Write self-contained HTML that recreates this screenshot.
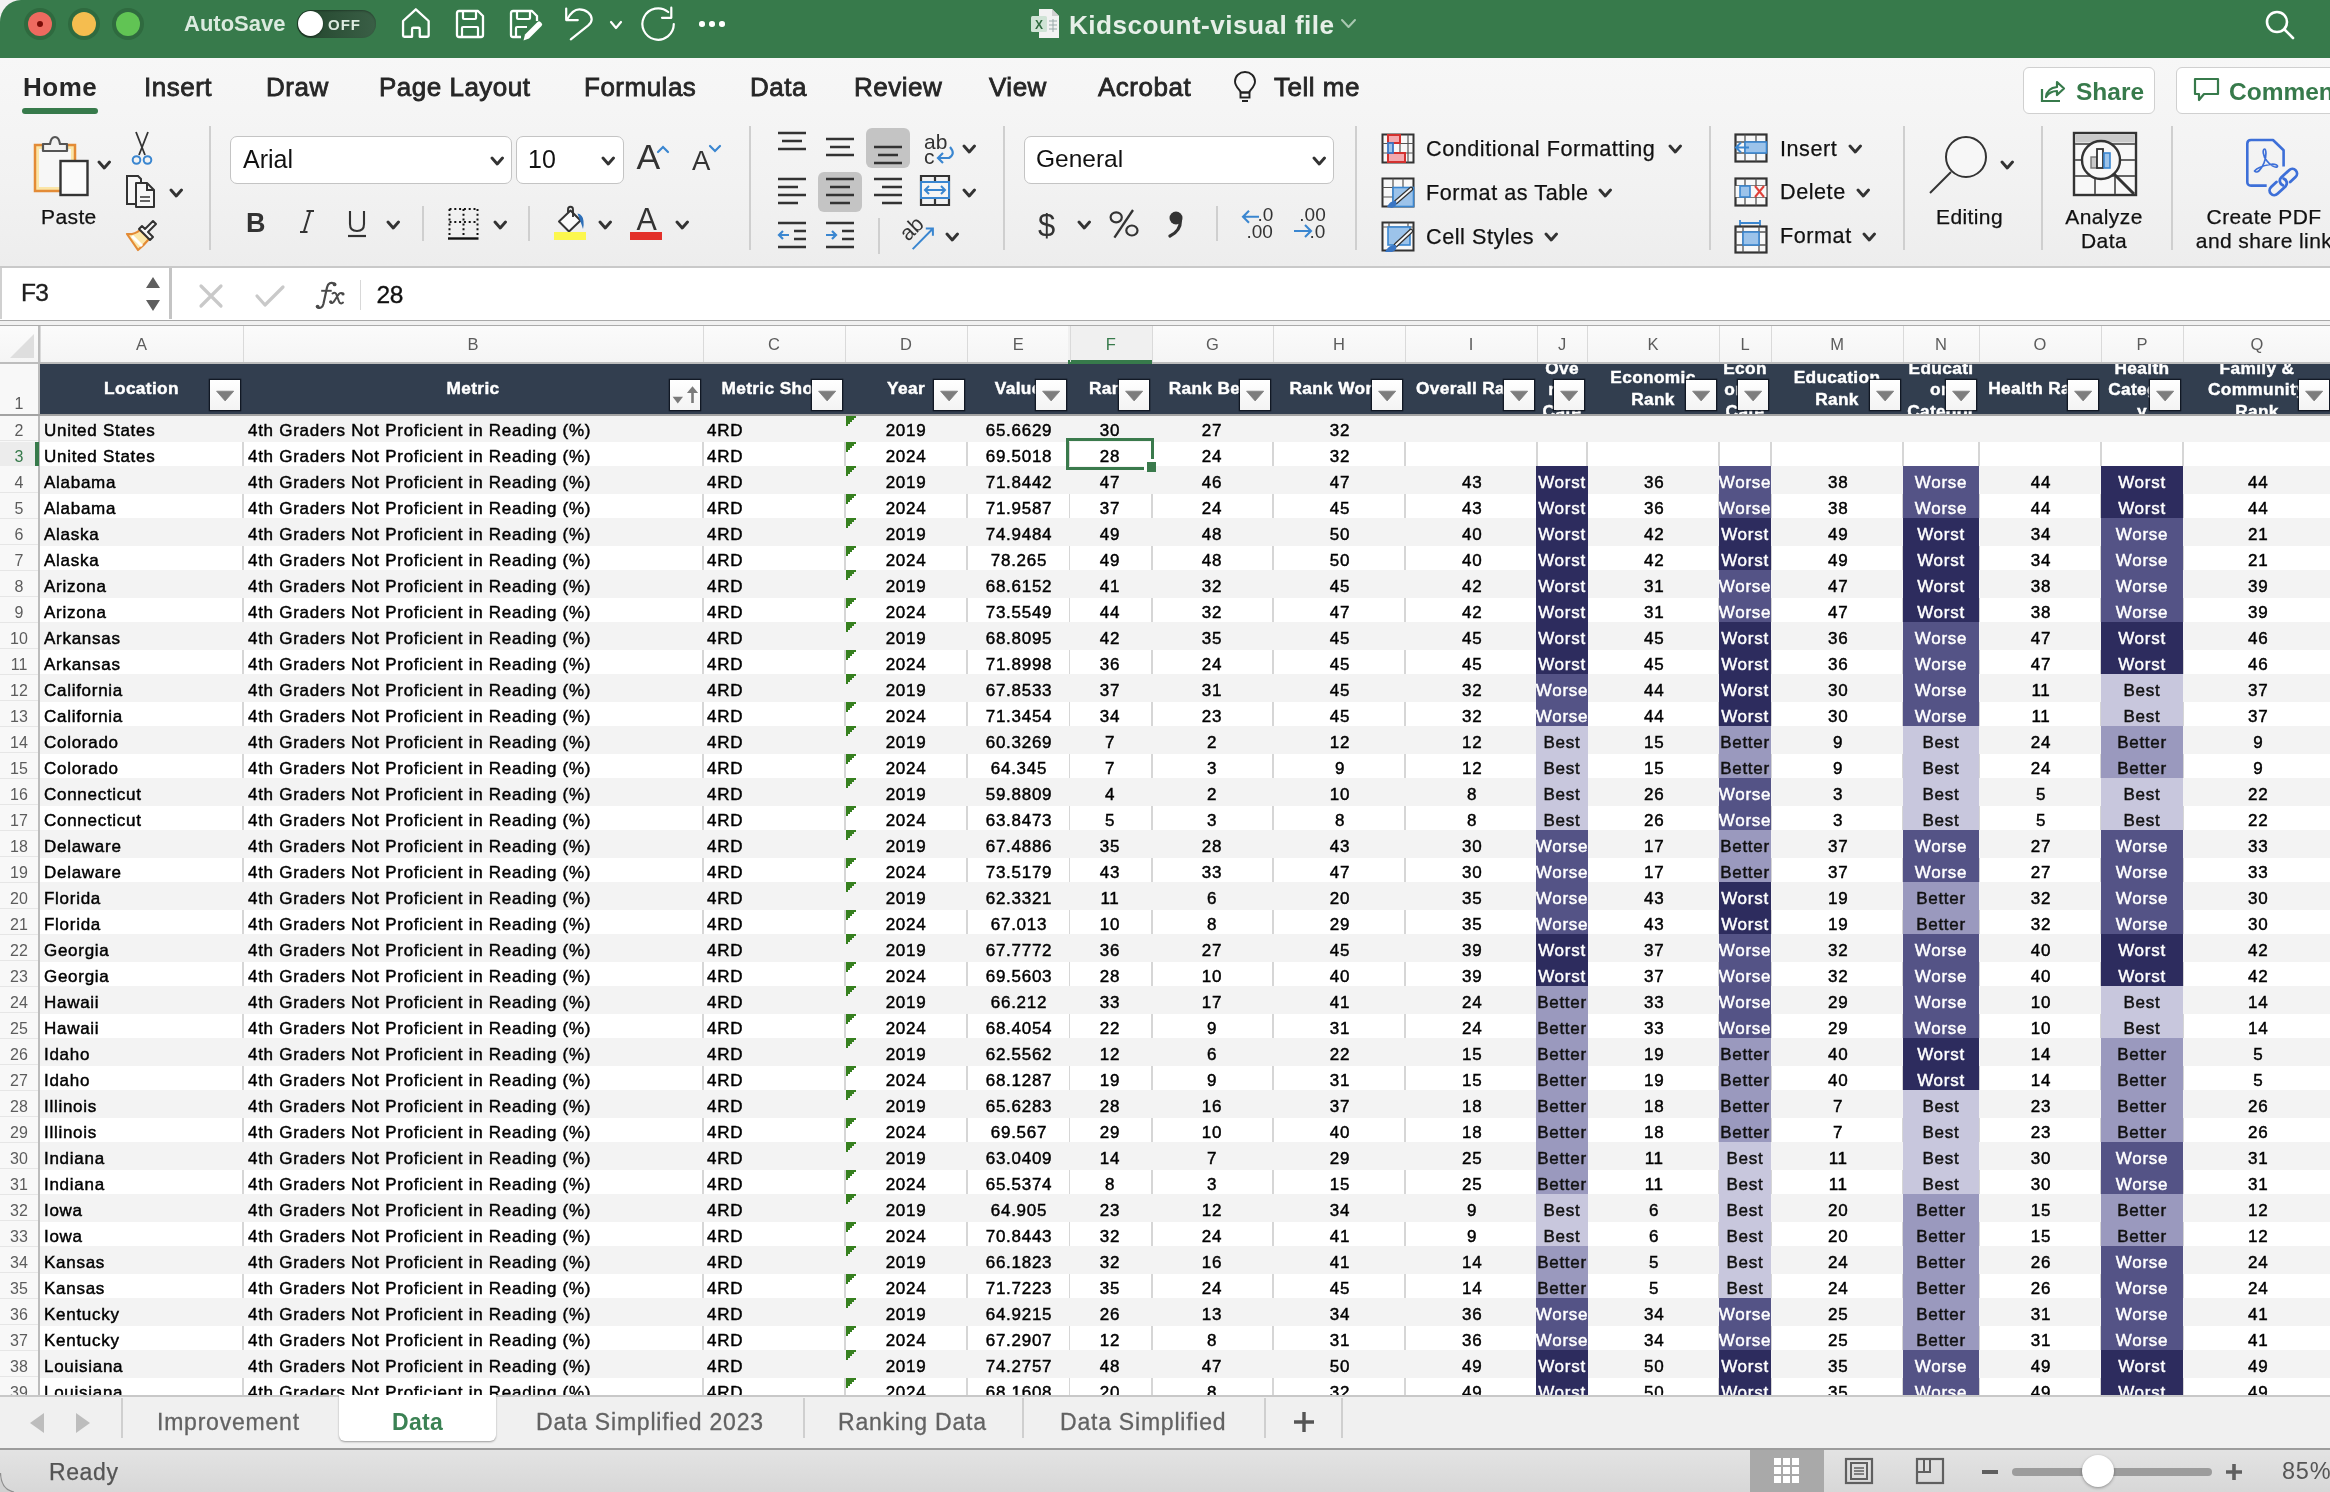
<!DOCTYPE html>
<html><head><meta charset="utf-8"><style>
html,body{margin:0;padding:0;}
body{width:2330px;height:1492px;overflow:hidden;position:relative;font-family:"Liberation Sans", sans-serif;background:#fff;}
svg{display:block;}
body{will-change:transform;}
</style></head><body>
<div style="position:absolute;left:0px;top:0px;width:30px;height:30px;background:#f2f2f2;"></div><div style="position:absolute;left:0;top:0;width:2330px;height:58px;background:#377a4b;border-top-left-radius:21px 22px;"></div><div style="position:absolute;left:24px;top:8px;width:32px;height:32px;border-radius:50%;background:#2f6a3f;"></div><div style="position:absolute;left:28px;top:12px;width:24px;height:24px;border-radius:50%;background:#ee6a5f;"></div><div style="position:absolute;left:68px;top:8px;width:32px;height:32px;border-radius:50%;background:#2f6a3f;"></div><div style="position:absolute;left:72px;top:12px;width:24px;height:24px;border-radius:50%;background:#f5bd4f;"></div><div style="position:absolute;left:112px;top:8px;width:32px;height:32px;border-radius:50%;background:#2f6a3f;"></div><div style="position:absolute;left:116px;top:12px;width:24px;height:24px;border-radius:50%;background:#61c454;"></div><div style="position:absolute;left:37px;top:21px;width:6px;height:6px;border-radius:50%;background:#7a0c07;"></div><div style="position:absolute;top:13.38px;font-size:22px;line-height:1;color:#dbeadf;white-space:nowrap;font-weight:bold;left:184.00px;">AutoSave</div><div style="position:absolute;left:297px;top:10px;width:79px;height:28px;border-radius:14px;background:linear-gradient(90deg,#22452c,#3a5f46);box-shadow:inset 0 1px 2px rgba(0,0,0,.3);"></div><div style="position:absolute;left:298px;top:11px;width:25px;height:25px;border-radius:50%;background:#fff;box-shadow:0 1px 2px rgba(0,0,0,.4);"></div><div style="position:absolute;top:16.80px;font-size:15px;line-height:1;color:#dbeadf;white-space:nowrap;font-weight:bold;letter-spacing:1px;left:328.00px;">OFF</div><svg style="position:absolute;left:399px;top:7px;" width="34" height="32" viewBox="0 0 34 32"><path d="M4.05 14 L16.85 2.3 L29.65 14 V28.5 Q29.65 29.75 28.4 29.75 H20.75 V22 Q20.75 20.75 19.5 20.75 H14.3 Q13.05 20.75 13.05 22 V29.75 H5.3 Q4.05 29.75 4.05 28.5 Z" fill="none" stroke="#ffffff" stroke-width="2.3" stroke-linejoin="round"/></svg><svg style="position:absolute;left:454px;top:8px;" width="32" height="32" viewBox="0 0 32 32"><path d="M3 5 Q3 3 5 3 H24 L29 8 V27 Q29 29 27 29 H5 Q3 29 3 27 Z" fill="none" stroke="#ffffff" stroke-width="2.3" stroke-linejoin="round"/><path d="M9 3.5 V10 Q9 11 10 11 H21 Q22 11 22 10 V3.5" fill="none" stroke="#ffffff" stroke-width="2.2"/><path d="M8 29 V20 Q8 19 9 19 H23 Q24 19 24 20 V29" fill="none" stroke="#ffffff" stroke-width="2.2"/></svg><svg style="position:absolute;left:508px;top:8px;" width="36" height="34" viewBox="0 0 36 34"><path d="M29 13 V8 L24 3 H5 Q3 3 3 5 V27 Q3 29 5 29 H13" fill="none" stroke="#ffffff" stroke-width="2.3" stroke-linejoin="round"/><path d="M9 3.5 V10 Q9 11 10 11 H21 Q22 11 22 10 V3.5" fill="none" stroke="#ffffff" stroke-width="2.2"/><path d="M8 29 V20 Q8 19 9 19 H19" fill="none" stroke="#ffffff" stroke-width="2.2"/><path d="M15.5 32.5 L17 26.5 L29.5 14 Q31 12.5 32.5 14 L33.5 15 Q35 16.5 33.5 18 L21 30.5 Z" fill="#ffffff"/></svg><svg style="position:absolute;left:563px;top:7px;" width="34" height="36" viewBox="0 0 34 36"><path d="M3.2 1.5 V13.1 H14.8" fill="none" stroke="#ffffff" stroke-width="2.2" stroke-linecap="round" stroke-linejoin="round"/><path d="M4 12.5 C8 5 12 2.3 16.3 2.3 C23 2.3 28.7 7 28.7 12.3 C28.7 15 27 17 25 18.7 L7.8 32.4" fill="none" stroke="#ffffff" stroke-width="2.2" stroke-linecap="round"/></svg><svg style="position:absolute;left:609px;top:20px;" width="14" height="10" viewBox="0 0 14 10"><path d="M2 2 L7.0 8 L12 2" fill="none" stroke="#ffffff" stroke-width="2.2" stroke-linecap="round" stroke-linejoin="round"/></svg><svg style="position:absolute;left:639px;top:6px;" width="40" height="38" viewBox="0 0 40 38"><path d="M29.2 6 A15.7 15.7 0 1 0 34.8 18" fill="none" stroke="#ffffff" stroke-width="2.2" stroke-linecap="round"/><path d="M23 11.8 H32.3 V1.7" fill="none" stroke="#ffffff" stroke-width="2.2" stroke-linecap="round" stroke-linejoin="round"/></svg><div style="position:absolute;left:699.2px;top:21.2px;width:5.6px;height:5.6px;border-radius:50%;background:#ffffff;"></div><div style="position:absolute;left:709.2px;top:21.2px;width:5.6px;height:5.6px;border-radius:50%;background:#ffffff;"></div><div style="position:absolute;left:719.2px;top:21.2px;width:5.6px;height:5.6px;border-radius:50%;background:#ffffff;"></div><svg style="position:absolute;left:1030px;top:8px;" width="30" height="31" viewBox="0 0 30 31"><path d="M9 1 H22 L29 8 V30 H9 Z" fill="#f2f2f2"/><path d="M22 1 V8 H29" fill="#d0d0d0"/><rect x="1" y="8" width="16" height="16" rx="1.5" fill="#cfe3d5"/><text x="9" y="20.5" font-size="12" font-family="Liberation Sans" text-anchor="middle" fill="#2f6a3f" font-weight="bold">X</text><path d="M19 13 H27 M19 17 H27 M19 21 H27 M23 11 V24" stroke="#9aa" stroke-width="1"/></svg><div style="position:absolute;top:11.82px;font-size:26.2px;line-height:1;color:#e6efe8;white-space:nowrap;font-weight:bold;letter-spacing:0.45px;left:1069.00px;">Kidscount-visual file</div><svg style="position:absolute;left:1340px;top:18px;" width="17" height="11" viewBox="0 0 17 11"><path d="M2 2 L8.5 9 L15 2" fill="none" stroke="#a8c8b0" stroke-width="2" stroke-linecap="round" stroke-linejoin="round"/></svg><svg style="position:absolute;left:2264px;top:9px;" width="32" height="31" viewBox="0 0 32 31"><circle cx="13" cy="13" r="10" fill="none" stroke="#ffffff" stroke-width="2.6"/><path d="M20.5 20.5 L29 29" stroke="#ffffff" stroke-width="2.6" stroke-linecap="round"/></svg><div style="position:absolute;left:0;top:58px;width:2330px;height:208px;background:linear-gradient(#f7f7f7,#f2f2f2 60%,#ededed);"></div><div style="position:absolute;left:0px;top:266px;width:2330px;height:2px;background:#c9c9c9;"></div><div style="position:absolute;top:73.99px;font-size:26px;line-height:1;color:#262626;white-space:nowrap;font-weight:bold;letter-spacing:0.5px;left:23.00px;">Home</div><div style="position:absolute;top:73.99px;font-size:26px;line-height:1;color:#262626;white-space:nowrap;letter-spacing:0.5px;left:144.00px;-webkit-text-stroke:0.8px #262626;">Insert</div><div style="position:absolute;top:73.99px;font-size:26px;line-height:1;color:#262626;white-space:nowrap;letter-spacing:0.5px;left:266.00px;-webkit-text-stroke:0.8px #262626;">Draw</div><div style="position:absolute;top:73.99px;font-size:26px;line-height:1;color:#262626;white-space:nowrap;letter-spacing:0.5px;left:379.00px;-webkit-text-stroke:0.8px #262626;">Page Layout</div><div style="position:absolute;top:73.99px;font-size:26px;line-height:1;color:#262626;white-space:nowrap;letter-spacing:0.5px;left:584.00px;-webkit-text-stroke:0.8px #262626;">Formulas</div><div style="position:absolute;top:73.99px;font-size:26px;line-height:1;color:#262626;white-space:nowrap;letter-spacing:0.5px;left:750.00px;-webkit-text-stroke:0.8px #262626;">Data</div><div style="position:absolute;top:73.99px;font-size:26px;line-height:1;color:#262626;white-space:nowrap;letter-spacing:0.5px;left:854.00px;-webkit-text-stroke:0.8px #262626;">Review</div><div style="position:absolute;top:73.99px;font-size:26px;line-height:1;color:#262626;white-space:nowrap;letter-spacing:0.5px;left:989.00px;-webkit-text-stroke:0.8px #262626;">View</div><div style="position:absolute;top:73.99px;font-size:26px;line-height:1;color:#262626;white-space:nowrap;letter-spacing:0.5px;left:1098.00px;-webkit-text-stroke:0.8px #262626;">Acrobat</div><div style="position:absolute;top:73.99px;font-size:26px;line-height:1;color:#262626;white-space:nowrap;letter-spacing:0.5px;left:1274.00px;-webkit-text-stroke:0.8px #262626;">Tell me</div><div style="position:absolute;left:22px;top:108px;width:76px;height:6px;border-radius:3px;background:#377a4b;"></div><svg style="position:absolute;left:1230px;top:68px;" width="30" height="38" viewBox="0 0 30 38"><path d="M11 24.5 C9.5 21.5 5 18.5 5 13.5 C5 8 9.5 4 15 4 C20.5 4 25 8 25 13.5 C25 18.5 20.5 21.5 19 24.5 Z" fill="#f7f7f7" stroke="#222" stroke-width="1.9" stroke-linejoin="round"/><rect x="10.5" y="24.5" width="9" height="5" fill="none" stroke="#222" stroke-width="1.9"/><path d="M12 33 H18" stroke="#222" stroke-width="2"/></svg><div style="position:absolute;left:2023px;top:66.5px;width:132px;height:47px;border-radius:6px;background:#fff;border:1.5px solid #d0d0d0;box-sizing:border-box;"></div><svg style="position:absolute;left:2039px;top:77px;" width="28" height="27" viewBox="0 0 28 27"><path d="M3 12 V24 H21" fill="none" stroke="#377a4b" stroke-width="2.2"/><path d="M7 20 Q8 11 18 10 V5 L25 11.5 L18 18 V14 Q11 14 7 20 Z" fill="none" stroke="#377a4b" stroke-width="2.2" stroke-linejoin="round"/></svg><div style="position:absolute;top:80.06px;font-size:24.5px;line-height:1;color:#377a4b;white-space:nowrap;font-weight:bold;left:2076.00px;">Share</div><div style="position:absolute;left:2176px;top:66.5px;width:170px;height:47px;border-radius:6px;background:#fff;border:1.5px solid #d0d0d0;box-sizing:border-box;"></div><svg style="position:absolute;left:2192px;top:76px;" width="28" height="28" viewBox="0 0 28 28"><path d="M3 3 H26 V18 H12 L7 24 V18 H3 Z" fill="none" stroke="#377a4b" stroke-width="2.2" stroke-linejoin="round"/></svg><div style="position:absolute;top:80.06px;font-size:24.5px;line-height:1;color:#377a4b;white-space:nowrap;font-weight:bold;left:2229.00px;">Comments</div><div style="position:absolute;left:209px;top:126px;width:2px;height:124px;background:#cfcfcf;"></div><div style="position:absolute;left:749px;top:126px;width:2px;height:124px;background:#cfcfcf;"></div><div style="position:absolute;left:1003px;top:126px;width:2px;height:124px;background:#cfcfcf;"></div><div style="position:absolute;left:1355px;top:126px;width:2px;height:124px;background:#cfcfcf;"></div><div style="position:absolute;left:1709px;top:126px;width:2px;height:124px;background:#cfcfcf;"></div><div style="position:absolute;left:1903px;top:126px;width:2px;height:124px;background:#cfcfcf;"></div><div style="position:absolute;left:2041px;top:126px;width:2px;height:124px;background:#cfcfcf;"></div><div style="position:absolute;left:2171px;top:126px;width:2px;height:124px;background:#cfcfcf;"></div><svg style="position:absolute;left:32px;top:134px;" width="60" height="64" viewBox="0 0 60 64">
      <rect x="3" y="11" width="40" height="46" fill="#fbe6a8" stroke="#e38b36" stroke-width="2.5"/>
      <rect x="7" y="15" width="32" height="38" fill="#f7f7f7"/>
      <path d="M11 17 V10 H18 Q19 3 23 3 Q27 3 28 10 H35 V17 Z" fill="#f2f2f2" stroke="#555" stroke-width="2.2" stroke-linejoin="round"/>
      <rect x="28.5" y="27" width="27" height="34" fill="#fafafa" stroke="#333" stroke-width="2.4"/></svg><svg style="position:absolute;left:97px;top:160px;" width="14.5" height="10" viewBox="0 0 14.5 10"><path d="M2 2 L7.25 8 L12.5 2" fill="none" stroke="#333333" stroke-width="2.9" stroke-linecap="round" stroke-linejoin="round"/></svg><div style="position:absolute;top:206.22px;font-size:21px;line-height:1;color:#111;white-space:nowrap;letter-spacing:0.4px;left:41.00px;-webkit-text-stroke:0.25px #111;">Paste</div><svg style="position:absolute;left:128px;top:130px;" width="28" height="36" viewBox="0 0 28 36"><path d="M8 2 L17 25 M20 2 L11 25" stroke="#333" stroke-width="1.8" fill="none"/>
      <circle cx="8.5" cy="30" r="3.8" fill="none" stroke="#3a86d0" stroke-width="2"/><circle cx="19.5" cy="30" r="3.8" fill="none" stroke="#3a86d0" stroke-width="2"/></svg><svg style="position:absolute;left:124px;top:174px;" width="36" height="36" viewBox="0 0 36 36"><path d="M3 2 H14 L17 5 V30 H3 Z" fill="#f7f7f7" stroke="#333" stroke-width="2"/>
      <path d="M12 9 H23 L30 16 V33 H12 Z" fill="#f7f7f7" stroke="#333" stroke-width="2" stroke-linejoin="round"/><path d="M23 9 V16 H30" fill="none" stroke="#333" stroke-width="2"/>
      <path d="M16 23 H26 M16 27 H26" stroke="#333" stroke-width="1.6"/></svg><svg style="position:absolute;left:169px;top:188px;" width="14.5" height="10" viewBox="0 0 14.5 10"><path d="M2 2 L7.25 8 L12.5 2" fill="none" stroke="#333333" stroke-width="2.9" stroke-linecap="round" stroke-linejoin="round"/></svg><svg style="position:absolute;left:124px;top:218px;" width="36" height="36" viewBox="0 0 36 36"><path d="M3 16 Q10 17 16 12 L25 21 Q20 27 14 32 Z" fill="#fbe6a8" stroke="#e38b36" stroke-width="2.2" stroke-linejoin="round"/>
      <path d="M8 18 L18 28" stroke="#fff" stroke-width="3"/>
      <path d="M15 11 L26 22 L29 19 L24 14 L32 6 L29 3 L21 11 L18 8 Z" fill="#f7f7f7" stroke="#333" stroke-width="2" stroke-linejoin="round"/></svg><div style="position:absolute;left:230px;top:136px;width:282px;height:48px;border-radius:7px;background:#fff;border:1px solid #c4c4c4;box-sizing:border-box;"></div><div style="position:absolute;top:147.34px;font-size:25px;line-height:1;color:#111;white-space:nowrap;left:243.00px;">Arial</div><svg style="position:absolute;left:490px;top:156px;" width="14.5" height="10" viewBox="0 0 14.5 10"><path d="M2 2 L7.25 8 L12.5 2" fill="none" stroke="#333333" stroke-width="2.9" stroke-linecap="round" stroke-linejoin="round"/></svg><div style="position:absolute;left:516px;top:136px;width:108px;height:48px;border-radius:7px;background:#fff;border:1px solid #c4c4c4;box-sizing:border-box;"></div><div style="position:absolute;top:147.34px;font-size:25px;line-height:1;color:#111;white-space:nowrap;left:528.00px;">10</div><svg style="position:absolute;left:601px;top:156px;" width="14.5" height="10" viewBox="0 0 14.5 10"><path d="M2 2 L7.25 8 L12.5 2" fill="none" stroke="#333333" stroke-width="2.9" stroke-linecap="round" stroke-linejoin="round"/></svg><div style="position:absolute;top:139.95px;font-size:35.5px;line-height:1;color:#333333;white-space:nowrap;left:636.50px;">A</div><svg style="position:absolute;left:656px;top:144px;" width="14" height="10" viewBox="0 0 14 10"><path d="M2 8 L7 3 L12 8" fill="none" stroke="#3a86d0" stroke-width="2.2" stroke-linecap="round"/></svg><div style="position:absolute;top:146.72px;font-size:27.5px;line-height:1;color:#333333;white-space:nowrap;left:692.00px;">A</div><svg style="position:absolute;left:708px;top:144px;" width="14" height="10" viewBox="0 0 14 10"><path d="M2 2 L7 7 L12 2" fill="none" stroke="#3a86d0" stroke-width="2.2" stroke-linecap="round"/></svg><div style="position:absolute;top:209.64px;font-size:27px;line-height:1;color:#333333;white-space:nowrap;font-weight:bold;left:246.00px;">B</div><svg style="position:absolute;left:298px;top:208px;" width="18" height="27" viewBox="0 0 18 27"><path d="M8.5 3 H16 M2 24 H9.5 M12.2 3 L5.8 24" stroke="#333" stroke-width="2" fill="none"/></svg><svg style="position:absolute;left:346px;top:208px;" width="22" height="30" viewBox="0 0 22 30"><path d="M4 3 V16 Q4 23 11 23 Q18 23 18 16 V3" fill="none" stroke="#333" stroke-width="2.1"/><path d="M2 28 H20" stroke="#333" stroke-width="2.2"/></svg><svg style="position:absolute;left:386px;top:220px;" width="14.5" height="10" viewBox="0 0 14.5 10"><path d="M2 2 L7.25 8 L12.5 2" fill="none" stroke="#333333" stroke-width="2.9" stroke-linecap="round" stroke-linejoin="round"/></svg><div style="position:absolute;left:422px;top:206px;width:2px;height:35px;background:#cfcfcf;"></div><svg style="position:absolute;left:446px;top:206px;" width="34" height="34" viewBox="0 0 34 34"><path d="M3.5 3 H32 M3.5 3 V29 M31.5 3 V29 M3.5 16 H32 M17.5 3 V29" fill="none" stroke="#111" stroke-width="2" stroke-dasharray="2 2.8"/><path d="M2 32.5 H32.5" stroke="#111" stroke-width="2.4"/></svg><svg style="position:absolute;left:493px;top:220px;" width="14.5" height="10" viewBox="0 0 14.5 10"><path d="M2 2 L7.25 8 L12.5 2" fill="none" stroke="#333333" stroke-width="2.9" stroke-linecap="round" stroke-linejoin="round"/></svg><div style="position:absolute;left:528px;top:206px;width:2px;height:35px;background:#cfcfcf;"></div><svg style="position:absolute;left:552px;top:204px;" width="36" height="38" viewBox="0 0 36 38"><path d="M7 17.5 L18.5 6.5 L28.5 16.5 L17 27.5 Z" fill="#fafafa" stroke="#333" stroke-width="2" stroke-linejoin="round"/>
      <path d="M16 8.5 V5.5 Q16 2.8 18.5 2.8 Q21 2.8 21 5.5 V13" fill="none" stroke="#333" stroke-width="1.9"/>
      <path d="M25.5 9.5 Q31 10.5 31.5 17 Q32 21 31 25 Q29.5 20 27.5 15 Z" fill="#2d6fb8"/>
      <rect x="2" y="28" width="32" height="8" fill="#fcf74e"/></svg><svg style="position:absolute;left:598px;top:220px;" width="14.5" height="10" viewBox="0 0 14.5 10"><path d="M2 2 L7.25 8 L12.5 2" fill="none" stroke="#333333" stroke-width="2.9" stroke-linecap="round" stroke-linejoin="round"/></svg><div style="position:absolute;top:204.18px;font-size:30.5px;line-height:1;color:#333333;white-space:nowrap;left:636.50px;">A</div><div style="position:absolute;left:630px;top:232px;width:32px;height:8px;background:#e3302a;"></div><svg style="position:absolute;left:675px;top:220px;" width="14.5" height="10" viewBox="0 0 14.5 10"><path d="M2 2 L7.25 8 L12.5 2" fill="none" stroke="#333333" stroke-width="2.9" stroke-linecap="round" stroke-linejoin="round"/></svg><svg style="position:absolute;left:770px;top:120px;" width="150" height="56" viewBox="0 0 150 56"><rect x="96" y="8" width="44" height="40" rx="6" fill="#c4c4c4"/><rect x="8" y="11.75" width="28" height="2.5" fill="#333"/><rect x="12" y="19.75" width="20" height="2.5" fill="#333"/><rect x="8" y="27.75" width="28" height="2.5" fill="#333"/><rect x="56" y="17.75" width="28" height="2.5" fill="#333"/><rect x="60" y="25.75" width="20" height="2.5" fill="#333"/><rect x="56" y="33.75" width="28" height="2.5" fill="#333"/><rect x="104" y="25.75" width="28" height="2.5" fill="#333"/><rect x="108" y="33.75" width="20" height="2.5" fill="#333"/><rect x="104" y="41.75" width="28" height="2.5" fill="#333"/></svg><div style="position:absolute;top:130.72px;font-size:21px;line-height:1;color:#333333;white-space:nowrap;left:924.00px;">ab</div><div style="position:absolute;top:145.72px;font-size:21px;line-height:1;color:#333333;white-space:nowrap;left:924.00px;">c</div><svg style="position:absolute;left:934px;top:145px;" width="22" height="22" viewBox="0 0 22 22"><path d="M16 2 Q22 9 15 13 H4" fill="none" stroke="#3a86d0" stroke-width="2.2"/><path d="M9 8 L4 13 L9 18" fill="none" stroke="#3a86d0" stroke-width="2.2"/></svg><svg style="position:absolute;left:962px;top:144px;" width="14.5" height="10" viewBox="0 0 14.5 10"><path d="M2 2 L7.25 8 L12.5 2" fill="none" stroke="#333333" stroke-width="2.9" stroke-linecap="round" stroke-linejoin="round"/></svg><svg style="position:absolute;left:770px;top:168px;" width="150" height="48" viewBox="0 0 150 48"><rect x="48" y="4" width="44" height="40" rx="6" fill="#c4c4c4"/><rect x="8" y="9.75" width="28" height="2.5" fill="#333"/><rect x="8" y="17.75" width="20" height="2.5" fill="#333"/><rect x="8" y="25.75" width="28" height="2.5" fill="#333"/><rect x="8" y="33.75" width="20" height="2.5" fill="#333"/><rect x="56" y="9.75" width="28" height="2.5" fill="#333"/><rect x="60" y="17.75" width="20" height="2.5" fill="#333"/><rect x="56" y="25.75" width="28" height="2.5" fill="#333"/><rect x="60" y="33.75" width="20" height="2.5" fill="#333"/><rect x="104" y="9.75" width="28" height="2.5" fill="#333"/><rect x="112" y="17.75" width="20" height="2.5" fill="#333"/><rect x="104" y="25.75" width="28" height="2.5" fill="#333"/><rect x="112" y="33.75" width="20" height="2.5" fill="#333"/></svg><svg style="position:absolute;left:918px;top:174px;" width="34" height="34" viewBox="0 0 34 34"><path d="M3 2 V31 H31 V2 Z M17 2 V31" fill="none" stroke="#333" stroke-width="2.2"/><rect x="3" y="8" width="28" height="16" fill="#f5f5f5" stroke="#3a86d0" stroke-width="2"/><path d="M7 16 H27 M11 12 L7 16 L11 20 M23 12 L27 16 L23 20" fill="none" stroke="#3a86d0" stroke-width="2"/></svg><svg style="position:absolute;left:962px;top:188px;" width="14.5" height="10" viewBox="0 0 14.5 10"><path d="M2 2 L7.25 8 L12.5 2" fill="none" stroke="#333333" stroke-width="2.9" stroke-linecap="round" stroke-linejoin="round"/></svg><svg style="position:absolute;left:770px;top:216px;" width="60" height="36" viewBox="0 0 60 36"><rect x="8" y="5.75" width="28" height="2.5" fill="#333"/><rect x="24" y="13.75" width="12" height="2.5" fill="#333"/><rect x="24" y="21.75" width="12" height="2.5" fill="#333"/><rect x="8" y="29.75" width="28" height="2.5" fill="#333"/><path d="M19 19 H9 M13 15 L9 19 L13 23" fill="none" stroke="#3a86d0" stroke-width="2.2"/></svg><svg style="position:absolute;left:818px;top:216px;" width="60" height="36" viewBox="0 0 60 36"><rect x="8" y="5.75" width="28" height="2.5" fill="#333"/><rect x="24" y="13.75" width="12" height="2.5" fill="#333"/><rect x="24" y="21.75" width="12" height="2.5" fill="#333"/><rect x="8" y="29.75" width="28" height="2.5" fill="#333"/><path d="M8 19 H18 M14 15 L18 19 L14 23" fill="none" stroke="#3a86d0" stroke-width="2.2"/></svg><div style="position:absolute;left:878px;top:218px;width:2px;height:36px;background:#cfcfcf;"></div><svg style="position:absolute;left:898px;top:216px;" width="40" height="38" viewBox="0 0 40 38"><text x="0" y="0" font-size="21.5" font-family="Liberation Sans" fill="#333" transform="translate(10 26) rotate(-44)">ab</text><path d="M14.7 33.1 L34.5 13 M27.8 12.6 H34.9 V19.8" fill="none" stroke="#3a86d0" stroke-width="2"/></svg><svg style="position:absolute;left:945px;top:232px;" width="14.5" height="10" viewBox="0 0 14.5 10"><path d="M2 2 L7.25 8 L12.5 2" fill="none" stroke="#333333" stroke-width="2.9" stroke-linecap="round" stroke-linejoin="round"/></svg><div style="position:absolute;left:1024px;top:136px;width:310px;height:48px;border-radius:7px;background:#fff;border:1px solid #c4c4c4;box-sizing:border-box;"></div><div style="position:absolute;top:147.26px;font-size:24.5px;line-height:1;color:#111;white-space:nowrap;left:1036.00px;">General</div><svg style="position:absolute;left:1312px;top:156px;" width="14.5" height="10" viewBox="0 0 14.5 10"><path d="M2 2 L7.25 8 L12.5 2" fill="none" stroke="#333333" stroke-width="2.9" stroke-linecap="round" stroke-linejoin="round"/></svg><div style="position:absolute;top:209.76px;font-size:31px;line-height:1;color:#333333;white-space:nowrap;left:1038.00px;">$</div><svg style="position:absolute;left:1077px;top:220px;" width="14.5" height="10" viewBox="0 0 14.5 10"><path d="M2 2 L7.25 8 L12.5 2" fill="none" stroke="#333333" stroke-width="2.9" stroke-linecap="round" stroke-linejoin="round"/></svg><svg style="position:absolute;left:1106px;top:207px;" width="36" height="34" viewBox="0 0 36 34"><ellipse cx="10.2" cy="10.3" rx="5.6" ry="5" fill="none" stroke="#333" stroke-width="2.2"/><ellipse cx="25.9" cy="23.5" rx="5.6" ry="5" fill="none" stroke="#333" stroke-width="2.2"/><path d="M8.4 30.7 L27 3" stroke="#333" stroke-width="2.3"/></svg><svg style="position:absolute;left:1166px;top:210px;" width="22" height="28" viewBox="0 0 22 28"><circle cx="10" cy="8" r="6.5" fill="#333"/><path d="M14.5 9 Q15 21 4 26" fill="none" stroke="#333" stroke-width="3.2" stroke-linecap="round"/></svg><div style="position:absolute;left:1216px;top:206px;width:2px;height:35px;background:#cfcfcf;"></div><div style="position:absolute;top:205.42px;font-size:19px;line-height:1;color:#333333;white-space:nowrap;left:1257.50px;">.0</div><div style="position:absolute;top:221.62px;font-size:19px;line-height:1;color:#333333;white-space:nowrap;left:1246.50px;">.00</div><svg style="position:absolute;left:1240px;top:207px;" width="22" height="19" viewBox="0 0 22 19"><path d="M19 9.7 H3 M9 3.7 L3 9.7 L9 15.7" fill="none" stroke="#3a86d0" stroke-width="2.1"/></svg><div style="position:absolute;top:205.42px;font-size:19px;line-height:1;color:#333333;white-space:nowrap;left:1299.30px;">.00</div><div style="position:absolute;top:221.62px;font-size:19px;line-height:1;color:#333333;white-space:nowrap;left:1309.50px;">.0</div><svg style="position:absolute;left:1292px;top:221px;" width="24" height="20" viewBox="0 0 24 20"><path d="M2 10 H19 M13 4 L19 10 L13 16" fill="none" stroke="#3a86d0" stroke-width="2.1"/></svg><svg style="position:absolute;left:1381px;top:133px;" width="34" height="31" viewBox="0 0 34 31"><rect x="1.5" y="1.5" width="31" height="28" fill="#f8f8f8" stroke="#333" stroke-width="2"/>
      <path d="M1.5 10.5 H32.5 M1.5 20 H32.5 M8 1.5 V29.5 M19 1.5 V29.5 M27 1.5 V29.5" stroke="#555" stroke-width="1.2"/>
      <rect x="7" y="2" width="12" height="8" fill="#f3a9ae" stroke="#d3312f" stroke-width="2"/>
      <rect x="7" y="20" width="17" height="9" fill="#f3a9ae" stroke="#d3312f" stroke-width="2"/>
      <rect x="7" y="10" width="5" height="10" fill="#9cc3ea" stroke="#3a76c4" stroke-width="1.8"/></svg><div style="position:absolute;top:137.72px;font-size:21.6px;line-height:1;color:#111;white-space:nowrap;letter-spacing:0.55px;left:1426.00px;-webkit-text-stroke:0.25px #111;">Conditional Formatting</div><svg style="position:absolute;left:1668px;top:144px;" width="14.5" height="10" viewBox="0 0 14.5 10"><path d="M2 2 L7.25 8 L12.5 2" fill="none" stroke="#333333" stroke-width="2.9" stroke-linecap="round" stroke-linejoin="round"/></svg><svg style="position:absolute;left:1381px;top:177px;" width="34" height="31" viewBox="0 0 34 31"><rect x="1.5" y="1.5" width="31" height="28" fill="#f8f8f8" stroke="#333" stroke-width="2"/>
      <path d="M1.5 10.5 H32.5 M1.5 20 H32.5 M12 1.5 V29.5 M22 1.5 V29.5" stroke="#555" stroke-width="1.2"/>
      <rect x="12" y="10.5" width="20.5" height="19" fill="#9cc3ea" stroke="#3a86d0" stroke-width="1.6"/>
      <path d="M30 12 L15 25" stroke="#333" stroke-width="4.5" stroke-linecap="round"/><path d="M30 12 L15 25" stroke="#f7f7f7" stroke-width="2" stroke-linecap="round"/>
      <path d="M6 30 Q9 23 15 24 Q17 29 11 31 Z" fill="#3a76c4"/></svg><div style="position:absolute;top:181.72px;font-size:21.6px;line-height:1;color:#111;white-space:nowrap;letter-spacing:0.55px;left:1426.00px;-webkit-text-stroke:0.25px #111;">Format as Table</div><svg style="position:absolute;left:1598px;top:188px;" width="14.5" height="10" viewBox="0 0 14.5 10"><path d="M2 2 L7.25 8 L12.5 2" fill="none" stroke="#333333" stroke-width="2.9" stroke-linecap="round" stroke-linejoin="round"/></svg><svg style="position:absolute;left:1381px;top:221px;" width="34" height="31" viewBox="0 0 34 31"><rect x="1.5" y="1.5" width="31" height="28" fill="#f8f8f8" stroke="#333" stroke-width="2"/>
      <path d="M1.5 6 H32.5 M8 1.5 V6 M27 1.5 V6" stroke="#555" stroke-width="1.2"/>
      <rect x="7" y="6" width="22" height="18" fill="#9cc3ea" stroke="#3a86d0" stroke-width="1.6"/>
      <path d="M30 10 L15 24" stroke="#333" stroke-width="4.5" stroke-linecap="round"/><path d="M30 10 L15 24" stroke="#f7f7f7" stroke-width="2" stroke-linecap="round"/>
      <path d="M4 31 Q8 23 15 24 Q17 29 11 31 Z" fill="#3a76c4"/></svg><div style="position:absolute;top:225.72px;font-size:21.6px;line-height:1;color:#111;white-space:nowrap;letter-spacing:0.55px;left:1426.00px;-webkit-text-stroke:0.25px #111;">Cell Styles</div><svg style="position:absolute;left:1544px;top:232px;" width="14.5" height="10" viewBox="0 0 14.5 10"><path d="M2 2 L7.25 8 L12.5 2" fill="none" stroke="#333333" stroke-width="2.9" stroke-linecap="round" stroke-linejoin="round"/></svg><svg style="position:absolute;left:1734px;top:133px;" width="34" height="30" viewBox="0 0 34 30"><rect x="1.5" y="1.5" width="31" height="27" fill="#f8f8f8" stroke="#333" stroke-width="2.2"/>
      <path d="M11 1.5 V28.5 M22 1.5 V28.5 M1.5 9 H32.5 M1.5 20 H32.5" stroke="#555" stroke-width="1.3"/>
      <rect x="11" y="9" width="21.5" height="11" fill="#9cc3ea" stroke="#3a86d0" stroke-width="1.6"/>
      <path d="M15 14.5 H2 M7 9.5 L2 14.5 L7 19.5" fill="none" stroke="#3a86d0" stroke-width="2"/></svg><div style="position:absolute;top:137.72px;font-size:21.6px;line-height:1;color:#111;white-space:nowrap;letter-spacing:0.55px;left:1780.00px;-webkit-text-stroke:0.25px #111;">Insert</div><svg style="position:absolute;left:1848px;top:144px;" width="14.5" height="10" viewBox="0 0 14.5 10"><path d="M2 2 L7.25 8 L12.5 2" fill="none" stroke="#333333" stroke-width="2.9" stroke-linecap="round" stroke-linejoin="round"/></svg><svg style="position:absolute;left:1734px;top:177px;" width="34" height="30" viewBox="0 0 34 30"><rect x="1.5" y="1.5" width="31" height="27" fill="#f8f8f8" stroke="#333" stroke-width="2.2"/>
      <path d="M11 1.5 V28.5 M22 1.5 V28.5 M1.5 9 H32.5 M1.5 20 H32.5" stroke="#555" stroke-width="1.3"/>
      <rect x="1.5" y="9" width="31" height="11" fill="#f8f8f8"/>
      <rect x="6" y="9" width="10" height="11" fill="#9cc3ea" stroke="#3a86d0" stroke-width="1.6"/>
      <path d="M21 9 L30 20 M30 9 L21 20" stroke="#e0413a" stroke-width="2"/></svg><div style="position:absolute;top:181.22px;font-size:21.6px;line-height:1;color:#111;white-space:nowrap;letter-spacing:0.55px;left:1780.00px;-webkit-text-stroke:0.25px #111;">Delete</div><svg style="position:absolute;left:1856px;top:188px;" width="14.5" height="10" viewBox="0 0 14.5 10"><path d="M2 2 L7.25 8 L12.5 2" fill="none" stroke="#333333" stroke-width="2.9" stroke-linecap="round" stroke-linejoin="round"/></svg><svg style="position:absolute;left:1734px;top:218px;" width="34" height="36" viewBox="0 0 34 36"><path d="M6 5 H26 M6 2 V8 M26 2 V8" stroke="#3a86d0" stroke-width="1.8"/>
      <rect x="1.5" y="8.5" width="31" height="26" fill="#f8f8f8" stroke="#333" stroke-width="2.2"/>
      <path d="M9 8.5 V34.5 M25 8.5 V34.5 M1.5 14 H32.5 M1.5 27 H32.5" stroke="#555" stroke-width="1.3"/>
      <rect x="9" y="14" width="16" height="13" fill="#9cc3ea" stroke="#3a86d0" stroke-width="1.6"/></svg><div style="position:absolute;top:225.22px;font-size:21.6px;line-height:1;color:#111;white-space:nowrap;letter-spacing:0.55px;left:1780.00px;-webkit-text-stroke:0.25px #111;">Format</div><svg style="position:absolute;left:1862px;top:232px;" width="14.5" height="10" viewBox="0 0 14.5 10"><path d="M2 2 L7.25 8 L12.5 2" fill="none" stroke="#333333" stroke-width="2.9" stroke-linecap="round" stroke-linejoin="round"/></svg><svg style="position:absolute;left:1926px;top:134px;" width="64" height="62" viewBox="0 0 64 62"><circle cx="40" cy="23" r="20" fill="#f7f7f7" stroke="#333" stroke-width="2"/><path d="M25 38 L4 59" stroke="#333" stroke-width="2"/></svg><svg style="position:absolute;left:2000px;top:160px;" width="14.5" height="10" viewBox="0 0 14.5 10"><path d="M2 2 L7.25 8 L12.5 2" fill="none" stroke="#333333" stroke-width="2.9" stroke-linecap="round" stroke-linejoin="round"/></svg><div style="position:absolute;top:206.22px;font-size:21px;line-height:1;color:#111;white-space:nowrap;letter-spacing:0.4px;left:1936.00px;-webkit-text-stroke:0.25px #111;">Editing</div><svg style="position:absolute;left:2071px;top:130px;" width="70" height="68" viewBox="0 0 70 68"><rect x="3" y="3" width="62" height="62" fill="#f8f8f8" stroke="#333" stroke-width="2.4"/>
      <rect x="4.5" y="4.5" width="59" height="8" fill="#c9c9c9"/>
      <path d="M4 14 H64 M4 30 H64 M4 46 H64 M24 46 V64 M44 46 V64" stroke="#666" stroke-width="2"/>
      <circle cx="30" cy="30" r="19" fill="#f8f8f8" stroke="#333" stroke-width="2.4"/>
      <path d="M43 44 L63 64" stroke="#333" stroke-width="3"/>
      <rect x="20" y="27" width="6" height="11" fill="#c9c9c9" stroke="#777" stroke-width="1.4"/>
      <rect x="26" y="19" width="6" height="19" fill="#fff" stroke="#333" stroke-width="1.8"/>
      <rect x="33" y="23" width="6" height="15" fill="#9cc3ea" stroke="#3a86d0" stroke-width="1.6"/></svg><div style="position:absolute;top:206.22px;font-size:21px;line-height:1;color:#111;white-space:nowrap;letter-spacing:0.4px;left:2044.00px;width:120px;text-align:center;-webkit-text-stroke:0.25px #111;">Analyze</div><div style="position:absolute;top:230.22px;font-size:21px;line-height:1;color:#111;white-space:nowrap;letter-spacing:0.4px;left:2044.00px;width:120px;text-align:center;-webkit-text-stroke:0.25px #111;">Data</div><svg style="position:absolute;left:2244px;top:136px;" width="58" height="62" viewBox="0 0 58 62"><path d="M22.7 49.6 H7 Q3.3 49.6 3.3 45.9 V7.7 Q3.3 4 7 4 H29 L39.6 14.3 V30.6" fill="none" stroke="#3d6fd8" stroke-width="2.6" stroke-linejoin="round"/>
      <path d="M10.5 35 C13 38 17 34 20 27 C23 20 22 13 20.5 13 C18.5 13 18.5 20 23 25 C26 29 31 32 33 31 C35 29.5 31 27.5 26 28.5 C20 29.5 13 32 10.5 35 Z" fill="none" stroke="#3d6fd8" stroke-width="1.7" stroke-linejoin="round"/>
      <g transform="translate(39.3 46) rotate(-43)" fill="none" stroke="#3d6fd8" stroke-width="2.8" stroke-linecap="round">
        <path d="M-5 -4.7 H-12.3 A4.7 4.7 0 0 0 -12.3 4.7 H-1.5 A4.7 4.7 0 0 0 2.5 -2.2"/>
        <path d="M5 4.7 H12.3 A4.7 4.7 0 0 0 12.3 -4.7 H1.5 A4.7 4.7 0 0 0 -2.5 2.2"/>
      </g></svg><div style="position:absolute;top:206.22px;font-size:21px;line-height:1;color:#111;white-space:nowrap;letter-spacing:0.4px;left:2184.00px;width:160px;text-align:center;-webkit-text-stroke:0.25px #111;">Create PDF</div><div style="position:absolute;top:230.22px;font-size:21px;line-height:1;color:#111;white-space:nowrap;letter-spacing:0.4px;left:2184.00px;width:160px;text-align:center;-webkit-text-stroke:0.25px #111;">and share link</div><div style="position:absolute;left:0px;top:268px;width:2330px;height:52px;background:#ffffff;"></div><div style="position:absolute;left:0px;top:268px;width:169px;height:51px;background:#ffffff;"></div><div style="position:absolute;left:169px;top:268px;width:3px;height:51px;background:#c4c4c4;"></div><div style="position:absolute;left:0px;top:268px;width:2px;height:51px;background:#d0d0d0;"></div><div style="position:absolute;top:281.26px;font-size:24.5px;line-height:1;color:#1e1e1e;white-space:nowrap;letter-spacing:-0.7px;left:21.00px;-webkit-text-stroke:0.35px #1e1e1e;">F3</div><svg style="position:absolute;left:144px;top:275px;" width="18" height="38" viewBox="0 0 18 38"><path d="M9 2 L16 13 H2 Z M2 25 H16 L9 36 Z" fill="#5f5f5f"/></svg><svg style="position:absolute;left:198px;top:283px;" width="26" height="26" viewBox="0 0 26 26"><path d="M3 3 L23 23 M23 3 L3 23" stroke="#c9c9c9" stroke-width="3.2" stroke-linecap="round"/></svg><svg style="position:absolute;left:254px;top:283px;" width="32" height="26" viewBox="0 0 32 26"><path d="M3 13 L11 22 L29 4" fill="none" stroke="#c9c9c9" stroke-width="3.2" stroke-linecap="round" stroke-linejoin="round"/></svg><svg style="position:absolute;left:314px;top:280px;" width="32" height="30" viewBox="0 0 32 30"><path d="M20.2 3.5 C17 2 14 3 13 7.5 L9.4 24 C8.6 27.3 6.3 28.6 3.8 27.4" fill="none" stroke="#4a4a4a" stroke-width="2.2" stroke-linecap="round"/><circle cx="20.6" cy="4.4" r="1.9" fill="#4a4a4a"/><circle cx="3.6" cy="26.6" r="1.9" fill="#4a4a4a"/><path d="M7.2 10.8 H17.7" stroke="#4a4a4a" stroke-width="1.9"/><path d="M18.5 13.5 C20.5 12 22 12.8 22.6 15 L25 21.5 C25.6 23.5 27.5 24 29 22.6 M28.8 13.4 C27 12.3 25.2 13.2 23.8 15.5 L20.6 20.5 C19.3 22.8 17.6 23.7 16.6 22.3" fill="none" stroke="#4a4a4a" stroke-width="2" stroke-linecap="round"/><circle cx="29" cy="14" r="1.6" fill="#4a4a4a"/><circle cx="16.7" cy="21.8" r="1.6" fill="#4a4a4a"/></svg><div style="position:absolute;left:360px;top:280px;width:1px;height:30px;background:#d8d8d8;"></div><div style="position:absolute;top:283.26px;font-size:24.5px;line-height:1;color:#111;white-space:nowrap;letter-spacing:-0.3px;left:376.50px;-webkit-text-stroke:0.35px #111;">28</div><div style="position:absolute;left:0px;top:320px;width:2330px;height:1px;background:#a9a9a9;"></div><div style="position:absolute;left:0px;top:321px;width:2330px;height:4px;background:#f1f1f1;"></div><div style="position:absolute;left:0px;top:324.5px;width:2330px;height:1.5px;background:#ababab;"></div><div style="position:absolute;left:0;top:326px;width:2330px;height:36px;background:linear-gradient(#fbfbfb,#f5f5f5);"></div><div style="position:absolute;left:0px;top:362px;width:2330px;height:2px;background:#bdbdbd;"></div><svg style="position:absolute;left:10px;top:334px;" width="25" height="24" viewBox="0 0 25 24"><path d="M24 0 V24 H0 Z" fill="#dedede"/></svg><div style="position:absolute;left:1068px;top:326px;width:84px;height:36px;background:#f0f0f0;"></div><div style="position:absolute;left:1068px;top:360px;width:84px;height:4px;background:#377a4b;"></div><div style="position:absolute;left:40px;top:326px;width:1px;height:36px;background:#dadada;"></div><div style="position:absolute;top:336.03px;font-size:16.5px;line-height:1;color:#5c5c5c;white-space:nowrap;left:111.50px;width:60px;text-align:center;">A</div><div style="position:absolute;left:243px;top:326px;width:1px;height:36px;background:#dadada;"></div><div style="position:absolute;top:336.03px;font-size:16.5px;line-height:1;color:#5c5c5c;white-space:nowrap;left:443.00px;width:60px;text-align:center;">B</div><div style="position:absolute;left:703px;top:326px;width:1px;height:36px;background:#dadada;"></div><div style="position:absolute;top:336.03px;font-size:16.5px;line-height:1;color:#5c5c5c;white-space:nowrap;left:744.00px;width:60px;text-align:center;">C</div><div style="position:absolute;left:845px;top:326px;width:1px;height:36px;background:#dadada;"></div><div style="position:absolute;top:336.03px;font-size:16.5px;line-height:1;color:#5c5c5c;white-space:nowrap;left:876.00px;width:60px;text-align:center;">D</div><div style="position:absolute;left:967px;top:326px;width:1px;height:36px;background:#dadada;"></div><div style="position:absolute;top:336.03px;font-size:16.5px;line-height:1;color:#5c5c5c;white-space:nowrap;left:988.25px;width:60px;text-align:center;">E</div><div style="position:absolute;left:1069.5px;top:326px;width:1px;height:36px;background:#dadada;"></div><div style="position:absolute;top:336.03px;font-size:16.5px;line-height:1;color:#377a4b;white-space:nowrap;left:1080.75px;width:60px;text-align:center;">F</div><div style="position:absolute;left:1152px;top:326px;width:1px;height:36px;background:#dadada;"></div><div style="position:absolute;top:336.03px;font-size:16.5px;line-height:1;color:#5c5c5c;white-space:nowrap;left:1182.50px;width:60px;text-align:center;">G</div><div style="position:absolute;left:1273px;top:326px;width:1px;height:36px;background:#dadada;"></div><div style="position:absolute;top:336.03px;font-size:16.5px;line-height:1;color:#5c5c5c;white-space:nowrap;left:1309.00px;width:60px;text-align:center;">H</div><div style="position:absolute;left:1405px;top:326px;width:1px;height:36px;background:#dadada;"></div><div style="position:absolute;top:336.03px;font-size:16.5px;line-height:1;color:#5c5c5c;white-space:nowrap;left:1441.00px;width:60px;text-align:center;">I</div><div style="position:absolute;left:1537px;top:326px;width:1px;height:36px;background:#dadada;"></div><div style="position:absolute;top:336.03px;font-size:16.5px;line-height:1;color:#5c5c5c;white-space:nowrap;left:1532.00px;width:60px;text-align:center;">J</div><div style="position:absolute;left:1587px;top:326px;width:1px;height:36px;background:#dadada;"></div><div style="position:absolute;top:336.03px;font-size:16.5px;line-height:1;color:#5c5c5c;white-space:nowrap;left:1623.00px;width:60px;text-align:center;">K</div><div style="position:absolute;left:1719px;top:326px;width:1px;height:36px;background:#dadada;"></div><div style="position:absolute;top:336.03px;font-size:16.5px;line-height:1;color:#5c5c5c;white-space:nowrap;left:1715.00px;width:60px;text-align:center;">L</div><div style="position:absolute;left:1771px;top:326px;width:1px;height:36px;background:#dadada;"></div><div style="position:absolute;top:336.03px;font-size:16.5px;line-height:1;color:#5c5c5c;white-space:nowrap;left:1807.00px;width:60px;text-align:center;">M</div><div style="position:absolute;left:1903px;top:326px;width:1px;height:36px;background:#dadada;"></div><div style="position:absolute;top:336.03px;font-size:16.5px;line-height:1;color:#5c5c5c;white-space:nowrap;left:1911.00px;width:60px;text-align:center;">N</div><div style="position:absolute;left:1979px;top:326px;width:1px;height:36px;background:#dadada;"></div><div style="position:absolute;top:336.03px;font-size:16.5px;line-height:1;color:#5c5c5c;white-space:nowrap;left:2010.00px;width:60px;text-align:center;">O</div><div style="position:absolute;left:2101px;top:326px;width:1px;height:36px;background:#dadada;"></div><div style="position:absolute;top:336.03px;font-size:16.5px;line-height:1;color:#5c5c5c;white-space:nowrap;left:2112.00px;width:60px;text-align:center;">P</div><div style="position:absolute;left:2183px;top:326px;width:1px;height:36px;background:#dadada;"></div><div style="position:absolute;top:336.03px;font-size:16.5px;line-height:1;color:#5c5c5c;white-space:nowrap;left:2227.00px;width:60px;text-align:center;">Q</div><div style="position:absolute;left:0;top:364px;width:38px;height:1032px;background:#f8f8f8;"></div><div style="position:absolute;left:38px;top:326px;width:2px;height:1070px;background:#bcbcbc;"></div><div style="position:absolute;top:396.46px;font-size:16px;line-height:1;color:#5c5c5c;white-space:nowrap;left:0.00px;width:38px;text-align:center;">1</div><div style="position:absolute;left:40px;top:363.5px;width:2290px;height:50px;background:#323e4f;"></div><div style="position:absolute;left:0px;top:413.5px;width:2330px;height:2px;background:#a3a3a3;"></div><div style="position:absolute;left:0;top:415px;width:2330px;height:981px;overflow:hidden;"><div style="position:absolute;left:0px;top:25px;width:38px;height:1px;background:#e6e6e6;"></div><div style="position:absolute;top:8.26px;font-size:16px;line-height:1;color:#5c5c5c;white-space:nowrap;left:0.00px;width:38px;text-align:center;">2</div><div style="position:absolute;left:40px;top:1px;width:2290px;height:26px;background:#f3f3f3;"></div><svg style="position:absolute;left:846px;top:1px;" width="10" height="10" viewBox="0 0 10 10"><path d="M0 0 H10 V2 H8 V4 H6 V6 H4 V8 H2 V10 H0 Z" fill="#36801f" shape-rendering="crispEdges"/></svg><div style="position:absolute;top:6.61px;font-size:17px;line-height:1;color:#000;white-space:nowrap;letter-spacing:0.72px;left:44.00px;-webkit-text-stroke:0.45px #000;">United States</div><div style="position:absolute;top:6.61px;font-size:17px;line-height:1;color:#000;white-space:nowrap;letter-spacing:0.72px;left:248.00px;-webkit-text-stroke:0.45px #000;">4th Graders Not Proficient in Reading (%)</div><div style="position:absolute;top:6.61px;font-size:17px;line-height:1;color:#000;white-space:nowrap;letter-spacing:0.72px;left:707.00px;-webkit-text-stroke:0.45px #000;">4RD</div><div style="position:absolute;top:6.61px;font-size:17px;line-height:1;color:#000;white-space:nowrap;letter-spacing:0.72px;left:856.00px;width:100px;text-align:center;-webkit-text-stroke:0.45px #000;">2019</div><div style="position:absolute;top:6.61px;font-size:17px;line-height:1;color:#000;white-space:nowrap;letter-spacing:0.72px;left:969.00px;width:100px;text-align:center;-webkit-text-stroke:0.45px #000;">65.6629</div><div style="position:absolute;top:6.61px;font-size:17px;line-height:1;color:#000;white-space:nowrap;letter-spacing:0.72px;left:1070.00px;width:80px;text-align:center;-webkit-text-stroke:0.45px #000;">30</div><div style="position:absolute;top:6.61px;font-size:17px;line-height:1;color:#000;white-space:nowrap;letter-spacing:0.72px;left:1162.00px;width:100px;text-align:center;-webkit-text-stroke:0.45px #000;">27</div><div style="position:absolute;top:6.61px;font-size:17px;line-height:1;color:#000;white-space:nowrap;letter-spacing:0.72px;left:1290.00px;width:100px;text-align:center;-webkit-text-stroke:0.45px #000;">32</div><div style="position:absolute;top:6.61px;font-size:17px;line-height:1;color:#000;white-space:nowrap;letter-spacing:0.72px;left:1422.20px;width:100px;text-align:center;-webkit-text-stroke:0.45px #000;"></div><div style="position:absolute;top:6.61px;font-size:17px;line-height:1;color:#000;white-space:nowrap;letter-spacing:0.72px;left:1604.20px;width:100px;text-align:center;-webkit-text-stroke:0.45px #000;"></div><div style="position:absolute;top:6.61px;font-size:17px;line-height:1;color:#000;white-space:nowrap;letter-spacing:0.72px;left:1788.20px;width:100px;text-align:center;-webkit-text-stroke:0.45px #000;"></div><div style="position:absolute;top:6.61px;font-size:17px;line-height:1;color:#000;white-space:nowrap;letter-spacing:0.72px;left:1991.00px;width:100px;text-align:center;-webkit-text-stroke:0.45px #000;"></div><div style="position:absolute;top:6.61px;font-size:17px;line-height:1;color:#000;white-space:nowrap;letter-spacing:0.72px;left:2208.30px;width:100px;text-align:center;-webkit-text-stroke:0.45px #000;"></div><div style="position:absolute;left:0px;top:27px;width:38px;height:24px;background:#ececec;"></div><div style="position:absolute;left:35px;top:27px;width:4px;height:24px;background:#377a4b;"></div><div style="position:absolute;top:34.26px;font-size:16px;line-height:1;color:#377a4b;white-space:nowrap;left:0.00px;width:38px;text-align:center;">3</div><div style="position:absolute;left:242px;top:27px;width:1.5px;height:24px;background:#d6d6d6;"></div><div style="position:absolute;left:702px;top:27px;width:1.5px;height:24px;background:#d6d6d6;"></div><div style="position:absolute;left:844px;top:27px;width:1.5px;height:24px;background:#d6d6d6;"></div><div style="position:absolute;left:966px;top:27px;width:1.5px;height:24px;background:#d6d6d6;"></div><div style="position:absolute;left:1068.5px;top:27px;width:1.5px;height:24px;background:#d6d6d6;"></div><div style="position:absolute;left:1151px;top:27px;width:1.5px;height:24px;background:#d6d6d6;"></div><div style="position:absolute;left:1272px;top:27px;width:1.5px;height:24px;background:#d6d6d6;"></div><div style="position:absolute;left:1404px;top:27px;width:1.5px;height:24px;background:#d6d6d6;"></div><div style="position:absolute;left:1536px;top:27px;width:1.5px;height:24px;background:#d6d6d6;"></div><div style="position:absolute;left:1586px;top:27px;width:1.5px;height:24px;background:#d6d6d6;"></div><div style="position:absolute;left:1718px;top:27px;width:1.5px;height:24px;background:#d6d6d6;"></div><div style="position:absolute;left:1770px;top:27px;width:1.5px;height:24px;background:#d6d6d6;"></div><div style="position:absolute;left:1902px;top:27px;width:1.5px;height:24px;background:#d6d6d6;"></div><div style="position:absolute;left:1978px;top:27px;width:1.5px;height:24px;background:#d6d6d6;"></div><div style="position:absolute;left:2100px;top:27px;width:1.5px;height:24px;background:#d6d6d6;"></div><div style="position:absolute;left:2182px;top:27px;width:1.5px;height:24px;background:#d6d6d6;"></div><svg style="position:absolute;left:846px;top:27px;" width="10" height="10" viewBox="0 0 10 10"><path d="M0 0 H10 V2 H8 V4 H6 V6 H4 V8 H2 V10 H0 Z" fill="#36801f" shape-rendering="crispEdges"/></svg><div style="position:absolute;top:32.61px;font-size:17px;line-height:1;color:#000;white-space:nowrap;letter-spacing:0.72px;left:44.00px;-webkit-text-stroke:0.45px #000;">United States</div><div style="position:absolute;top:32.61px;font-size:17px;line-height:1;color:#000;white-space:nowrap;letter-spacing:0.72px;left:248.00px;-webkit-text-stroke:0.45px #000;">4th Graders Not Proficient in Reading (%)</div><div style="position:absolute;top:32.61px;font-size:17px;line-height:1;color:#000;white-space:nowrap;letter-spacing:0.72px;left:707.00px;-webkit-text-stroke:0.45px #000;">4RD</div><div style="position:absolute;top:32.61px;font-size:17px;line-height:1;color:#000;white-space:nowrap;letter-spacing:0.72px;left:856.00px;width:100px;text-align:center;-webkit-text-stroke:0.45px #000;">2024</div><div style="position:absolute;top:32.61px;font-size:17px;line-height:1;color:#000;white-space:nowrap;letter-spacing:0.72px;left:969.00px;width:100px;text-align:center;-webkit-text-stroke:0.45px #000;">69.5018</div><div style="position:absolute;top:32.61px;font-size:17px;line-height:1;color:#000;white-space:nowrap;letter-spacing:0.72px;left:1070.00px;width:80px;text-align:center;-webkit-text-stroke:0.45px #000;">28</div><div style="position:absolute;top:32.61px;font-size:17px;line-height:1;color:#000;white-space:nowrap;letter-spacing:0.72px;left:1162.00px;width:100px;text-align:center;-webkit-text-stroke:0.45px #000;">24</div><div style="position:absolute;top:32.61px;font-size:17px;line-height:1;color:#000;white-space:nowrap;letter-spacing:0.72px;left:1290.00px;width:100px;text-align:center;-webkit-text-stroke:0.45px #000;">32</div><div style="position:absolute;top:32.61px;font-size:17px;line-height:1;color:#000;white-space:nowrap;letter-spacing:0.72px;left:1422.20px;width:100px;text-align:center;-webkit-text-stroke:0.45px #000;"></div><div style="position:absolute;top:32.61px;font-size:17px;line-height:1;color:#000;white-space:nowrap;letter-spacing:0.72px;left:1604.20px;width:100px;text-align:center;-webkit-text-stroke:0.45px #000;"></div><div style="position:absolute;top:32.61px;font-size:17px;line-height:1;color:#000;white-space:nowrap;letter-spacing:0.72px;left:1788.20px;width:100px;text-align:center;-webkit-text-stroke:0.45px #000;"></div><div style="position:absolute;top:32.61px;font-size:17px;line-height:1;color:#000;white-space:nowrap;letter-spacing:0.72px;left:1991.00px;width:100px;text-align:center;-webkit-text-stroke:0.45px #000;"></div><div style="position:absolute;top:32.61px;font-size:17px;line-height:1;color:#000;white-space:nowrap;letter-spacing:0.72px;left:2208.30px;width:100px;text-align:center;-webkit-text-stroke:0.45px #000;"></div><div style="position:absolute;left:0px;top:77px;width:38px;height:1px;background:#e6e6e6;"></div><div style="position:absolute;top:60.26px;font-size:16px;line-height:1;color:#5c5c5c;white-space:nowrap;left:0.00px;width:38px;text-align:center;">4</div><div style="position:absolute;left:40px;top:51px;width:2290px;height:28px;background:#f3f3f3;"></div><svg style="position:absolute;left:846px;top:51px;" width="10" height="10" viewBox="0 0 10 10"><path d="M0 0 H10 V2 H8 V4 H6 V6 H4 V8 H2 V10 H0 Z" fill="#36801f" shape-rendering="crispEdges"/></svg><div style="position:absolute;top:58.61px;font-size:17px;line-height:1;color:#000;white-space:nowrap;letter-spacing:0.72px;left:44.00px;-webkit-text-stroke:0.45px #000;">Alabama</div><div style="position:absolute;top:58.61px;font-size:17px;line-height:1;color:#000;white-space:nowrap;letter-spacing:0.72px;left:248.00px;-webkit-text-stroke:0.45px #000;">4th Graders Not Proficient in Reading (%)</div><div style="position:absolute;top:58.61px;font-size:17px;line-height:1;color:#000;white-space:nowrap;letter-spacing:0.72px;left:707.00px;-webkit-text-stroke:0.45px #000;">4RD</div><div style="position:absolute;top:58.61px;font-size:17px;line-height:1;color:#000;white-space:nowrap;letter-spacing:0.72px;left:856.00px;width:100px;text-align:center;-webkit-text-stroke:0.45px #000;">2019</div><div style="position:absolute;top:58.61px;font-size:17px;line-height:1;color:#000;white-space:nowrap;letter-spacing:0.72px;left:969.00px;width:100px;text-align:center;-webkit-text-stroke:0.45px #000;">71.8442</div><div style="position:absolute;top:58.61px;font-size:17px;line-height:1;color:#000;white-space:nowrap;letter-spacing:0.72px;left:1070.00px;width:80px;text-align:center;-webkit-text-stroke:0.45px #000;">47</div><div style="position:absolute;top:58.61px;font-size:17px;line-height:1;color:#000;white-space:nowrap;letter-spacing:0.72px;left:1162.00px;width:100px;text-align:center;-webkit-text-stroke:0.45px #000;">46</div><div style="position:absolute;top:58.61px;font-size:17px;line-height:1;color:#000;white-space:nowrap;letter-spacing:0.72px;left:1290.00px;width:100px;text-align:center;-webkit-text-stroke:0.45px #000;">47</div><div style="position:absolute;top:58.61px;font-size:17px;line-height:1;color:#000;white-space:nowrap;letter-spacing:0.72px;left:1422.20px;width:100px;text-align:center;-webkit-text-stroke:0.45px #000;">43</div><div style="position:absolute;top:58.61px;font-size:17px;line-height:1;color:#000;white-space:nowrap;letter-spacing:0.72px;left:1604.20px;width:100px;text-align:center;-webkit-text-stroke:0.45px #000;">36</div><div style="position:absolute;top:58.61px;font-size:17px;line-height:1;color:#000;white-space:nowrap;letter-spacing:0.72px;left:1788.20px;width:100px;text-align:center;-webkit-text-stroke:0.45px #000;">38</div><div style="position:absolute;top:58.61px;font-size:17px;line-height:1;color:#000;white-space:nowrap;letter-spacing:0.72px;left:1991.00px;width:100px;text-align:center;-webkit-text-stroke:0.45px #000;">44</div><div style="position:absolute;top:58.61px;font-size:17px;line-height:1;color:#000;white-space:nowrap;letter-spacing:0.72px;left:2208.30px;width:100px;text-align:center;-webkit-text-stroke:0.45px #000;">44</div><div style="position:absolute;left:1536px;top:51px;width:52px;height:28px;background:#2d2c5e;overflow:hidden;"><div style="position:absolute;top:7.61px;font-size:17px;line-height:1;color:#fff;white-space:nowrap;letter-spacing:0.72px;left:-74.00px;width:200px;text-align:center;-webkit-text-stroke:0.45px #fff;">Worst</div></div><div style="position:absolute;left:1719px;top:51px;width:52px;height:28px;background:#545386;overflow:hidden;"><div style="position:absolute;top:7.61px;font-size:17px;line-height:1;color:#fff;white-space:nowrap;letter-spacing:0.72px;left:-74.00px;width:200px;text-align:center;-webkit-text-stroke:0.45px #fff;">Worse</div></div><div style="position:absolute;left:1903px;top:51px;width:76px;height:28px;background:#545386;overflow:hidden;"><div style="position:absolute;top:7.61px;font-size:17px;line-height:1;color:#fff;white-space:nowrap;letter-spacing:0.72px;left:-62.00px;width:200px;text-align:center;-webkit-text-stroke:0.45px #fff;">Worse</div></div><div style="position:absolute;left:2101px;top:51px;width:82px;height:28px;background:#2d2c5e;overflow:hidden;"><div style="position:absolute;top:7.61px;font-size:17px;line-height:1;color:#fff;white-space:nowrap;letter-spacing:0.72px;left:-59.00px;width:200px;text-align:center;-webkit-text-stroke:0.45px #fff;">Worst</div></div><div style="position:absolute;left:0px;top:103px;width:38px;height:1px;background:#e6e6e6;"></div><div style="position:absolute;top:86.26px;font-size:16px;line-height:1;color:#5c5c5c;white-space:nowrap;left:0.00px;width:38px;text-align:center;">5</div><div style="position:absolute;left:242px;top:79px;width:1.5px;height:24px;background:#d6d6d6;"></div><div style="position:absolute;left:702px;top:79px;width:1.5px;height:24px;background:#d6d6d6;"></div><div style="position:absolute;left:844px;top:79px;width:1.5px;height:24px;background:#d6d6d6;"></div><div style="position:absolute;left:966px;top:79px;width:1.5px;height:24px;background:#d6d6d6;"></div><div style="position:absolute;left:1068.5px;top:79px;width:1.5px;height:24px;background:#d6d6d6;"></div><div style="position:absolute;left:1151px;top:79px;width:1.5px;height:24px;background:#d6d6d6;"></div><div style="position:absolute;left:1272px;top:79px;width:1.5px;height:24px;background:#d6d6d6;"></div><div style="position:absolute;left:1404px;top:79px;width:1.5px;height:24px;background:#d6d6d6;"></div><div style="position:absolute;left:1536px;top:79px;width:1.5px;height:24px;background:#d6d6d6;"></div><div style="position:absolute;left:1586px;top:79px;width:1.5px;height:24px;background:#d6d6d6;"></div><div style="position:absolute;left:1718px;top:79px;width:1.5px;height:24px;background:#d6d6d6;"></div><div style="position:absolute;left:1770px;top:79px;width:1.5px;height:24px;background:#d6d6d6;"></div><div style="position:absolute;left:1902px;top:79px;width:1.5px;height:24px;background:#d6d6d6;"></div><div style="position:absolute;left:1978px;top:79px;width:1.5px;height:24px;background:#d6d6d6;"></div><div style="position:absolute;left:2100px;top:79px;width:1.5px;height:24px;background:#d6d6d6;"></div><div style="position:absolute;left:2182px;top:79px;width:1.5px;height:24px;background:#d6d6d6;"></div><svg style="position:absolute;left:846px;top:79px;" width="10" height="10" viewBox="0 0 10 10"><path d="M0 0 H10 V2 H8 V4 H6 V6 H4 V8 H2 V10 H0 Z" fill="#36801f" shape-rendering="crispEdges"/></svg><div style="position:absolute;top:84.61px;font-size:17px;line-height:1;color:#000;white-space:nowrap;letter-spacing:0.72px;left:44.00px;-webkit-text-stroke:0.45px #000;">Alabama</div><div style="position:absolute;top:84.61px;font-size:17px;line-height:1;color:#000;white-space:nowrap;letter-spacing:0.72px;left:248.00px;-webkit-text-stroke:0.45px #000;">4th Graders Not Proficient in Reading (%)</div><div style="position:absolute;top:84.61px;font-size:17px;line-height:1;color:#000;white-space:nowrap;letter-spacing:0.72px;left:707.00px;-webkit-text-stroke:0.45px #000;">4RD</div><div style="position:absolute;top:84.61px;font-size:17px;line-height:1;color:#000;white-space:nowrap;letter-spacing:0.72px;left:856.00px;width:100px;text-align:center;-webkit-text-stroke:0.45px #000;">2024</div><div style="position:absolute;top:84.61px;font-size:17px;line-height:1;color:#000;white-space:nowrap;letter-spacing:0.72px;left:969.00px;width:100px;text-align:center;-webkit-text-stroke:0.45px #000;">71.9587</div><div style="position:absolute;top:84.61px;font-size:17px;line-height:1;color:#000;white-space:nowrap;letter-spacing:0.72px;left:1070.00px;width:80px;text-align:center;-webkit-text-stroke:0.45px #000;">37</div><div style="position:absolute;top:84.61px;font-size:17px;line-height:1;color:#000;white-space:nowrap;letter-spacing:0.72px;left:1162.00px;width:100px;text-align:center;-webkit-text-stroke:0.45px #000;">24</div><div style="position:absolute;top:84.61px;font-size:17px;line-height:1;color:#000;white-space:nowrap;letter-spacing:0.72px;left:1290.00px;width:100px;text-align:center;-webkit-text-stroke:0.45px #000;">45</div><div style="position:absolute;top:84.61px;font-size:17px;line-height:1;color:#000;white-space:nowrap;letter-spacing:0.72px;left:1422.20px;width:100px;text-align:center;-webkit-text-stroke:0.45px #000;">43</div><div style="position:absolute;top:84.61px;font-size:17px;line-height:1;color:#000;white-space:nowrap;letter-spacing:0.72px;left:1604.20px;width:100px;text-align:center;-webkit-text-stroke:0.45px #000;">36</div><div style="position:absolute;top:84.61px;font-size:17px;line-height:1;color:#000;white-space:nowrap;letter-spacing:0.72px;left:1788.20px;width:100px;text-align:center;-webkit-text-stroke:0.45px #000;">38</div><div style="position:absolute;top:84.61px;font-size:17px;line-height:1;color:#000;white-space:nowrap;letter-spacing:0.72px;left:1991.00px;width:100px;text-align:center;-webkit-text-stroke:0.45px #000;">44</div><div style="position:absolute;top:84.61px;font-size:17px;line-height:1;color:#000;white-space:nowrap;letter-spacing:0.72px;left:2208.30px;width:100px;text-align:center;-webkit-text-stroke:0.45px #000;">44</div><div style="position:absolute;left:1536px;top:79px;width:52px;height:24px;background:#2d2c5e;overflow:hidden;"><div style="position:absolute;top:5.61px;font-size:17px;line-height:1;color:#fff;white-space:nowrap;letter-spacing:0.72px;left:-74.00px;width:200px;text-align:center;-webkit-text-stroke:0.45px #fff;">Worst</div></div><div style="position:absolute;left:1719px;top:79px;width:52px;height:24px;background:#545386;overflow:hidden;"><div style="position:absolute;top:5.61px;font-size:17px;line-height:1;color:#fff;white-space:nowrap;letter-spacing:0.72px;left:-74.00px;width:200px;text-align:center;-webkit-text-stroke:0.45px #fff;">Worse</div></div><div style="position:absolute;left:1903px;top:79px;width:76px;height:24px;background:#545386;overflow:hidden;"><div style="position:absolute;top:5.61px;font-size:17px;line-height:1;color:#fff;white-space:nowrap;letter-spacing:0.72px;left:-62.00px;width:200px;text-align:center;-webkit-text-stroke:0.45px #fff;">Worse</div></div><div style="position:absolute;left:2101px;top:79px;width:82px;height:24px;background:#2d2c5e;overflow:hidden;"><div style="position:absolute;top:5.61px;font-size:17px;line-height:1;color:#fff;white-space:nowrap;letter-spacing:0.72px;left:-59.00px;width:200px;text-align:center;-webkit-text-stroke:0.45px #fff;">Worst</div></div><div style="position:absolute;left:0px;top:129px;width:38px;height:1px;background:#e6e6e6;"></div><div style="position:absolute;top:112.26px;font-size:16px;line-height:1;color:#5c5c5c;white-space:nowrap;left:0.00px;width:38px;text-align:center;">6</div><div style="position:absolute;left:40px;top:103px;width:2290px;height:28px;background:#f3f3f3;"></div><svg style="position:absolute;left:846px;top:103px;" width="10" height="10" viewBox="0 0 10 10"><path d="M0 0 H10 V2 H8 V4 H6 V6 H4 V8 H2 V10 H0 Z" fill="#36801f" shape-rendering="crispEdges"/></svg><div style="position:absolute;top:110.61px;font-size:17px;line-height:1;color:#000;white-space:nowrap;letter-spacing:0.72px;left:44.00px;-webkit-text-stroke:0.45px #000;">Alaska</div><div style="position:absolute;top:110.61px;font-size:17px;line-height:1;color:#000;white-space:nowrap;letter-spacing:0.72px;left:248.00px;-webkit-text-stroke:0.45px #000;">4th Graders Not Proficient in Reading (%)</div><div style="position:absolute;top:110.61px;font-size:17px;line-height:1;color:#000;white-space:nowrap;letter-spacing:0.72px;left:707.00px;-webkit-text-stroke:0.45px #000;">4RD</div><div style="position:absolute;top:110.61px;font-size:17px;line-height:1;color:#000;white-space:nowrap;letter-spacing:0.72px;left:856.00px;width:100px;text-align:center;-webkit-text-stroke:0.45px #000;">2019</div><div style="position:absolute;top:110.61px;font-size:17px;line-height:1;color:#000;white-space:nowrap;letter-spacing:0.72px;left:969.00px;width:100px;text-align:center;-webkit-text-stroke:0.45px #000;">74.9484</div><div style="position:absolute;top:110.61px;font-size:17px;line-height:1;color:#000;white-space:nowrap;letter-spacing:0.72px;left:1070.00px;width:80px;text-align:center;-webkit-text-stroke:0.45px #000;">49</div><div style="position:absolute;top:110.61px;font-size:17px;line-height:1;color:#000;white-space:nowrap;letter-spacing:0.72px;left:1162.00px;width:100px;text-align:center;-webkit-text-stroke:0.45px #000;">48</div><div style="position:absolute;top:110.61px;font-size:17px;line-height:1;color:#000;white-space:nowrap;letter-spacing:0.72px;left:1290.00px;width:100px;text-align:center;-webkit-text-stroke:0.45px #000;">50</div><div style="position:absolute;top:110.61px;font-size:17px;line-height:1;color:#000;white-space:nowrap;letter-spacing:0.72px;left:1422.20px;width:100px;text-align:center;-webkit-text-stroke:0.45px #000;">40</div><div style="position:absolute;top:110.61px;font-size:17px;line-height:1;color:#000;white-space:nowrap;letter-spacing:0.72px;left:1604.20px;width:100px;text-align:center;-webkit-text-stroke:0.45px #000;">42</div><div style="position:absolute;top:110.61px;font-size:17px;line-height:1;color:#000;white-space:nowrap;letter-spacing:0.72px;left:1788.20px;width:100px;text-align:center;-webkit-text-stroke:0.45px #000;">49</div><div style="position:absolute;top:110.61px;font-size:17px;line-height:1;color:#000;white-space:nowrap;letter-spacing:0.72px;left:1991.00px;width:100px;text-align:center;-webkit-text-stroke:0.45px #000;">34</div><div style="position:absolute;top:110.61px;font-size:17px;line-height:1;color:#000;white-space:nowrap;letter-spacing:0.72px;left:2208.30px;width:100px;text-align:center;-webkit-text-stroke:0.45px #000;">21</div><div style="position:absolute;left:1536px;top:103px;width:52px;height:28px;background:#2d2c5e;overflow:hidden;"><div style="position:absolute;top:7.61px;font-size:17px;line-height:1;color:#fff;white-space:nowrap;letter-spacing:0.72px;left:-74.00px;width:200px;text-align:center;-webkit-text-stroke:0.45px #fff;">Worst</div></div><div style="position:absolute;left:1719px;top:103px;width:52px;height:28px;background:#2d2c5e;overflow:hidden;"><div style="position:absolute;top:7.61px;font-size:17px;line-height:1;color:#fff;white-space:nowrap;letter-spacing:0.72px;left:-74.00px;width:200px;text-align:center;-webkit-text-stroke:0.45px #fff;">Worst</div></div><div style="position:absolute;left:1903px;top:103px;width:76px;height:28px;background:#2d2c5e;overflow:hidden;"><div style="position:absolute;top:7.61px;font-size:17px;line-height:1;color:#fff;white-space:nowrap;letter-spacing:0.72px;left:-62.00px;width:200px;text-align:center;-webkit-text-stroke:0.45px #fff;">Worst</div></div><div style="position:absolute;left:2101px;top:103px;width:82px;height:28px;background:#545386;overflow:hidden;"><div style="position:absolute;top:7.61px;font-size:17px;line-height:1;color:#fff;white-space:nowrap;letter-spacing:0.72px;left:-59.00px;width:200px;text-align:center;-webkit-text-stroke:0.45px #fff;">Worse</div></div><div style="position:absolute;left:0px;top:155px;width:38px;height:1px;background:#e6e6e6;"></div><div style="position:absolute;top:138.26px;font-size:16px;line-height:1;color:#5c5c5c;white-space:nowrap;left:0.00px;width:38px;text-align:center;">7</div><div style="position:absolute;left:242px;top:131px;width:1.5px;height:24px;background:#d6d6d6;"></div><div style="position:absolute;left:702px;top:131px;width:1.5px;height:24px;background:#d6d6d6;"></div><div style="position:absolute;left:844px;top:131px;width:1.5px;height:24px;background:#d6d6d6;"></div><div style="position:absolute;left:966px;top:131px;width:1.5px;height:24px;background:#d6d6d6;"></div><div style="position:absolute;left:1068.5px;top:131px;width:1.5px;height:24px;background:#d6d6d6;"></div><div style="position:absolute;left:1151px;top:131px;width:1.5px;height:24px;background:#d6d6d6;"></div><div style="position:absolute;left:1272px;top:131px;width:1.5px;height:24px;background:#d6d6d6;"></div><div style="position:absolute;left:1404px;top:131px;width:1.5px;height:24px;background:#d6d6d6;"></div><div style="position:absolute;left:1536px;top:131px;width:1.5px;height:24px;background:#d6d6d6;"></div><div style="position:absolute;left:1586px;top:131px;width:1.5px;height:24px;background:#d6d6d6;"></div><div style="position:absolute;left:1718px;top:131px;width:1.5px;height:24px;background:#d6d6d6;"></div><div style="position:absolute;left:1770px;top:131px;width:1.5px;height:24px;background:#d6d6d6;"></div><div style="position:absolute;left:1902px;top:131px;width:1.5px;height:24px;background:#d6d6d6;"></div><div style="position:absolute;left:1978px;top:131px;width:1.5px;height:24px;background:#d6d6d6;"></div><div style="position:absolute;left:2100px;top:131px;width:1.5px;height:24px;background:#d6d6d6;"></div><div style="position:absolute;left:2182px;top:131px;width:1.5px;height:24px;background:#d6d6d6;"></div><svg style="position:absolute;left:846px;top:131px;" width="10" height="10" viewBox="0 0 10 10"><path d="M0 0 H10 V2 H8 V4 H6 V6 H4 V8 H2 V10 H0 Z" fill="#36801f" shape-rendering="crispEdges"/></svg><div style="position:absolute;top:136.61px;font-size:17px;line-height:1;color:#000;white-space:nowrap;letter-spacing:0.72px;left:44.00px;-webkit-text-stroke:0.45px #000;">Alaska</div><div style="position:absolute;top:136.61px;font-size:17px;line-height:1;color:#000;white-space:nowrap;letter-spacing:0.72px;left:248.00px;-webkit-text-stroke:0.45px #000;">4th Graders Not Proficient in Reading (%)</div><div style="position:absolute;top:136.61px;font-size:17px;line-height:1;color:#000;white-space:nowrap;letter-spacing:0.72px;left:707.00px;-webkit-text-stroke:0.45px #000;">4RD</div><div style="position:absolute;top:136.61px;font-size:17px;line-height:1;color:#000;white-space:nowrap;letter-spacing:0.72px;left:856.00px;width:100px;text-align:center;-webkit-text-stroke:0.45px #000;">2024</div><div style="position:absolute;top:136.61px;font-size:17px;line-height:1;color:#000;white-space:nowrap;letter-spacing:0.72px;left:969.00px;width:100px;text-align:center;-webkit-text-stroke:0.45px #000;">78.265</div><div style="position:absolute;top:136.61px;font-size:17px;line-height:1;color:#000;white-space:nowrap;letter-spacing:0.72px;left:1070.00px;width:80px;text-align:center;-webkit-text-stroke:0.45px #000;">49</div><div style="position:absolute;top:136.61px;font-size:17px;line-height:1;color:#000;white-space:nowrap;letter-spacing:0.72px;left:1162.00px;width:100px;text-align:center;-webkit-text-stroke:0.45px #000;">48</div><div style="position:absolute;top:136.61px;font-size:17px;line-height:1;color:#000;white-space:nowrap;letter-spacing:0.72px;left:1290.00px;width:100px;text-align:center;-webkit-text-stroke:0.45px #000;">50</div><div style="position:absolute;top:136.61px;font-size:17px;line-height:1;color:#000;white-space:nowrap;letter-spacing:0.72px;left:1422.20px;width:100px;text-align:center;-webkit-text-stroke:0.45px #000;">40</div><div style="position:absolute;top:136.61px;font-size:17px;line-height:1;color:#000;white-space:nowrap;letter-spacing:0.72px;left:1604.20px;width:100px;text-align:center;-webkit-text-stroke:0.45px #000;">42</div><div style="position:absolute;top:136.61px;font-size:17px;line-height:1;color:#000;white-space:nowrap;letter-spacing:0.72px;left:1788.20px;width:100px;text-align:center;-webkit-text-stroke:0.45px #000;">49</div><div style="position:absolute;top:136.61px;font-size:17px;line-height:1;color:#000;white-space:nowrap;letter-spacing:0.72px;left:1991.00px;width:100px;text-align:center;-webkit-text-stroke:0.45px #000;">34</div><div style="position:absolute;top:136.61px;font-size:17px;line-height:1;color:#000;white-space:nowrap;letter-spacing:0.72px;left:2208.30px;width:100px;text-align:center;-webkit-text-stroke:0.45px #000;">21</div><div style="position:absolute;left:1536px;top:131px;width:52px;height:24px;background:#2d2c5e;overflow:hidden;"><div style="position:absolute;top:5.61px;font-size:17px;line-height:1;color:#fff;white-space:nowrap;letter-spacing:0.72px;left:-74.00px;width:200px;text-align:center;-webkit-text-stroke:0.45px #fff;">Worst</div></div><div style="position:absolute;left:1719px;top:131px;width:52px;height:24px;background:#2d2c5e;overflow:hidden;"><div style="position:absolute;top:5.61px;font-size:17px;line-height:1;color:#fff;white-space:nowrap;letter-spacing:0.72px;left:-74.00px;width:200px;text-align:center;-webkit-text-stroke:0.45px #fff;">Worst</div></div><div style="position:absolute;left:1903px;top:131px;width:76px;height:24px;background:#2d2c5e;overflow:hidden;"><div style="position:absolute;top:5.61px;font-size:17px;line-height:1;color:#fff;white-space:nowrap;letter-spacing:0.72px;left:-62.00px;width:200px;text-align:center;-webkit-text-stroke:0.45px #fff;">Worst</div></div><div style="position:absolute;left:2101px;top:131px;width:82px;height:24px;background:#545386;overflow:hidden;"><div style="position:absolute;top:5.61px;font-size:17px;line-height:1;color:#fff;white-space:nowrap;letter-spacing:0.72px;left:-59.00px;width:200px;text-align:center;-webkit-text-stroke:0.45px #fff;">Worse</div></div><div style="position:absolute;left:0px;top:181px;width:38px;height:1px;background:#e6e6e6;"></div><div style="position:absolute;top:164.26px;font-size:16px;line-height:1;color:#5c5c5c;white-space:nowrap;left:0.00px;width:38px;text-align:center;">8</div><div style="position:absolute;left:40px;top:155px;width:2290px;height:28px;background:#f3f3f3;"></div><svg style="position:absolute;left:846px;top:155px;" width="10" height="10" viewBox="0 0 10 10"><path d="M0 0 H10 V2 H8 V4 H6 V6 H4 V8 H2 V10 H0 Z" fill="#36801f" shape-rendering="crispEdges"/></svg><div style="position:absolute;top:162.61px;font-size:17px;line-height:1;color:#000;white-space:nowrap;letter-spacing:0.72px;left:44.00px;-webkit-text-stroke:0.45px #000;">Arizona</div><div style="position:absolute;top:162.61px;font-size:17px;line-height:1;color:#000;white-space:nowrap;letter-spacing:0.72px;left:248.00px;-webkit-text-stroke:0.45px #000;">4th Graders Not Proficient in Reading (%)</div><div style="position:absolute;top:162.61px;font-size:17px;line-height:1;color:#000;white-space:nowrap;letter-spacing:0.72px;left:707.00px;-webkit-text-stroke:0.45px #000;">4RD</div><div style="position:absolute;top:162.61px;font-size:17px;line-height:1;color:#000;white-space:nowrap;letter-spacing:0.72px;left:856.00px;width:100px;text-align:center;-webkit-text-stroke:0.45px #000;">2019</div><div style="position:absolute;top:162.61px;font-size:17px;line-height:1;color:#000;white-space:nowrap;letter-spacing:0.72px;left:969.00px;width:100px;text-align:center;-webkit-text-stroke:0.45px #000;">68.6152</div><div style="position:absolute;top:162.61px;font-size:17px;line-height:1;color:#000;white-space:nowrap;letter-spacing:0.72px;left:1070.00px;width:80px;text-align:center;-webkit-text-stroke:0.45px #000;">41</div><div style="position:absolute;top:162.61px;font-size:17px;line-height:1;color:#000;white-space:nowrap;letter-spacing:0.72px;left:1162.00px;width:100px;text-align:center;-webkit-text-stroke:0.45px #000;">32</div><div style="position:absolute;top:162.61px;font-size:17px;line-height:1;color:#000;white-space:nowrap;letter-spacing:0.72px;left:1290.00px;width:100px;text-align:center;-webkit-text-stroke:0.45px #000;">45</div><div style="position:absolute;top:162.61px;font-size:17px;line-height:1;color:#000;white-space:nowrap;letter-spacing:0.72px;left:1422.20px;width:100px;text-align:center;-webkit-text-stroke:0.45px #000;">42</div><div style="position:absolute;top:162.61px;font-size:17px;line-height:1;color:#000;white-space:nowrap;letter-spacing:0.72px;left:1604.20px;width:100px;text-align:center;-webkit-text-stroke:0.45px #000;">31</div><div style="position:absolute;top:162.61px;font-size:17px;line-height:1;color:#000;white-space:nowrap;letter-spacing:0.72px;left:1788.20px;width:100px;text-align:center;-webkit-text-stroke:0.45px #000;">47</div><div style="position:absolute;top:162.61px;font-size:17px;line-height:1;color:#000;white-space:nowrap;letter-spacing:0.72px;left:1991.00px;width:100px;text-align:center;-webkit-text-stroke:0.45px #000;">38</div><div style="position:absolute;top:162.61px;font-size:17px;line-height:1;color:#000;white-space:nowrap;letter-spacing:0.72px;left:2208.30px;width:100px;text-align:center;-webkit-text-stroke:0.45px #000;">39</div><div style="position:absolute;left:1536px;top:155px;width:52px;height:28px;background:#2d2c5e;overflow:hidden;"><div style="position:absolute;top:7.61px;font-size:17px;line-height:1;color:#fff;white-space:nowrap;letter-spacing:0.72px;left:-74.00px;width:200px;text-align:center;-webkit-text-stroke:0.45px #fff;">Worst</div></div><div style="position:absolute;left:1719px;top:155px;width:52px;height:28px;background:#545386;overflow:hidden;"><div style="position:absolute;top:7.61px;font-size:17px;line-height:1;color:#fff;white-space:nowrap;letter-spacing:0.72px;left:-74.00px;width:200px;text-align:center;-webkit-text-stroke:0.45px #fff;">Worse</div></div><div style="position:absolute;left:1903px;top:155px;width:76px;height:28px;background:#2d2c5e;overflow:hidden;"><div style="position:absolute;top:7.61px;font-size:17px;line-height:1;color:#fff;white-space:nowrap;letter-spacing:0.72px;left:-62.00px;width:200px;text-align:center;-webkit-text-stroke:0.45px #fff;">Worst</div></div><div style="position:absolute;left:2101px;top:155px;width:82px;height:28px;background:#545386;overflow:hidden;"><div style="position:absolute;top:7.61px;font-size:17px;line-height:1;color:#fff;white-space:nowrap;letter-spacing:0.72px;left:-59.00px;width:200px;text-align:center;-webkit-text-stroke:0.45px #fff;">Worse</div></div><div style="position:absolute;left:0px;top:207px;width:38px;height:1px;background:#e6e6e6;"></div><div style="position:absolute;top:190.26px;font-size:16px;line-height:1;color:#5c5c5c;white-space:nowrap;left:0.00px;width:38px;text-align:center;">9</div><div style="position:absolute;left:242px;top:183px;width:1.5px;height:24px;background:#d6d6d6;"></div><div style="position:absolute;left:702px;top:183px;width:1.5px;height:24px;background:#d6d6d6;"></div><div style="position:absolute;left:844px;top:183px;width:1.5px;height:24px;background:#d6d6d6;"></div><div style="position:absolute;left:966px;top:183px;width:1.5px;height:24px;background:#d6d6d6;"></div><div style="position:absolute;left:1068.5px;top:183px;width:1.5px;height:24px;background:#d6d6d6;"></div><div style="position:absolute;left:1151px;top:183px;width:1.5px;height:24px;background:#d6d6d6;"></div><div style="position:absolute;left:1272px;top:183px;width:1.5px;height:24px;background:#d6d6d6;"></div><div style="position:absolute;left:1404px;top:183px;width:1.5px;height:24px;background:#d6d6d6;"></div><div style="position:absolute;left:1536px;top:183px;width:1.5px;height:24px;background:#d6d6d6;"></div><div style="position:absolute;left:1586px;top:183px;width:1.5px;height:24px;background:#d6d6d6;"></div><div style="position:absolute;left:1718px;top:183px;width:1.5px;height:24px;background:#d6d6d6;"></div><div style="position:absolute;left:1770px;top:183px;width:1.5px;height:24px;background:#d6d6d6;"></div><div style="position:absolute;left:1902px;top:183px;width:1.5px;height:24px;background:#d6d6d6;"></div><div style="position:absolute;left:1978px;top:183px;width:1.5px;height:24px;background:#d6d6d6;"></div><div style="position:absolute;left:2100px;top:183px;width:1.5px;height:24px;background:#d6d6d6;"></div><div style="position:absolute;left:2182px;top:183px;width:1.5px;height:24px;background:#d6d6d6;"></div><svg style="position:absolute;left:846px;top:183px;" width="10" height="10" viewBox="0 0 10 10"><path d="M0 0 H10 V2 H8 V4 H6 V6 H4 V8 H2 V10 H0 Z" fill="#36801f" shape-rendering="crispEdges"/></svg><div style="position:absolute;top:188.61px;font-size:17px;line-height:1;color:#000;white-space:nowrap;letter-spacing:0.72px;left:44.00px;-webkit-text-stroke:0.45px #000;">Arizona</div><div style="position:absolute;top:188.61px;font-size:17px;line-height:1;color:#000;white-space:nowrap;letter-spacing:0.72px;left:248.00px;-webkit-text-stroke:0.45px #000;">4th Graders Not Proficient in Reading (%)</div><div style="position:absolute;top:188.61px;font-size:17px;line-height:1;color:#000;white-space:nowrap;letter-spacing:0.72px;left:707.00px;-webkit-text-stroke:0.45px #000;">4RD</div><div style="position:absolute;top:188.61px;font-size:17px;line-height:1;color:#000;white-space:nowrap;letter-spacing:0.72px;left:856.00px;width:100px;text-align:center;-webkit-text-stroke:0.45px #000;">2024</div><div style="position:absolute;top:188.61px;font-size:17px;line-height:1;color:#000;white-space:nowrap;letter-spacing:0.72px;left:969.00px;width:100px;text-align:center;-webkit-text-stroke:0.45px #000;">73.5549</div><div style="position:absolute;top:188.61px;font-size:17px;line-height:1;color:#000;white-space:nowrap;letter-spacing:0.72px;left:1070.00px;width:80px;text-align:center;-webkit-text-stroke:0.45px #000;">44</div><div style="position:absolute;top:188.61px;font-size:17px;line-height:1;color:#000;white-space:nowrap;letter-spacing:0.72px;left:1162.00px;width:100px;text-align:center;-webkit-text-stroke:0.45px #000;">32</div><div style="position:absolute;top:188.61px;font-size:17px;line-height:1;color:#000;white-space:nowrap;letter-spacing:0.72px;left:1290.00px;width:100px;text-align:center;-webkit-text-stroke:0.45px #000;">47</div><div style="position:absolute;top:188.61px;font-size:17px;line-height:1;color:#000;white-space:nowrap;letter-spacing:0.72px;left:1422.20px;width:100px;text-align:center;-webkit-text-stroke:0.45px #000;">42</div><div style="position:absolute;top:188.61px;font-size:17px;line-height:1;color:#000;white-space:nowrap;letter-spacing:0.72px;left:1604.20px;width:100px;text-align:center;-webkit-text-stroke:0.45px #000;">31</div><div style="position:absolute;top:188.61px;font-size:17px;line-height:1;color:#000;white-space:nowrap;letter-spacing:0.72px;left:1788.20px;width:100px;text-align:center;-webkit-text-stroke:0.45px #000;">47</div><div style="position:absolute;top:188.61px;font-size:17px;line-height:1;color:#000;white-space:nowrap;letter-spacing:0.72px;left:1991.00px;width:100px;text-align:center;-webkit-text-stroke:0.45px #000;">38</div><div style="position:absolute;top:188.61px;font-size:17px;line-height:1;color:#000;white-space:nowrap;letter-spacing:0.72px;left:2208.30px;width:100px;text-align:center;-webkit-text-stroke:0.45px #000;">39</div><div style="position:absolute;left:1536px;top:183px;width:52px;height:24px;background:#2d2c5e;overflow:hidden;"><div style="position:absolute;top:5.61px;font-size:17px;line-height:1;color:#fff;white-space:nowrap;letter-spacing:0.72px;left:-74.00px;width:200px;text-align:center;-webkit-text-stroke:0.45px #fff;">Worst</div></div><div style="position:absolute;left:1719px;top:183px;width:52px;height:24px;background:#545386;overflow:hidden;"><div style="position:absolute;top:5.61px;font-size:17px;line-height:1;color:#fff;white-space:nowrap;letter-spacing:0.72px;left:-74.00px;width:200px;text-align:center;-webkit-text-stroke:0.45px #fff;">Worse</div></div><div style="position:absolute;left:1903px;top:183px;width:76px;height:24px;background:#2d2c5e;overflow:hidden;"><div style="position:absolute;top:5.61px;font-size:17px;line-height:1;color:#fff;white-space:nowrap;letter-spacing:0.72px;left:-62.00px;width:200px;text-align:center;-webkit-text-stroke:0.45px #fff;">Worst</div></div><div style="position:absolute;left:2101px;top:183px;width:82px;height:24px;background:#545386;overflow:hidden;"><div style="position:absolute;top:5.61px;font-size:17px;line-height:1;color:#fff;white-space:nowrap;letter-spacing:0.72px;left:-59.00px;width:200px;text-align:center;-webkit-text-stroke:0.45px #fff;">Worse</div></div><div style="position:absolute;left:0px;top:233px;width:38px;height:1px;background:#e6e6e6;"></div><div style="position:absolute;top:216.26px;font-size:16px;line-height:1;color:#5c5c5c;white-space:nowrap;left:0.00px;width:38px;text-align:center;">10</div><div style="position:absolute;left:40px;top:207px;width:2290px;height:28px;background:#f3f3f3;"></div><svg style="position:absolute;left:846px;top:207px;" width="10" height="10" viewBox="0 0 10 10"><path d="M0 0 H10 V2 H8 V4 H6 V6 H4 V8 H2 V10 H0 Z" fill="#36801f" shape-rendering="crispEdges"/></svg><div style="position:absolute;top:214.61px;font-size:17px;line-height:1;color:#000;white-space:nowrap;letter-spacing:0.72px;left:44.00px;-webkit-text-stroke:0.45px #000;">Arkansas</div><div style="position:absolute;top:214.61px;font-size:17px;line-height:1;color:#000;white-space:nowrap;letter-spacing:0.72px;left:248.00px;-webkit-text-stroke:0.45px #000;">4th Graders Not Proficient in Reading (%)</div><div style="position:absolute;top:214.61px;font-size:17px;line-height:1;color:#000;white-space:nowrap;letter-spacing:0.72px;left:707.00px;-webkit-text-stroke:0.45px #000;">4RD</div><div style="position:absolute;top:214.61px;font-size:17px;line-height:1;color:#000;white-space:nowrap;letter-spacing:0.72px;left:856.00px;width:100px;text-align:center;-webkit-text-stroke:0.45px #000;">2019</div><div style="position:absolute;top:214.61px;font-size:17px;line-height:1;color:#000;white-space:nowrap;letter-spacing:0.72px;left:969.00px;width:100px;text-align:center;-webkit-text-stroke:0.45px #000;">68.8095</div><div style="position:absolute;top:214.61px;font-size:17px;line-height:1;color:#000;white-space:nowrap;letter-spacing:0.72px;left:1070.00px;width:80px;text-align:center;-webkit-text-stroke:0.45px #000;">42</div><div style="position:absolute;top:214.61px;font-size:17px;line-height:1;color:#000;white-space:nowrap;letter-spacing:0.72px;left:1162.00px;width:100px;text-align:center;-webkit-text-stroke:0.45px #000;">35</div><div style="position:absolute;top:214.61px;font-size:17px;line-height:1;color:#000;white-space:nowrap;letter-spacing:0.72px;left:1290.00px;width:100px;text-align:center;-webkit-text-stroke:0.45px #000;">45</div><div style="position:absolute;top:214.61px;font-size:17px;line-height:1;color:#000;white-space:nowrap;letter-spacing:0.72px;left:1422.20px;width:100px;text-align:center;-webkit-text-stroke:0.45px #000;">45</div><div style="position:absolute;top:214.61px;font-size:17px;line-height:1;color:#000;white-space:nowrap;letter-spacing:0.72px;left:1604.20px;width:100px;text-align:center;-webkit-text-stroke:0.45px #000;">45</div><div style="position:absolute;top:214.61px;font-size:17px;line-height:1;color:#000;white-space:nowrap;letter-spacing:0.72px;left:1788.20px;width:100px;text-align:center;-webkit-text-stroke:0.45px #000;">36</div><div style="position:absolute;top:214.61px;font-size:17px;line-height:1;color:#000;white-space:nowrap;letter-spacing:0.72px;left:1991.00px;width:100px;text-align:center;-webkit-text-stroke:0.45px #000;">47</div><div style="position:absolute;top:214.61px;font-size:17px;line-height:1;color:#000;white-space:nowrap;letter-spacing:0.72px;left:2208.30px;width:100px;text-align:center;-webkit-text-stroke:0.45px #000;">46</div><div style="position:absolute;left:1536px;top:207px;width:52px;height:28px;background:#2d2c5e;overflow:hidden;"><div style="position:absolute;top:7.61px;font-size:17px;line-height:1;color:#fff;white-space:nowrap;letter-spacing:0.72px;left:-74.00px;width:200px;text-align:center;-webkit-text-stroke:0.45px #fff;">Worst</div></div><div style="position:absolute;left:1719px;top:207px;width:52px;height:28px;background:#2d2c5e;overflow:hidden;"><div style="position:absolute;top:7.61px;font-size:17px;line-height:1;color:#fff;white-space:nowrap;letter-spacing:0.72px;left:-74.00px;width:200px;text-align:center;-webkit-text-stroke:0.45px #fff;">Worst</div></div><div style="position:absolute;left:1903px;top:207px;width:76px;height:28px;background:#545386;overflow:hidden;"><div style="position:absolute;top:7.61px;font-size:17px;line-height:1;color:#fff;white-space:nowrap;letter-spacing:0.72px;left:-62.00px;width:200px;text-align:center;-webkit-text-stroke:0.45px #fff;">Worse</div></div><div style="position:absolute;left:2101px;top:207px;width:82px;height:28px;background:#2d2c5e;overflow:hidden;"><div style="position:absolute;top:7.61px;font-size:17px;line-height:1;color:#fff;white-space:nowrap;letter-spacing:0.72px;left:-59.00px;width:200px;text-align:center;-webkit-text-stroke:0.45px #fff;">Worst</div></div><div style="position:absolute;left:0px;top:259px;width:38px;height:1px;background:#e6e6e6;"></div><div style="position:absolute;top:242.26px;font-size:16px;line-height:1;color:#5c5c5c;white-space:nowrap;left:0.00px;width:38px;text-align:center;">11</div><div style="position:absolute;left:242px;top:235px;width:1.5px;height:24px;background:#d6d6d6;"></div><div style="position:absolute;left:702px;top:235px;width:1.5px;height:24px;background:#d6d6d6;"></div><div style="position:absolute;left:844px;top:235px;width:1.5px;height:24px;background:#d6d6d6;"></div><div style="position:absolute;left:966px;top:235px;width:1.5px;height:24px;background:#d6d6d6;"></div><div style="position:absolute;left:1068.5px;top:235px;width:1.5px;height:24px;background:#d6d6d6;"></div><div style="position:absolute;left:1151px;top:235px;width:1.5px;height:24px;background:#d6d6d6;"></div><div style="position:absolute;left:1272px;top:235px;width:1.5px;height:24px;background:#d6d6d6;"></div><div style="position:absolute;left:1404px;top:235px;width:1.5px;height:24px;background:#d6d6d6;"></div><div style="position:absolute;left:1536px;top:235px;width:1.5px;height:24px;background:#d6d6d6;"></div><div style="position:absolute;left:1586px;top:235px;width:1.5px;height:24px;background:#d6d6d6;"></div><div style="position:absolute;left:1718px;top:235px;width:1.5px;height:24px;background:#d6d6d6;"></div><div style="position:absolute;left:1770px;top:235px;width:1.5px;height:24px;background:#d6d6d6;"></div><div style="position:absolute;left:1902px;top:235px;width:1.5px;height:24px;background:#d6d6d6;"></div><div style="position:absolute;left:1978px;top:235px;width:1.5px;height:24px;background:#d6d6d6;"></div><div style="position:absolute;left:2100px;top:235px;width:1.5px;height:24px;background:#d6d6d6;"></div><div style="position:absolute;left:2182px;top:235px;width:1.5px;height:24px;background:#d6d6d6;"></div><svg style="position:absolute;left:846px;top:235px;" width="10" height="10" viewBox="0 0 10 10"><path d="M0 0 H10 V2 H8 V4 H6 V6 H4 V8 H2 V10 H0 Z" fill="#36801f" shape-rendering="crispEdges"/></svg><div style="position:absolute;top:240.61px;font-size:17px;line-height:1;color:#000;white-space:nowrap;letter-spacing:0.72px;left:44.00px;-webkit-text-stroke:0.45px #000;">Arkansas</div><div style="position:absolute;top:240.61px;font-size:17px;line-height:1;color:#000;white-space:nowrap;letter-spacing:0.72px;left:248.00px;-webkit-text-stroke:0.45px #000;">4th Graders Not Proficient in Reading (%)</div><div style="position:absolute;top:240.61px;font-size:17px;line-height:1;color:#000;white-space:nowrap;letter-spacing:0.72px;left:707.00px;-webkit-text-stroke:0.45px #000;">4RD</div><div style="position:absolute;top:240.61px;font-size:17px;line-height:1;color:#000;white-space:nowrap;letter-spacing:0.72px;left:856.00px;width:100px;text-align:center;-webkit-text-stroke:0.45px #000;">2024</div><div style="position:absolute;top:240.61px;font-size:17px;line-height:1;color:#000;white-space:nowrap;letter-spacing:0.72px;left:969.00px;width:100px;text-align:center;-webkit-text-stroke:0.45px #000;">71.8998</div><div style="position:absolute;top:240.61px;font-size:17px;line-height:1;color:#000;white-space:nowrap;letter-spacing:0.72px;left:1070.00px;width:80px;text-align:center;-webkit-text-stroke:0.45px #000;">36</div><div style="position:absolute;top:240.61px;font-size:17px;line-height:1;color:#000;white-space:nowrap;letter-spacing:0.72px;left:1162.00px;width:100px;text-align:center;-webkit-text-stroke:0.45px #000;">24</div><div style="position:absolute;top:240.61px;font-size:17px;line-height:1;color:#000;white-space:nowrap;letter-spacing:0.72px;left:1290.00px;width:100px;text-align:center;-webkit-text-stroke:0.45px #000;">45</div><div style="position:absolute;top:240.61px;font-size:17px;line-height:1;color:#000;white-space:nowrap;letter-spacing:0.72px;left:1422.20px;width:100px;text-align:center;-webkit-text-stroke:0.45px #000;">45</div><div style="position:absolute;top:240.61px;font-size:17px;line-height:1;color:#000;white-space:nowrap;letter-spacing:0.72px;left:1604.20px;width:100px;text-align:center;-webkit-text-stroke:0.45px #000;">45</div><div style="position:absolute;top:240.61px;font-size:17px;line-height:1;color:#000;white-space:nowrap;letter-spacing:0.72px;left:1788.20px;width:100px;text-align:center;-webkit-text-stroke:0.45px #000;">36</div><div style="position:absolute;top:240.61px;font-size:17px;line-height:1;color:#000;white-space:nowrap;letter-spacing:0.72px;left:1991.00px;width:100px;text-align:center;-webkit-text-stroke:0.45px #000;">47</div><div style="position:absolute;top:240.61px;font-size:17px;line-height:1;color:#000;white-space:nowrap;letter-spacing:0.72px;left:2208.30px;width:100px;text-align:center;-webkit-text-stroke:0.45px #000;">46</div><div style="position:absolute;left:1536px;top:235px;width:52px;height:24px;background:#2d2c5e;overflow:hidden;"><div style="position:absolute;top:5.61px;font-size:17px;line-height:1;color:#fff;white-space:nowrap;letter-spacing:0.72px;left:-74.00px;width:200px;text-align:center;-webkit-text-stroke:0.45px #fff;">Worst</div></div><div style="position:absolute;left:1719px;top:235px;width:52px;height:24px;background:#2d2c5e;overflow:hidden;"><div style="position:absolute;top:5.61px;font-size:17px;line-height:1;color:#fff;white-space:nowrap;letter-spacing:0.72px;left:-74.00px;width:200px;text-align:center;-webkit-text-stroke:0.45px #fff;">Worst</div></div><div style="position:absolute;left:1903px;top:235px;width:76px;height:24px;background:#545386;overflow:hidden;"><div style="position:absolute;top:5.61px;font-size:17px;line-height:1;color:#fff;white-space:nowrap;letter-spacing:0.72px;left:-62.00px;width:200px;text-align:center;-webkit-text-stroke:0.45px #fff;">Worse</div></div><div style="position:absolute;left:2101px;top:235px;width:82px;height:24px;background:#2d2c5e;overflow:hidden;"><div style="position:absolute;top:5.61px;font-size:17px;line-height:1;color:#fff;white-space:nowrap;letter-spacing:0.72px;left:-59.00px;width:200px;text-align:center;-webkit-text-stroke:0.45px #fff;">Worst</div></div><div style="position:absolute;left:0px;top:285px;width:38px;height:1px;background:#e6e6e6;"></div><div style="position:absolute;top:268.26px;font-size:16px;line-height:1;color:#5c5c5c;white-space:nowrap;left:0.00px;width:38px;text-align:center;">12</div><div style="position:absolute;left:40px;top:259px;width:2290px;height:28px;background:#f3f3f3;"></div><svg style="position:absolute;left:846px;top:259px;" width="10" height="10" viewBox="0 0 10 10"><path d="M0 0 H10 V2 H8 V4 H6 V6 H4 V8 H2 V10 H0 Z" fill="#36801f" shape-rendering="crispEdges"/></svg><div style="position:absolute;top:266.61px;font-size:17px;line-height:1;color:#000;white-space:nowrap;letter-spacing:0.72px;left:44.00px;-webkit-text-stroke:0.45px #000;">California</div><div style="position:absolute;top:266.61px;font-size:17px;line-height:1;color:#000;white-space:nowrap;letter-spacing:0.72px;left:248.00px;-webkit-text-stroke:0.45px #000;">4th Graders Not Proficient in Reading (%)</div><div style="position:absolute;top:266.61px;font-size:17px;line-height:1;color:#000;white-space:nowrap;letter-spacing:0.72px;left:707.00px;-webkit-text-stroke:0.45px #000;">4RD</div><div style="position:absolute;top:266.61px;font-size:17px;line-height:1;color:#000;white-space:nowrap;letter-spacing:0.72px;left:856.00px;width:100px;text-align:center;-webkit-text-stroke:0.45px #000;">2019</div><div style="position:absolute;top:266.61px;font-size:17px;line-height:1;color:#000;white-space:nowrap;letter-spacing:0.72px;left:969.00px;width:100px;text-align:center;-webkit-text-stroke:0.45px #000;">67.8533</div><div style="position:absolute;top:266.61px;font-size:17px;line-height:1;color:#000;white-space:nowrap;letter-spacing:0.72px;left:1070.00px;width:80px;text-align:center;-webkit-text-stroke:0.45px #000;">37</div><div style="position:absolute;top:266.61px;font-size:17px;line-height:1;color:#000;white-space:nowrap;letter-spacing:0.72px;left:1162.00px;width:100px;text-align:center;-webkit-text-stroke:0.45px #000;">31</div><div style="position:absolute;top:266.61px;font-size:17px;line-height:1;color:#000;white-space:nowrap;letter-spacing:0.72px;left:1290.00px;width:100px;text-align:center;-webkit-text-stroke:0.45px #000;">45</div><div style="position:absolute;top:266.61px;font-size:17px;line-height:1;color:#000;white-space:nowrap;letter-spacing:0.72px;left:1422.20px;width:100px;text-align:center;-webkit-text-stroke:0.45px #000;">32</div><div style="position:absolute;top:266.61px;font-size:17px;line-height:1;color:#000;white-space:nowrap;letter-spacing:0.72px;left:1604.20px;width:100px;text-align:center;-webkit-text-stroke:0.45px #000;">44</div><div style="position:absolute;top:266.61px;font-size:17px;line-height:1;color:#000;white-space:nowrap;letter-spacing:0.72px;left:1788.20px;width:100px;text-align:center;-webkit-text-stroke:0.45px #000;">30</div><div style="position:absolute;top:266.61px;font-size:17px;line-height:1;color:#000;white-space:nowrap;letter-spacing:0.72px;left:1991.00px;width:100px;text-align:center;-webkit-text-stroke:0.45px #000;">11</div><div style="position:absolute;top:266.61px;font-size:17px;line-height:1;color:#000;white-space:nowrap;letter-spacing:0.72px;left:2208.30px;width:100px;text-align:center;-webkit-text-stroke:0.45px #000;">37</div><div style="position:absolute;left:1536px;top:259px;width:52px;height:28px;background:#545386;overflow:hidden;"><div style="position:absolute;top:7.61px;font-size:17px;line-height:1;color:#fff;white-space:nowrap;letter-spacing:0.72px;left:-74.00px;width:200px;text-align:center;-webkit-text-stroke:0.45px #fff;">Worse</div></div><div style="position:absolute;left:1719px;top:259px;width:52px;height:28px;background:#2d2c5e;overflow:hidden;"><div style="position:absolute;top:7.61px;font-size:17px;line-height:1;color:#fff;white-space:nowrap;letter-spacing:0.72px;left:-74.00px;width:200px;text-align:center;-webkit-text-stroke:0.45px #fff;">Worst</div></div><div style="position:absolute;left:1903px;top:259px;width:76px;height:28px;background:#545386;overflow:hidden;"><div style="position:absolute;top:7.61px;font-size:17px;line-height:1;color:#fff;white-space:nowrap;letter-spacing:0.72px;left:-62.00px;width:200px;text-align:center;-webkit-text-stroke:0.45px #fff;">Worse</div></div><div style="position:absolute;left:2101px;top:259px;width:82px;height:28px;background:#c8c7dd;overflow:hidden;"><div style="position:absolute;top:7.61px;font-size:17px;line-height:1;color:#111;white-space:nowrap;letter-spacing:0.72px;left:-59.00px;width:200px;text-align:center;-webkit-text-stroke:0.45px #111;">Best</div></div><div style="position:absolute;left:0px;top:311px;width:38px;height:1px;background:#e6e6e6;"></div><div style="position:absolute;top:294.26px;font-size:16px;line-height:1;color:#5c5c5c;white-space:nowrap;left:0.00px;width:38px;text-align:center;">13</div><div style="position:absolute;left:242px;top:287px;width:1.5px;height:24px;background:#d6d6d6;"></div><div style="position:absolute;left:702px;top:287px;width:1.5px;height:24px;background:#d6d6d6;"></div><div style="position:absolute;left:844px;top:287px;width:1.5px;height:24px;background:#d6d6d6;"></div><div style="position:absolute;left:966px;top:287px;width:1.5px;height:24px;background:#d6d6d6;"></div><div style="position:absolute;left:1068.5px;top:287px;width:1.5px;height:24px;background:#d6d6d6;"></div><div style="position:absolute;left:1151px;top:287px;width:1.5px;height:24px;background:#d6d6d6;"></div><div style="position:absolute;left:1272px;top:287px;width:1.5px;height:24px;background:#d6d6d6;"></div><div style="position:absolute;left:1404px;top:287px;width:1.5px;height:24px;background:#d6d6d6;"></div><div style="position:absolute;left:1536px;top:287px;width:1.5px;height:24px;background:#d6d6d6;"></div><div style="position:absolute;left:1586px;top:287px;width:1.5px;height:24px;background:#d6d6d6;"></div><div style="position:absolute;left:1718px;top:287px;width:1.5px;height:24px;background:#d6d6d6;"></div><div style="position:absolute;left:1770px;top:287px;width:1.5px;height:24px;background:#d6d6d6;"></div><div style="position:absolute;left:1902px;top:287px;width:1.5px;height:24px;background:#d6d6d6;"></div><div style="position:absolute;left:1978px;top:287px;width:1.5px;height:24px;background:#d6d6d6;"></div><div style="position:absolute;left:2100px;top:287px;width:1.5px;height:24px;background:#d6d6d6;"></div><div style="position:absolute;left:2182px;top:287px;width:1.5px;height:24px;background:#d6d6d6;"></div><svg style="position:absolute;left:846px;top:287px;" width="10" height="10" viewBox="0 0 10 10"><path d="M0 0 H10 V2 H8 V4 H6 V6 H4 V8 H2 V10 H0 Z" fill="#36801f" shape-rendering="crispEdges"/></svg><div style="position:absolute;top:292.61px;font-size:17px;line-height:1;color:#000;white-space:nowrap;letter-spacing:0.72px;left:44.00px;-webkit-text-stroke:0.45px #000;">California</div><div style="position:absolute;top:292.61px;font-size:17px;line-height:1;color:#000;white-space:nowrap;letter-spacing:0.72px;left:248.00px;-webkit-text-stroke:0.45px #000;">4th Graders Not Proficient in Reading (%)</div><div style="position:absolute;top:292.61px;font-size:17px;line-height:1;color:#000;white-space:nowrap;letter-spacing:0.72px;left:707.00px;-webkit-text-stroke:0.45px #000;">4RD</div><div style="position:absolute;top:292.61px;font-size:17px;line-height:1;color:#000;white-space:nowrap;letter-spacing:0.72px;left:856.00px;width:100px;text-align:center;-webkit-text-stroke:0.45px #000;">2024</div><div style="position:absolute;top:292.61px;font-size:17px;line-height:1;color:#000;white-space:nowrap;letter-spacing:0.72px;left:969.00px;width:100px;text-align:center;-webkit-text-stroke:0.45px #000;">71.3454</div><div style="position:absolute;top:292.61px;font-size:17px;line-height:1;color:#000;white-space:nowrap;letter-spacing:0.72px;left:1070.00px;width:80px;text-align:center;-webkit-text-stroke:0.45px #000;">34</div><div style="position:absolute;top:292.61px;font-size:17px;line-height:1;color:#000;white-space:nowrap;letter-spacing:0.72px;left:1162.00px;width:100px;text-align:center;-webkit-text-stroke:0.45px #000;">23</div><div style="position:absolute;top:292.61px;font-size:17px;line-height:1;color:#000;white-space:nowrap;letter-spacing:0.72px;left:1290.00px;width:100px;text-align:center;-webkit-text-stroke:0.45px #000;">45</div><div style="position:absolute;top:292.61px;font-size:17px;line-height:1;color:#000;white-space:nowrap;letter-spacing:0.72px;left:1422.20px;width:100px;text-align:center;-webkit-text-stroke:0.45px #000;">32</div><div style="position:absolute;top:292.61px;font-size:17px;line-height:1;color:#000;white-space:nowrap;letter-spacing:0.72px;left:1604.20px;width:100px;text-align:center;-webkit-text-stroke:0.45px #000;">44</div><div style="position:absolute;top:292.61px;font-size:17px;line-height:1;color:#000;white-space:nowrap;letter-spacing:0.72px;left:1788.20px;width:100px;text-align:center;-webkit-text-stroke:0.45px #000;">30</div><div style="position:absolute;top:292.61px;font-size:17px;line-height:1;color:#000;white-space:nowrap;letter-spacing:0.72px;left:1991.00px;width:100px;text-align:center;-webkit-text-stroke:0.45px #000;">11</div><div style="position:absolute;top:292.61px;font-size:17px;line-height:1;color:#000;white-space:nowrap;letter-spacing:0.72px;left:2208.30px;width:100px;text-align:center;-webkit-text-stroke:0.45px #000;">37</div><div style="position:absolute;left:1536px;top:287px;width:52px;height:24px;background:#545386;overflow:hidden;"><div style="position:absolute;top:5.61px;font-size:17px;line-height:1;color:#fff;white-space:nowrap;letter-spacing:0.72px;left:-74.00px;width:200px;text-align:center;-webkit-text-stroke:0.45px #fff;">Worse</div></div><div style="position:absolute;left:1719px;top:287px;width:52px;height:24px;background:#2d2c5e;overflow:hidden;"><div style="position:absolute;top:5.61px;font-size:17px;line-height:1;color:#fff;white-space:nowrap;letter-spacing:0.72px;left:-74.00px;width:200px;text-align:center;-webkit-text-stroke:0.45px #fff;">Worst</div></div><div style="position:absolute;left:1903px;top:287px;width:76px;height:24px;background:#545386;overflow:hidden;"><div style="position:absolute;top:5.61px;font-size:17px;line-height:1;color:#fff;white-space:nowrap;letter-spacing:0.72px;left:-62.00px;width:200px;text-align:center;-webkit-text-stroke:0.45px #fff;">Worse</div></div><div style="position:absolute;left:2101px;top:287px;width:82px;height:24px;background:#c8c7dd;overflow:hidden;"><div style="position:absolute;top:5.61px;font-size:17px;line-height:1;color:#111;white-space:nowrap;letter-spacing:0.72px;left:-59.00px;width:200px;text-align:center;-webkit-text-stroke:0.45px #111;">Best</div></div><div style="position:absolute;left:0px;top:337px;width:38px;height:1px;background:#e6e6e6;"></div><div style="position:absolute;top:320.26px;font-size:16px;line-height:1;color:#5c5c5c;white-space:nowrap;left:0.00px;width:38px;text-align:center;">14</div><div style="position:absolute;left:40px;top:311px;width:2290px;height:28px;background:#f3f3f3;"></div><svg style="position:absolute;left:846px;top:311px;" width="10" height="10" viewBox="0 0 10 10"><path d="M0 0 H10 V2 H8 V4 H6 V6 H4 V8 H2 V10 H0 Z" fill="#36801f" shape-rendering="crispEdges"/></svg><div style="position:absolute;top:318.61px;font-size:17px;line-height:1;color:#000;white-space:nowrap;letter-spacing:0.72px;left:44.00px;-webkit-text-stroke:0.45px #000;">Colorado</div><div style="position:absolute;top:318.61px;font-size:17px;line-height:1;color:#000;white-space:nowrap;letter-spacing:0.72px;left:248.00px;-webkit-text-stroke:0.45px #000;">4th Graders Not Proficient in Reading (%)</div><div style="position:absolute;top:318.61px;font-size:17px;line-height:1;color:#000;white-space:nowrap;letter-spacing:0.72px;left:707.00px;-webkit-text-stroke:0.45px #000;">4RD</div><div style="position:absolute;top:318.61px;font-size:17px;line-height:1;color:#000;white-space:nowrap;letter-spacing:0.72px;left:856.00px;width:100px;text-align:center;-webkit-text-stroke:0.45px #000;">2019</div><div style="position:absolute;top:318.61px;font-size:17px;line-height:1;color:#000;white-space:nowrap;letter-spacing:0.72px;left:969.00px;width:100px;text-align:center;-webkit-text-stroke:0.45px #000;">60.3269</div><div style="position:absolute;top:318.61px;font-size:17px;line-height:1;color:#000;white-space:nowrap;letter-spacing:0.72px;left:1070.00px;width:80px;text-align:center;-webkit-text-stroke:0.45px #000;">7</div><div style="position:absolute;top:318.61px;font-size:17px;line-height:1;color:#000;white-space:nowrap;letter-spacing:0.72px;left:1162.00px;width:100px;text-align:center;-webkit-text-stroke:0.45px #000;">2</div><div style="position:absolute;top:318.61px;font-size:17px;line-height:1;color:#000;white-space:nowrap;letter-spacing:0.72px;left:1290.00px;width:100px;text-align:center;-webkit-text-stroke:0.45px #000;">12</div><div style="position:absolute;top:318.61px;font-size:17px;line-height:1;color:#000;white-space:nowrap;letter-spacing:0.72px;left:1422.20px;width:100px;text-align:center;-webkit-text-stroke:0.45px #000;">12</div><div style="position:absolute;top:318.61px;font-size:17px;line-height:1;color:#000;white-space:nowrap;letter-spacing:0.72px;left:1604.20px;width:100px;text-align:center;-webkit-text-stroke:0.45px #000;">15</div><div style="position:absolute;top:318.61px;font-size:17px;line-height:1;color:#000;white-space:nowrap;letter-spacing:0.72px;left:1788.20px;width:100px;text-align:center;-webkit-text-stroke:0.45px #000;">9</div><div style="position:absolute;top:318.61px;font-size:17px;line-height:1;color:#000;white-space:nowrap;letter-spacing:0.72px;left:1991.00px;width:100px;text-align:center;-webkit-text-stroke:0.45px #000;">24</div><div style="position:absolute;top:318.61px;font-size:17px;line-height:1;color:#000;white-space:nowrap;letter-spacing:0.72px;left:2208.30px;width:100px;text-align:center;-webkit-text-stroke:0.45px #000;">9</div><div style="position:absolute;left:1536px;top:311px;width:52px;height:28px;background:#c8c7dd;overflow:hidden;"><div style="position:absolute;top:7.61px;font-size:17px;line-height:1;color:#111;white-space:nowrap;letter-spacing:0.72px;left:-74.00px;width:200px;text-align:center;-webkit-text-stroke:0.45px #111;">Best</div></div><div style="position:absolute;left:1719px;top:311px;width:52px;height:28px;background:#9a99be;overflow:hidden;"><div style="position:absolute;top:7.61px;font-size:17px;line-height:1;color:#111;white-space:nowrap;letter-spacing:0.72px;left:-74.00px;width:200px;text-align:center;-webkit-text-stroke:0.45px #111;">Better</div></div><div style="position:absolute;left:1903px;top:311px;width:76px;height:28px;background:#c8c7dd;overflow:hidden;"><div style="position:absolute;top:7.61px;font-size:17px;line-height:1;color:#111;white-space:nowrap;letter-spacing:0.72px;left:-62.00px;width:200px;text-align:center;-webkit-text-stroke:0.45px #111;">Best</div></div><div style="position:absolute;left:2101px;top:311px;width:82px;height:28px;background:#9a99be;overflow:hidden;"><div style="position:absolute;top:7.61px;font-size:17px;line-height:1;color:#111;white-space:nowrap;letter-spacing:0.72px;left:-59.00px;width:200px;text-align:center;-webkit-text-stroke:0.45px #111;">Better</div></div><div style="position:absolute;left:0px;top:363px;width:38px;height:1px;background:#e6e6e6;"></div><div style="position:absolute;top:346.26px;font-size:16px;line-height:1;color:#5c5c5c;white-space:nowrap;left:0.00px;width:38px;text-align:center;">15</div><div style="position:absolute;left:242px;top:339px;width:1.5px;height:24px;background:#d6d6d6;"></div><div style="position:absolute;left:702px;top:339px;width:1.5px;height:24px;background:#d6d6d6;"></div><div style="position:absolute;left:844px;top:339px;width:1.5px;height:24px;background:#d6d6d6;"></div><div style="position:absolute;left:966px;top:339px;width:1.5px;height:24px;background:#d6d6d6;"></div><div style="position:absolute;left:1068.5px;top:339px;width:1.5px;height:24px;background:#d6d6d6;"></div><div style="position:absolute;left:1151px;top:339px;width:1.5px;height:24px;background:#d6d6d6;"></div><div style="position:absolute;left:1272px;top:339px;width:1.5px;height:24px;background:#d6d6d6;"></div><div style="position:absolute;left:1404px;top:339px;width:1.5px;height:24px;background:#d6d6d6;"></div><div style="position:absolute;left:1536px;top:339px;width:1.5px;height:24px;background:#d6d6d6;"></div><div style="position:absolute;left:1586px;top:339px;width:1.5px;height:24px;background:#d6d6d6;"></div><div style="position:absolute;left:1718px;top:339px;width:1.5px;height:24px;background:#d6d6d6;"></div><div style="position:absolute;left:1770px;top:339px;width:1.5px;height:24px;background:#d6d6d6;"></div><div style="position:absolute;left:1902px;top:339px;width:1.5px;height:24px;background:#d6d6d6;"></div><div style="position:absolute;left:1978px;top:339px;width:1.5px;height:24px;background:#d6d6d6;"></div><div style="position:absolute;left:2100px;top:339px;width:1.5px;height:24px;background:#d6d6d6;"></div><div style="position:absolute;left:2182px;top:339px;width:1.5px;height:24px;background:#d6d6d6;"></div><svg style="position:absolute;left:846px;top:339px;" width="10" height="10" viewBox="0 0 10 10"><path d="M0 0 H10 V2 H8 V4 H6 V6 H4 V8 H2 V10 H0 Z" fill="#36801f" shape-rendering="crispEdges"/></svg><div style="position:absolute;top:344.61px;font-size:17px;line-height:1;color:#000;white-space:nowrap;letter-spacing:0.72px;left:44.00px;-webkit-text-stroke:0.45px #000;">Colorado</div><div style="position:absolute;top:344.61px;font-size:17px;line-height:1;color:#000;white-space:nowrap;letter-spacing:0.72px;left:248.00px;-webkit-text-stroke:0.45px #000;">4th Graders Not Proficient in Reading (%)</div><div style="position:absolute;top:344.61px;font-size:17px;line-height:1;color:#000;white-space:nowrap;letter-spacing:0.72px;left:707.00px;-webkit-text-stroke:0.45px #000;">4RD</div><div style="position:absolute;top:344.61px;font-size:17px;line-height:1;color:#000;white-space:nowrap;letter-spacing:0.72px;left:856.00px;width:100px;text-align:center;-webkit-text-stroke:0.45px #000;">2024</div><div style="position:absolute;top:344.61px;font-size:17px;line-height:1;color:#000;white-space:nowrap;letter-spacing:0.72px;left:969.00px;width:100px;text-align:center;-webkit-text-stroke:0.45px #000;">64.345</div><div style="position:absolute;top:344.61px;font-size:17px;line-height:1;color:#000;white-space:nowrap;letter-spacing:0.72px;left:1070.00px;width:80px;text-align:center;-webkit-text-stroke:0.45px #000;">7</div><div style="position:absolute;top:344.61px;font-size:17px;line-height:1;color:#000;white-space:nowrap;letter-spacing:0.72px;left:1162.00px;width:100px;text-align:center;-webkit-text-stroke:0.45px #000;">3</div><div style="position:absolute;top:344.61px;font-size:17px;line-height:1;color:#000;white-space:nowrap;letter-spacing:0.72px;left:1290.00px;width:100px;text-align:center;-webkit-text-stroke:0.45px #000;">9</div><div style="position:absolute;top:344.61px;font-size:17px;line-height:1;color:#000;white-space:nowrap;letter-spacing:0.72px;left:1422.20px;width:100px;text-align:center;-webkit-text-stroke:0.45px #000;">12</div><div style="position:absolute;top:344.61px;font-size:17px;line-height:1;color:#000;white-space:nowrap;letter-spacing:0.72px;left:1604.20px;width:100px;text-align:center;-webkit-text-stroke:0.45px #000;">15</div><div style="position:absolute;top:344.61px;font-size:17px;line-height:1;color:#000;white-space:nowrap;letter-spacing:0.72px;left:1788.20px;width:100px;text-align:center;-webkit-text-stroke:0.45px #000;">9</div><div style="position:absolute;top:344.61px;font-size:17px;line-height:1;color:#000;white-space:nowrap;letter-spacing:0.72px;left:1991.00px;width:100px;text-align:center;-webkit-text-stroke:0.45px #000;">24</div><div style="position:absolute;top:344.61px;font-size:17px;line-height:1;color:#000;white-space:nowrap;letter-spacing:0.72px;left:2208.30px;width:100px;text-align:center;-webkit-text-stroke:0.45px #000;">9</div><div style="position:absolute;left:1536px;top:339px;width:52px;height:24px;background:#c8c7dd;overflow:hidden;"><div style="position:absolute;top:5.61px;font-size:17px;line-height:1;color:#111;white-space:nowrap;letter-spacing:0.72px;left:-74.00px;width:200px;text-align:center;-webkit-text-stroke:0.45px #111;">Best</div></div><div style="position:absolute;left:1719px;top:339px;width:52px;height:24px;background:#9a99be;overflow:hidden;"><div style="position:absolute;top:5.61px;font-size:17px;line-height:1;color:#111;white-space:nowrap;letter-spacing:0.72px;left:-74.00px;width:200px;text-align:center;-webkit-text-stroke:0.45px #111;">Better</div></div><div style="position:absolute;left:1903px;top:339px;width:76px;height:24px;background:#c8c7dd;overflow:hidden;"><div style="position:absolute;top:5.61px;font-size:17px;line-height:1;color:#111;white-space:nowrap;letter-spacing:0.72px;left:-62.00px;width:200px;text-align:center;-webkit-text-stroke:0.45px #111;">Best</div></div><div style="position:absolute;left:2101px;top:339px;width:82px;height:24px;background:#9a99be;overflow:hidden;"><div style="position:absolute;top:5.61px;font-size:17px;line-height:1;color:#111;white-space:nowrap;letter-spacing:0.72px;left:-59.00px;width:200px;text-align:center;-webkit-text-stroke:0.45px #111;">Better</div></div><div style="position:absolute;left:0px;top:389px;width:38px;height:1px;background:#e6e6e6;"></div><div style="position:absolute;top:372.26px;font-size:16px;line-height:1;color:#5c5c5c;white-space:nowrap;left:0.00px;width:38px;text-align:center;">16</div><div style="position:absolute;left:40px;top:363px;width:2290px;height:28px;background:#f3f3f3;"></div><svg style="position:absolute;left:846px;top:363px;" width="10" height="10" viewBox="0 0 10 10"><path d="M0 0 H10 V2 H8 V4 H6 V6 H4 V8 H2 V10 H0 Z" fill="#36801f" shape-rendering="crispEdges"/></svg><div style="position:absolute;top:370.61px;font-size:17px;line-height:1;color:#000;white-space:nowrap;letter-spacing:0.72px;left:44.00px;-webkit-text-stroke:0.45px #000;">Connecticut</div><div style="position:absolute;top:370.61px;font-size:17px;line-height:1;color:#000;white-space:nowrap;letter-spacing:0.72px;left:248.00px;-webkit-text-stroke:0.45px #000;">4th Graders Not Proficient in Reading (%)</div><div style="position:absolute;top:370.61px;font-size:17px;line-height:1;color:#000;white-space:nowrap;letter-spacing:0.72px;left:707.00px;-webkit-text-stroke:0.45px #000;">4RD</div><div style="position:absolute;top:370.61px;font-size:17px;line-height:1;color:#000;white-space:nowrap;letter-spacing:0.72px;left:856.00px;width:100px;text-align:center;-webkit-text-stroke:0.45px #000;">2019</div><div style="position:absolute;top:370.61px;font-size:17px;line-height:1;color:#000;white-space:nowrap;letter-spacing:0.72px;left:969.00px;width:100px;text-align:center;-webkit-text-stroke:0.45px #000;">59.8809</div><div style="position:absolute;top:370.61px;font-size:17px;line-height:1;color:#000;white-space:nowrap;letter-spacing:0.72px;left:1070.00px;width:80px;text-align:center;-webkit-text-stroke:0.45px #000;">4</div><div style="position:absolute;top:370.61px;font-size:17px;line-height:1;color:#000;white-space:nowrap;letter-spacing:0.72px;left:1162.00px;width:100px;text-align:center;-webkit-text-stroke:0.45px #000;">2</div><div style="position:absolute;top:370.61px;font-size:17px;line-height:1;color:#000;white-space:nowrap;letter-spacing:0.72px;left:1290.00px;width:100px;text-align:center;-webkit-text-stroke:0.45px #000;">10</div><div style="position:absolute;top:370.61px;font-size:17px;line-height:1;color:#000;white-space:nowrap;letter-spacing:0.72px;left:1422.20px;width:100px;text-align:center;-webkit-text-stroke:0.45px #000;">8</div><div style="position:absolute;top:370.61px;font-size:17px;line-height:1;color:#000;white-space:nowrap;letter-spacing:0.72px;left:1604.20px;width:100px;text-align:center;-webkit-text-stroke:0.45px #000;">26</div><div style="position:absolute;top:370.61px;font-size:17px;line-height:1;color:#000;white-space:nowrap;letter-spacing:0.72px;left:1788.20px;width:100px;text-align:center;-webkit-text-stroke:0.45px #000;">3</div><div style="position:absolute;top:370.61px;font-size:17px;line-height:1;color:#000;white-space:nowrap;letter-spacing:0.72px;left:1991.00px;width:100px;text-align:center;-webkit-text-stroke:0.45px #000;">5</div><div style="position:absolute;top:370.61px;font-size:17px;line-height:1;color:#000;white-space:nowrap;letter-spacing:0.72px;left:2208.30px;width:100px;text-align:center;-webkit-text-stroke:0.45px #000;">22</div><div style="position:absolute;left:1536px;top:363px;width:52px;height:28px;background:#c8c7dd;overflow:hidden;"><div style="position:absolute;top:7.61px;font-size:17px;line-height:1;color:#111;white-space:nowrap;letter-spacing:0.72px;left:-74.00px;width:200px;text-align:center;-webkit-text-stroke:0.45px #111;">Best</div></div><div style="position:absolute;left:1719px;top:363px;width:52px;height:28px;background:#545386;overflow:hidden;"><div style="position:absolute;top:7.61px;font-size:17px;line-height:1;color:#fff;white-space:nowrap;letter-spacing:0.72px;left:-74.00px;width:200px;text-align:center;-webkit-text-stroke:0.45px #fff;">Worse</div></div><div style="position:absolute;left:1903px;top:363px;width:76px;height:28px;background:#c8c7dd;overflow:hidden;"><div style="position:absolute;top:7.61px;font-size:17px;line-height:1;color:#111;white-space:nowrap;letter-spacing:0.72px;left:-62.00px;width:200px;text-align:center;-webkit-text-stroke:0.45px #111;">Best</div></div><div style="position:absolute;left:2101px;top:363px;width:82px;height:28px;background:#c8c7dd;overflow:hidden;"><div style="position:absolute;top:7.61px;font-size:17px;line-height:1;color:#111;white-space:nowrap;letter-spacing:0.72px;left:-59.00px;width:200px;text-align:center;-webkit-text-stroke:0.45px #111;">Best</div></div><div style="position:absolute;left:0px;top:415px;width:38px;height:1px;background:#e6e6e6;"></div><div style="position:absolute;top:398.26px;font-size:16px;line-height:1;color:#5c5c5c;white-space:nowrap;left:0.00px;width:38px;text-align:center;">17</div><div style="position:absolute;left:242px;top:391px;width:1.5px;height:24px;background:#d6d6d6;"></div><div style="position:absolute;left:702px;top:391px;width:1.5px;height:24px;background:#d6d6d6;"></div><div style="position:absolute;left:844px;top:391px;width:1.5px;height:24px;background:#d6d6d6;"></div><div style="position:absolute;left:966px;top:391px;width:1.5px;height:24px;background:#d6d6d6;"></div><div style="position:absolute;left:1068.5px;top:391px;width:1.5px;height:24px;background:#d6d6d6;"></div><div style="position:absolute;left:1151px;top:391px;width:1.5px;height:24px;background:#d6d6d6;"></div><div style="position:absolute;left:1272px;top:391px;width:1.5px;height:24px;background:#d6d6d6;"></div><div style="position:absolute;left:1404px;top:391px;width:1.5px;height:24px;background:#d6d6d6;"></div><div style="position:absolute;left:1536px;top:391px;width:1.5px;height:24px;background:#d6d6d6;"></div><div style="position:absolute;left:1586px;top:391px;width:1.5px;height:24px;background:#d6d6d6;"></div><div style="position:absolute;left:1718px;top:391px;width:1.5px;height:24px;background:#d6d6d6;"></div><div style="position:absolute;left:1770px;top:391px;width:1.5px;height:24px;background:#d6d6d6;"></div><div style="position:absolute;left:1902px;top:391px;width:1.5px;height:24px;background:#d6d6d6;"></div><div style="position:absolute;left:1978px;top:391px;width:1.5px;height:24px;background:#d6d6d6;"></div><div style="position:absolute;left:2100px;top:391px;width:1.5px;height:24px;background:#d6d6d6;"></div><div style="position:absolute;left:2182px;top:391px;width:1.5px;height:24px;background:#d6d6d6;"></div><svg style="position:absolute;left:846px;top:391px;" width="10" height="10" viewBox="0 0 10 10"><path d="M0 0 H10 V2 H8 V4 H6 V6 H4 V8 H2 V10 H0 Z" fill="#36801f" shape-rendering="crispEdges"/></svg><div style="position:absolute;top:396.61px;font-size:17px;line-height:1;color:#000;white-space:nowrap;letter-spacing:0.72px;left:44.00px;-webkit-text-stroke:0.45px #000;">Connecticut</div><div style="position:absolute;top:396.61px;font-size:17px;line-height:1;color:#000;white-space:nowrap;letter-spacing:0.72px;left:248.00px;-webkit-text-stroke:0.45px #000;">4th Graders Not Proficient in Reading (%)</div><div style="position:absolute;top:396.61px;font-size:17px;line-height:1;color:#000;white-space:nowrap;letter-spacing:0.72px;left:707.00px;-webkit-text-stroke:0.45px #000;">4RD</div><div style="position:absolute;top:396.61px;font-size:17px;line-height:1;color:#000;white-space:nowrap;letter-spacing:0.72px;left:856.00px;width:100px;text-align:center;-webkit-text-stroke:0.45px #000;">2024</div><div style="position:absolute;top:396.61px;font-size:17px;line-height:1;color:#000;white-space:nowrap;letter-spacing:0.72px;left:969.00px;width:100px;text-align:center;-webkit-text-stroke:0.45px #000;">63.8473</div><div style="position:absolute;top:396.61px;font-size:17px;line-height:1;color:#000;white-space:nowrap;letter-spacing:0.72px;left:1070.00px;width:80px;text-align:center;-webkit-text-stroke:0.45px #000;">5</div><div style="position:absolute;top:396.61px;font-size:17px;line-height:1;color:#000;white-space:nowrap;letter-spacing:0.72px;left:1162.00px;width:100px;text-align:center;-webkit-text-stroke:0.45px #000;">3</div><div style="position:absolute;top:396.61px;font-size:17px;line-height:1;color:#000;white-space:nowrap;letter-spacing:0.72px;left:1290.00px;width:100px;text-align:center;-webkit-text-stroke:0.45px #000;">8</div><div style="position:absolute;top:396.61px;font-size:17px;line-height:1;color:#000;white-space:nowrap;letter-spacing:0.72px;left:1422.20px;width:100px;text-align:center;-webkit-text-stroke:0.45px #000;">8</div><div style="position:absolute;top:396.61px;font-size:17px;line-height:1;color:#000;white-space:nowrap;letter-spacing:0.72px;left:1604.20px;width:100px;text-align:center;-webkit-text-stroke:0.45px #000;">26</div><div style="position:absolute;top:396.61px;font-size:17px;line-height:1;color:#000;white-space:nowrap;letter-spacing:0.72px;left:1788.20px;width:100px;text-align:center;-webkit-text-stroke:0.45px #000;">3</div><div style="position:absolute;top:396.61px;font-size:17px;line-height:1;color:#000;white-space:nowrap;letter-spacing:0.72px;left:1991.00px;width:100px;text-align:center;-webkit-text-stroke:0.45px #000;">5</div><div style="position:absolute;top:396.61px;font-size:17px;line-height:1;color:#000;white-space:nowrap;letter-spacing:0.72px;left:2208.30px;width:100px;text-align:center;-webkit-text-stroke:0.45px #000;">22</div><div style="position:absolute;left:1536px;top:391px;width:52px;height:24px;background:#c8c7dd;overflow:hidden;"><div style="position:absolute;top:5.61px;font-size:17px;line-height:1;color:#111;white-space:nowrap;letter-spacing:0.72px;left:-74.00px;width:200px;text-align:center;-webkit-text-stroke:0.45px #111;">Best</div></div><div style="position:absolute;left:1719px;top:391px;width:52px;height:24px;background:#545386;overflow:hidden;"><div style="position:absolute;top:5.61px;font-size:17px;line-height:1;color:#fff;white-space:nowrap;letter-spacing:0.72px;left:-74.00px;width:200px;text-align:center;-webkit-text-stroke:0.45px #fff;">Worse</div></div><div style="position:absolute;left:1903px;top:391px;width:76px;height:24px;background:#c8c7dd;overflow:hidden;"><div style="position:absolute;top:5.61px;font-size:17px;line-height:1;color:#111;white-space:nowrap;letter-spacing:0.72px;left:-62.00px;width:200px;text-align:center;-webkit-text-stroke:0.45px #111;">Best</div></div><div style="position:absolute;left:2101px;top:391px;width:82px;height:24px;background:#c8c7dd;overflow:hidden;"><div style="position:absolute;top:5.61px;font-size:17px;line-height:1;color:#111;white-space:nowrap;letter-spacing:0.72px;left:-59.00px;width:200px;text-align:center;-webkit-text-stroke:0.45px #111;">Best</div></div><div style="position:absolute;left:0px;top:441px;width:38px;height:1px;background:#e6e6e6;"></div><div style="position:absolute;top:424.26px;font-size:16px;line-height:1;color:#5c5c5c;white-space:nowrap;left:0.00px;width:38px;text-align:center;">18</div><div style="position:absolute;left:40px;top:415px;width:2290px;height:28px;background:#f3f3f3;"></div><svg style="position:absolute;left:846px;top:415px;" width="10" height="10" viewBox="0 0 10 10"><path d="M0 0 H10 V2 H8 V4 H6 V6 H4 V8 H2 V10 H0 Z" fill="#36801f" shape-rendering="crispEdges"/></svg><div style="position:absolute;top:422.61px;font-size:17px;line-height:1;color:#000;white-space:nowrap;letter-spacing:0.72px;left:44.00px;-webkit-text-stroke:0.45px #000;">Delaware</div><div style="position:absolute;top:422.61px;font-size:17px;line-height:1;color:#000;white-space:nowrap;letter-spacing:0.72px;left:248.00px;-webkit-text-stroke:0.45px #000;">4th Graders Not Proficient in Reading (%)</div><div style="position:absolute;top:422.61px;font-size:17px;line-height:1;color:#000;white-space:nowrap;letter-spacing:0.72px;left:707.00px;-webkit-text-stroke:0.45px #000;">4RD</div><div style="position:absolute;top:422.61px;font-size:17px;line-height:1;color:#000;white-space:nowrap;letter-spacing:0.72px;left:856.00px;width:100px;text-align:center;-webkit-text-stroke:0.45px #000;">2019</div><div style="position:absolute;top:422.61px;font-size:17px;line-height:1;color:#000;white-space:nowrap;letter-spacing:0.72px;left:969.00px;width:100px;text-align:center;-webkit-text-stroke:0.45px #000;">67.4886</div><div style="position:absolute;top:422.61px;font-size:17px;line-height:1;color:#000;white-space:nowrap;letter-spacing:0.72px;left:1070.00px;width:80px;text-align:center;-webkit-text-stroke:0.45px #000;">35</div><div style="position:absolute;top:422.61px;font-size:17px;line-height:1;color:#000;white-space:nowrap;letter-spacing:0.72px;left:1162.00px;width:100px;text-align:center;-webkit-text-stroke:0.45px #000;">28</div><div style="position:absolute;top:422.61px;font-size:17px;line-height:1;color:#000;white-space:nowrap;letter-spacing:0.72px;left:1290.00px;width:100px;text-align:center;-webkit-text-stroke:0.45px #000;">43</div><div style="position:absolute;top:422.61px;font-size:17px;line-height:1;color:#000;white-space:nowrap;letter-spacing:0.72px;left:1422.20px;width:100px;text-align:center;-webkit-text-stroke:0.45px #000;">30</div><div style="position:absolute;top:422.61px;font-size:17px;line-height:1;color:#000;white-space:nowrap;letter-spacing:0.72px;left:1604.20px;width:100px;text-align:center;-webkit-text-stroke:0.45px #000;">17</div><div style="position:absolute;top:422.61px;font-size:17px;line-height:1;color:#000;white-space:nowrap;letter-spacing:0.72px;left:1788.20px;width:100px;text-align:center;-webkit-text-stroke:0.45px #000;">37</div><div style="position:absolute;top:422.61px;font-size:17px;line-height:1;color:#000;white-space:nowrap;letter-spacing:0.72px;left:1991.00px;width:100px;text-align:center;-webkit-text-stroke:0.45px #000;">27</div><div style="position:absolute;top:422.61px;font-size:17px;line-height:1;color:#000;white-space:nowrap;letter-spacing:0.72px;left:2208.30px;width:100px;text-align:center;-webkit-text-stroke:0.45px #000;">33</div><div style="position:absolute;left:1536px;top:415px;width:52px;height:28px;background:#545386;overflow:hidden;"><div style="position:absolute;top:7.61px;font-size:17px;line-height:1;color:#fff;white-space:nowrap;letter-spacing:0.72px;left:-74.00px;width:200px;text-align:center;-webkit-text-stroke:0.45px #fff;">Worse</div></div><div style="position:absolute;left:1719px;top:415px;width:52px;height:28px;background:#9a99be;overflow:hidden;"><div style="position:absolute;top:7.61px;font-size:17px;line-height:1;color:#111;white-space:nowrap;letter-spacing:0.72px;left:-74.00px;width:200px;text-align:center;-webkit-text-stroke:0.45px #111;">Better</div></div><div style="position:absolute;left:1903px;top:415px;width:76px;height:28px;background:#545386;overflow:hidden;"><div style="position:absolute;top:7.61px;font-size:17px;line-height:1;color:#fff;white-space:nowrap;letter-spacing:0.72px;left:-62.00px;width:200px;text-align:center;-webkit-text-stroke:0.45px #fff;">Worse</div></div><div style="position:absolute;left:2101px;top:415px;width:82px;height:28px;background:#545386;overflow:hidden;"><div style="position:absolute;top:7.61px;font-size:17px;line-height:1;color:#fff;white-space:nowrap;letter-spacing:0.72px;left:-59.00px;width:200px;text-align:center;-webkit-text-stroke:0.45px #fff;">Worse</div></div><div style="position:absolute;left:0px;top:467px;width:38px;height:1px;background:#e6e6e6;"></div><div style="position:absolute;top:450.26px;font-size:16px;line-height:1;color:#5c5c5c;white-space:nowrap;left:0.00px;width:38px;text-align:center;">19</div><div style="position:absolute;left:242px;top:443px;width:1.5px;height:24px;background:#d6d6d6;"></div><div style="position:absolute;left:702px;top:443px;width:1.5px;height:24px;background:#d6d6d6;"></div><div style="position:absolute;left:844px;top:443px;width:1.5px;height:24px;background:#d6d6d6;"></div><div style="position:absolute;left:966px;top:443px;width:1.5px;height:24px;background:#d6d6d6;"></div><div style="position:absolute;left:1068.5px;top:443px;width:1.5px;height:24px;background:#d6d6d6;"></div><div style="position:absolute;left:1151px;top:443px;width:1.5px;height:24px;background:#d6d6d6;"></div><div style="position:absolute;left:1272px;top:443px;width:1.5px;height:24px;background:#d6d6d6;"></div><div style="position:absolute;left:1404px;top:443px;width:1.5px;height:24px;background:#d6d6d6;"></div><div style="position:absolute;left:1536px;top:443px;width:1.5px;height:24px;background:#d6d6d6;"></div><div style="position:absolute;left:1586px;top:443px;width:1.5px;height:24px;background:#d6d6d6;"></div><div style="position:absolute;left:1718px;top:443px;width:1.5px;height:24px;background:#d6d6d6;"></div><div style="position:absolute;left:1770px;top:443px;width:1.5px;height:24px;background:#d6d6d6;"></div><div style="position:absolute;left:1902px;top:443px;width:1.5px;height:24px;background:#d6d6d6;"></div><div style="position:absolute;left:1978px;top:443px;width:1.5px;height:24px;background:#d6d6d6;"></div><div style="position:absolute;left:2100px;top:443px;width:1.5px;height:24px;background:#d6d6d6;"></div><div style="position:absolute;left:2182px;top:443px;width:1.5px;height:24px;background:#d6d6d6;"></div><svg style="position:absolute;left:846px;top:443px;" width="10" height="10" viewBox="0 0 10 10"><path d="M0 0 H10 V2 H8 V4 H6 V6 H4 V8 H2 V10 H0 Z" fill="#36801f" shape-rendering="crispEdges"/></svg><div style="position:absolute;top:448.61px;font-size:17px;line-height:1;color:#000;white-space:nowrap;letter-spacing:0.72px;left:44.00px;-webkit-text-stroke:0.45px #000;">Delaware</div><div style="position:absolute;top:448.61px;font-size:17px;line-height:1;color:#000;white-space:nowrap;letter-spacing:0.72px;left:248.00px;-webkit-text-stroke:0.45px #000;">4th Graders Not Proficient in Reading (%)</div><div style="position:absolute;top:448.61px;font-size:17px;line-height:1;color:#000;white-space:nowrap;letter-spacing:0.72px;left:707.00px;-webkit-text-stroke:0.45px #000;">4RD</div><div style="position:absolute;top:448.61px;font-size:17px;line-height:1;color:#000;white-space:nowrap;letter-spacing:0.72px;left:856.00px;width:100px;text-align:center;-webkit-text-stroke:0.45px #000;">2024</div><div style="position:absolute;top:448.61px;font-size:17px;line-height:1;color:#000;white-space:nowrap;letter-spacing:0.72px;left:969.00px;width:100px;text-align:center;-webkit-text-stroke:0.45px #000;">73.5179</div><div style="position:absolute;top:448.61px;font-size:17px;line-height:1;color:#000;white-space:nowrap;letter-spacing:0.72px;left:1070.00px;width:80px;text-align:center;-webkit-text-stroke:0.45px #000;">43</div><div style="position:absolute;top:448.61px;font-size:17px;line-height:1;color:#000;white-space:nowrap;letter-spacing:0.72px;left:1162.00px;width:100px;text-align:center;-webkit-text-stroke:0.45px #000;">33</div><div style="position:absolute;top:448.61px;font-size:17px;line-height:1;color:#000;white-space:nowrap;letter-spacing:0.72px;left:1290.00px;width:100px;text-align:center;-webkit-text-stroke:0.45px #000;">47</div><div style="position:absolute;top:448.61px;font-size:17px;line-height:1;color:#000;white-space:nowrap;letter-spacing:0.72px;left:1422.20px;width:100px;text-align:center;-webkit-text-stroke:0.45px #000;">30</div><div style="position:absolute;top:448.61px;font-size:17px;line-height:1;color:#000;white-space:nowrap;letter-spacing:0.72px;left:1604.20px;width:100px;text-align:center;-webkit-text-stroke:0.45px #000;">17</div><div style="position:absolute;top:448.61px;font-size:17px;line-height:1;color:#000;white-space:nowrap;letter-spacing:0.72px;left:1788.20px;width:100px;text-align:center;-webkit-text-stroke:0.45px #000;">37</div><div style="position:absolute;top:448.61px;font-size:17px;line-height:1;color:#000;white-space:nowrap;letter-spacing:0.72px;left:1991.00px;width:100px;text-align:center;-webkit-text-stroke:0.45px #000;">27</div><div style="position:absolute;top:448.61px;font-size:17px;line-height:1;color:#000;white-space:nowrap;letter-spacing:0.72px;left:2208.30px;width:100px;text-align:center;-webkit-text-stroke:0.45px #000;">33</div><div style="position:absolute;left:1536px;top:443px;width:52px;height:24px;background:#545386;overflow:hidden;"><div style="position:absolute;top:5.61px;font-size:17px;line-height:1;color:#fff;white-space:nowrap;letter-spacing:0.72px;left:-74.00px;width:200px;text-align:center;-webkit-text-stroke:0.45px #fff;">Worse</div></div><div style="position:absolute;left:1719px;top:443px;width:52px;height:24px;background:#9a99be;overflow:hidden;"><div style="position:absolute;top:5.61px;font-size:17px;line-height:1;color:#111;white-space:nowrap;letter-spacing:0.72px;left:-74.00px;width:200px;text-align:center;-webkit-text-stroke:0.45px #111;">Better</div></div><div style="position:absolute;left:1903px;top:443px;width:76px;height:24px;background:#545386;overflow:hidden;"><div style="position:absolute;top:5.61px;font-size:17px;line-height:1;color:#fff;white-space:nowrap;letter-spacing:0.72px;left:-62.00px;width:200px;text-align:center;-webkit-text-stroke:0.45px #fff;">Worse</div></div><div style="position:absolute;left:2101px;top:443px;width:82px;height:24px;background:#545386;overflow:hidden;"><div style="position:absolute;top:5.61px;font-size:17px;line-height:1;color:#fff;white-space:nowrap;letter-spacing:0.72px;left:-59.00px;width:200px;text-align:center;-webkit-text-stroke:0.45px #fff;">Worse</div></div><div style="position:absolute;left:0px;top:493px;width:38px;height:1px;background:#e6e6e6;"></div><div style="position:absolute;top:476.26px;font-size:16px;line-height:1;color:#5c5c5c;white-space:nowrap;left:0.00px;width:38px;text-align:center;">20</div><div style="position:absolute;left:40px;top:467px;width:2290px;height:28px;background:#f3f3f3;"></div><svg style="position:absolute;left:846px;top:467px;" width="10" height="10" viewBox="0 0 10 10"><path d="M0 0 H10 V2 H8 V4 H6 V6 H4 V8 H2 V10 H0 Z" fill="#36801f" shape-rendering="crispEdges"/></svg><div style="position:absolute;top:474.61px;font-size:17px;line-height:1;color:#000;white-space:nowrap;letter-spacing:0.72px;left:44.00px;-webkit-text-stroke:0.45px #000;">Florida</div><div style="position:absolute;top:474.61px;font-size:17px;line-height:1;color:#000;white-space:nowrap;letter-spacing:0.72px;left:248.00px;-webkit-text-stroke:0.45px #000;">4th Graders Not Proficient in Reading (%)</div><div style="position:absolute;top:474.61px;font-size:17px;line-height:1;color:#000;white-space:nowrap;letter-spacing:0.72px;left:707.00px;-webkit-text-stroke:0.45px #000;">4RD</div><div style="position:absolute;top:474.61px;font-size:17px;line-height:1;color:#000;white-space:nowrap;letter-spacing:0.72px;left:856.00px;width:100px;text-align:center;-webkit-text-stroke:0.45px #000;">2019</div><div style="position:absolute;top:474.61px;font-size:17px;line-height:1;color:#000;white-space:nowrap;letter-spacing:0.72px;left:969.00px;width:100px;text-align:center;-webkit-text-stroke:0.45px #000;">62.3321</div><div style="position:absolute;top:474.61px;font-size:17px;line-height:1;color:#000;white-space:nowrap;letter-spacing:0.72px;left:1070.00px;width:80px;text-align:center;-webkit-text-stroke:0.45px #000;">11</div><div style="position:absolute;top:474.61px;font-size:17px;line-height:1;color:#000;white-space:nowrap;letter-spacing:0.72px;left:1162.00px;width:100px;text-align:center;-webkit-text-stroke:0.45px #000;">6</div><div style="position:absolute;top:474.61px;font-size:17px;line-height:1;color:#000;white-space:nowrap;letter-spacing:0.72px;left:1290.00px;width:100px;text-align:center;-webkit-text-stroke:0.45px #000;">20</div><div style="position:absolute;top:474.61px;font-size:17px;line-height:1;color:#000;white-space:nowrap;letter-spacing:0.72px;left:1422.20px;width:100px;text-align:center;-webkit-text-stroke:0.45px #000;">35</div><div style="position:absolute;top:474.61px;font-size:17px;line-height:1;color:#000;white-space:nowrap;letter-spacing:0.72px;left:1604.20px;width:100px;text-align:center;-webkit-text-stroke:0.45px #000;">43</div><div style="position:absolute;top:474.61px;font-size:17px;line-height:1;color:#000;white-space:nowrap;letter-spacing:0.72px;left:1788.20px;width:100px;text-align:center;-webkit-text-stroke:0.45px #000;">19</div><div style="position:absolute;top:474.61px;font-size:17px;line-height:1;color:#000;white-space:nowrap;letter-spacing:0.72px;left:1991.00px;width:100px;text-align:center;-webkit-text-stroke:0.45px #000;">32</div><div style="position:absolute;top:474.61px;font-size:17px;line-height:1;color:#000;white-space:nowrap;letter-spacing:0.72px;left:2208.30px;width:100px;text-align:center;-webkit-text-stroke:0.45px #000;">30</div><div style="position:absolute;left:1536px;top:467px;width:52px;height:28px;background:#545386;overflow:hidden;"><div style="position:absolute;top:7.61px;font-size:17px;line-height:1;color:#fff;white-space:nowrap;letter-spacing:0.72px;left:-74.00px;width:200px;text-align:center;-webkit-text-stroke:0.45px #fff;">Worse</div></div><div style="position:absolute;left:1719px;top:467px;width:52px;height:28px;background:#2d2c5e;overflow:hidden;"><div style="position:absolute;top:7.61px;font-size:17px;line-height:1;color:#fff;white-space:nowrap;letter-spacing:0.72px;left:-74.00px;width:200px;text-align:center;-webkit-text-stroke:0.45px #fff;">Worst</div></div><div style="position:absolute;left:1903px;top:467px;width:76px;height:28px;background:#9a99be;overflow:hidden;"><div style="position:absolute;top:7.61px;font-size:17px;line-height:1;color:#111;white-space:nowrap;letter-spacing:0.72px;left:-62.00px;width:200px;text-align:center;-webkit-text-stroke:0.45px #111;">Better</div></div><div style="position:absolute;left:2101px;top:467px;width:82px;height:28px;background:#545386;overflow:hidden;"><div style="position:absolute;top:7.61px;font-size:17px;line-height:1;color:#fff;white-space:nowrap;letter-spacing:0.72px;left:-59.00px;width:200px;text-align:center;-webkit-text-stroke:0.45px #fff;">Worse</div></div><div style="position:absolute;left:0px;top:519px;width:38px;height:1px;background:#e6e6e6;"></div><div style="position:absolute;top:502.26px;font-size:16px;line-height:1;color:#5c5c5c;white-space:nowrap;left:0.00px;width:38px;text-align:center;">21</div><div style="position:absolute;left:242px;top:495px;width:1.5px;height:24px;background:#d6d6d6;"></div><div style="position:absolute;left:702px;top:495px;width:1.5px;height:24px;background:#d6d6d6;"></div><div style="position:absolute;left:844px;top:495px;width:1.5px;height:24px;background:#d6d6d6;"></div><div style="position:absolute;left:966px;top:495px;width:1.5px;height:24px;background:#d6d6d6;"></div><div style="position:absolute;left:1068.5px;top:495px;width:1.5px;height:24px;background:#d6d6d6;"></div><div style="position:absolute;left:1151px;top:495px;width:1.5px;height:24px;background:#d6d6d6;"></div><div style="position:absolute;left:1272px;top:495px;width:1.5px;height:24px;background:#d6d6d6;"></div><div style="position:absolute;left:1404px;top:495px;width:1.5px;height:24px;background:#d6d6d6;"></div><div style="position:absolute;left:1536px;top:495px;width:1.5px;height:24px;background:#d6d6d6;"></div><div style="position:absolute;left:1586px;top:495px;width:1.5px;height:24px;background:#d6d6d6;"></div><div style="position:absolute;left:1718px;top:495px;width:1.5px;height:24px;background:#d6d6d6;"></div><div style="position:absolute;left:1770px;top:495px;width:1.5px;height:24px;background:#d6d6d6;"></div><div style="position:absolute;left:1902px;top:495px;width:1.5px;height:24px;background:#d6d6d6;"></div><div style="position:absolute;left:1978px;top:495px;width:1.5px;height:24px;background:#d6d6d6;"></div><div style="position:absolute;left:2100px;top:495px;width:1.5px;height:24px;background:#d6d6d6;"></div><div style="position:absolute;left:2182px;top:495px;width:1.5px;height:24px;background:#d6d6d6;"></div><svg style="position:absolute;left:846px;top:495px;" width="10" height="10" viewBox="0 0 10 10"><path d="M0 0 H10 V2 H8 V4 H6 V6 H4 V8 H2 V10 H0 Z" fill="#36801f" shape-rendering="crispEdges"/></svg><div style="position:absolute;top:500.61px;font-size:17px;line-height:1;color:#000;white-space:nowrap;letter-spacing:0.72px;left:44.00px;-webkit-text-stroke:0.45px #000;">Florida</div><div style="position:absolute;top:500.61px;font-size:17px;line-height:1;color:#000;white-space:nowrap;letter-spacing:0.72px;left:248.00px;-webkit-text-stroke:0.45px #000;">4th Graders Not Proficient in Reading (%)</div><div style="position:absolute;top:500.61px;font-size:17px;line-height:1;color:#000;white-space:nowrap;letter-spacing:0.72px;left:707.00px;-webkit-text-stroke:0.45px #000;">4RD</div><div style="position:absolute;top:500.61px;font-size:17px;line-height:1;color:#000;white-space:nowrap;letter-spacing:0.72px;left:856.00px;width:100px;text-align:center;-webkit-text-stroke:0.45px #000;">2024</div><div style="position:absolute;top:500.61px;font-size:17px;line-height:1;color:#000;white-space:nowrap;letter-spacing:0.72px;left:969.00px;width:100px;text-align:center;-webkit-text-stroke:0.45px #000;">67.013</div><div style="position:absolute;top:500.61px;font-size:17px;line-height:1;color:#000;white-space:nowrap;letter-spacing:0.72px;left:1070.00px;width:80px;text-align:center;-webkit-text-stroke:0.45px #000;">10</div><div style="position:absolute;top:500.61px;font-size:17px;line-height:1;color:#000;white-space:nowrap;letter-spacing:0.72px;left:1162.00px;width:100px;text-align:center;-webkit-text-stroke:0.45px #000;">8</div><div style="position:absolute;top:500.61px;font-size:17px;line-height:1;color:#000;white-space:nowrap;letter-spacing:0.72px;left:1290.00px;width:100px;text-align:center;-webkit-text-stroke:0.45px #000;">29</div><div style="position:absolute;top:500.61px;font-size:17px;line-height:1;color:#000;white-space:nowrap;letter-spacing:0.72px;left:1422.20px;width:100px;text-align:center;-webkit-text-stroke:0.45px #000;">35</div><div style="position:absolute;top:500.61px;font-size:17px;line-height:1;color:#000;white-space:nowrap;letter-spacing:0.72px;left:1604.20px;width:100px;text-align:center;-webkit-text-stroke:0.45px #000;">43</div><div style="position:absolute;top:500.61px;font-size:17px;line-height:1;color:#000;white-space:nowrap;letter-spacing:0.72px;left:1788.20px;width:100px;text-align:center;-webkit-text-stroke:0.45px #000;">19</div><div style="position:absolute;top:500.61px;font-size:17px;line-height:1;color:#000;white-space:nowrap;letter-spacing:0.72px;left:1991.00px;width:100px;text-align:center;-webkit-text-stroke:0.45px #000;">32</div><div style="position:absolute;top:500.61px;font-size:17px;line-height:1;color:#000;white-space:nowrap;letter-spacing:0.72px;left:2208.30px;width:100px;text-align:center;-webkit-text-stroke:0.45px #000;">30</div><div style="position:absolute;left:1536px;top:495px;width:52px;height:24px;background:#545386;overflow:hidden;"><div style="position:absolute;top:5.61px;font-size:17px;line-height:1;color:#fff;white-space:nowrap;letter-spacing:0.72px;left:-74.00px;width:200px;text-align:center;-webkit-text-stroke:0.45px #fff;">Worse</div></div><div style="position:absolute;left:1719px;top:495px;width:52px;height:24px;background:#2d2c5e;overflow:hidden;"><div style="position:absolute;top:5.61px;font-size:17px;line-height:1;color:#fff;white-space:nowrap;letter-spacing:0.72px;left:-74.00px;width:200px;text-align:center;-webkit-text-stroke:0.45px #fff;">Worst</div></div><div style="position:absolute;left:1903px;top:495px;width:76px;height:24px;background:#9a99be;overflow:hidden;"><div style="position:absolute;top:5.61px;font-size:17px;line-height:1;color:#111;white-space:nowrap;letter-spacing:0.72px;left:-62.00px;width:200px;text-align:center;-webkit-text-stroke:0.45px #111;">Better</div></div><div style="position:absolute;left:2101px;top:495px;width:82px;height:24px;background:#545386;overflow:hidden;"><div style="position:absolute;top:5.61px;font-size:17px;line-height:1;color:#fff;white-space:nowrap;letter-spacing:0.72px;left:-59.00px;width:200px;text-align:center;-webkit-text-stroke:0.45px #fff;">Worse</div></div><div style="position:absolute;left:0px;top:545px;width:38px;height:1px;background:#e6e6e6;"></div><div style="position:absolute;top:528.26px;font-size:16px;line-height:1;color:#5c5c5c;white-space:nowrap;left:0.00px;width:38px;text-align:center;">22</div><div style="position:absolute;left:40px;top:519px;width:2290px;height:28px;background:#f3f3f3;"></div><svg style="position:absolute;left:846px;top:519px;" width="10" height="10" viewBox="0 0 10 10"><path d="M0 0 H10 V2 H8 V4 H6 V6 H4 V8 H2 V10 H0 Z" fill="#36801f" shape-rendering="crispEdges"/></svg><div style="position:absolute;top:526.61px;font-size:17px;line-height:1;color:#000;white-space:nowrap;letter-spacing:0.72px;left:44.00px;-webkit-text-stroke:0.45px #000;">Georgia</div><div style="position:absolute;top:526.61px;font-size:17px;line-height:1;color:#000;white-space:nowrap;letter-spacing:0.72px;left:248.00px;-webkit-text-stroke:0.45px #000;">4th Graders Not Proficient in Reading (%)</div><div style="position:absolute;top:526.61px;font-size:17px;line-height:1;color:#000;white-space:nowrap;letter-spacing:0.72px;left:707.00px;-webkit-text-stroke:0.45px #000;">4RD</div><div style="position:absolute;top:526.61px;font-size:17px;line-height:1;color:#000;white-space:nowrap;letter-spacing:0.72px;left:856.00px;width:100px;text-align:center;-webkit-text-stroke:0.45px #000;">2019</div><div style="position:absolute;top:526.61px;font-size:17px;line-height:1;color:#000;white-space:nowrap;letter-spacing:0.72px;left:969.00px;width:100px;text-align:center;-webkit-text-stroke:0.45px #000;">67.7772</div><div style="position:absolute;top:526.61px;font-size:17px;line-height:1;color:#000;white-space:nowrap;letter-spacing:0.72px;left:1070.00px;width:80px;text-align:center;-webkit-text-stroke:0.45px #000;">36</div><div style="position:absolute;top:526.61px;font-size:17px;line-height:1;color:#000;white-space:nowrap;letter-spacing:0.72px;left:1162.00px;width:100px;text-align:center;-webkit-text-stroke:0.45px #000;">27</div><div style="position:absolute;top:526.61px;font-size:17px;line-height:1;color:#000;white-space:nowrap;letter-spacing:0.72px;left:1290.00px;width:100px;text-align:center;-webkit-text-stroke:0.45px #000;">45</div><div style="position:absolute;top:526.61px;font-size:17px;line-height:1;color:#000;white-space:nowrap;letter-spacing:0.72px;left:1422.20px;width:100px;text-align:center;-webkit-text-stroke:0.45px #000;">39</div><div style="position:absolute;top:526.61px;font-size:17px;line-height:1;color:#000;white-space:nowrap;letter-spacing:0.72px;left:1604.20px;width:100px;text-align:center;-webkit-text-stroke:0.45px #000;">37</div><div style="position:absolute;top:526.61px;font-size:17px;line-height:1;color:#000;white-space:nowrap;letter-spacing:0.72px;left:1788.20px;width:100px;text-align:center;-webkit-text-stroke:0.45px #000;">32</div><div style="position:absolute;top:526.61px;font-size:17px;line-height:1;color:#000;white-space:nowrap;letter-spacing:0.72px;left:1991.00px;width:100px;text-align:center;-webkit-text-stroke:0.45px #000;">40</div><div style="position:absolute;top:526.61px;font-size:17px;line-height:1;color:#000;white-space:nowrap;letter-spacing:0.72px;left:2208.30px;width:100px;text-align:center;-webkit-text-stroke:0.45px #000;">42</div><div style="position:absolute;left:1536px;top:519px;width:52px;height:28px;background:#2d2c5e;overflow:hidden;"><div style="position:absolute;top:7.61px;font-size:17px;line-height:1;color:#fff;white-space:nowrap;letter-spacing:0.72px;left:-74.00px;width:200px;text-align:center;-webkit-text-stroke:0.45px #fff;">Worst</div></div><div style="position:absolute;left:1719px;top:519px;width:52px;height:28px;background:#545386;overflow:hidden;"><div style="position:absolute;top:7.61px;font-size:17px;line-height:1;color:#fff;white-space:nowrap;letter-spacing:0.72px;left:-74.00px;width:200px;text-align:center;-webkit-text-stroke:0.45px #fff;">Worse</div></div><div style="position:absolute;left:1903px;top:519px;width:76px;height:28px;background:#545386;overflow:hidden;"><div style="position:absolute;top:7.61px;font-size:17px;line-height:1;color:#fff;white-space:nowrap;letter-spacing:0.72px;left:-62.00px;width:200px;text-align:center;-webkit-text-stroke:0.45px #fff;">Worse</div></div><div style="position:absolute;left:2101px;top:519px;width:82px;height:28px;background:#2d2c5e;overflow:hidden;"><div style="position:absolute;top:7.61px;font-size:17px;line-height:1;color:#fff;white-space:nowrap;letter-spacing:0.72px;left:-59.00px;width:200px;text-align:center;-webkit-text-stroke:0.45px #fff;">Worst</div></div><div style="position:absolute;left:0px;top:571px;width:38px;height:1px;background:#e6e6e6;"></div><div style="position:absolute;top:554.26px;font-size:16px;line-height:1;color:#5c5c5c;white-space:nowrap;left:0.00px;width:38px;text-align:center;">23</div><div style="position:absolute;left:242px;top:547px;width:1.5px;height:24px;background:#d6d6d6;"></div><div style="position:absolute;left:702px;top:547px;width:1.5px;height:24px;background:#d6d6d6;"></div><div style="position:absolute;left:844px;top:547px;width:1.5px;height:24px;background:#d6d6d6;"></div><div style="position:absolute;left:966px;top:547px;width:1.5px;height:24px;background:#d6d6d6;"></div><div style="position:absolute;left:1068.5px;top:547px;width:1.5px;height:24px;background:#d6d6d6;"></div><div style="position:absolute;left:1151px;top:547px;width:1.5px;height:24px;background:#d6d6d6;"></div><div style="position:absolute;left:1272px;top:547px;width:1.5px;height:24px;background:#d6d6d6;"></div><div style="position:absolute;left:1404px;top:547px;width:1.5px;height:24px;background:#d6d6d6;"></div><div style="position:absolute;left:1536px;top:547px;width:1.5px;height:24px;background:#d6d6d6;"></div><div style="position:absolute;left:1586px;top:547px;width:1.5px;height:24px;background:#d6d6d6;"></div><div style="position:absolute;left:1718px;top:547px;width:1.5px;height:24px;background:#d6d6d6;"></div><div style="position:absolute;left:1770px;top:547px;width:1.5px;height:24px;background:#d6d6d6;"></div><div style="position:absolute;left:1902px;top:547px;width:1.5px;height:24px;background:#d6d6d6;"></div><div style="position:absolute;left:1978px;top:547px;width:1.5px;height:24px;background:#d6d6d6;"></div><div style="position:absolute;left:2100px;top:547px;width:1.5px;height:24px;background:#d6d6d6;"></div><div style="position:absolute;left:2182px;top:547px;width:1.5px;height:24px;background:#d6d6d6;"></div><svg style="position:absolute;left:846px;top:547px;" width="10" height="10" viewBox="0 0 10 10"><path d="M0 0 H10 V2 H8 V4 H6 V6 H4 V8 H2 V10 H0 Z" fill="#36801f" shape-rendering="crispEdges"/></svg><div style="position:absolute;top:552.61px;font-size:17px;line-height:1;color:#000;white-space:nowrap;letter-spacing:0.72px;left:44.00px;-webkit-text-stroke:0.45px #000;">Georgia</div><div style="position:absolute;top:552.61px;font-size:17px;line-height:1;color:#000;white-space:nowrap;letter-spacing:0.72px;left:248.00px;-webkit-text-stroke:0.45px #000;">4th Graders Not Proficient in Reading (%)</div><div style="position:absolute;top:552.61px;font-size:17px;line-height:1;color:#000;white-space:nowrap;letter-spacing:0.72px;left:707.00px;-webkit-text-stroke:0.45px #000;">4RD</div><div style="position:absolute;top:552.61px;font-size:17px;line-height:1;color:#000;white-space:nowrap;letter-spacing:0.72px;left:856.00px;width:100px;text-align:center;-webkit-text-stroke:0.45px #000;">2024</div><div style="position:absolute;top:552.61px;font-size:17px;line-height:1;color:#000;white-space:nowrap;letter-spacing:0.72px;left:969.00px;width:100px;text-align:center;-webkit-text-stroke:0.45px #000;">69.5603</div><div style="position:absolute;top:552.61px;font-size:17px;line-height:1;color:#000;white-space:nowrap;letter-spacing:0.72px;left:1070.00px;width:80px;text-align:center;-webkit-text-stroke:0.45px #000;">28</div><div style="position:absolute;top:552.61px;font-size:17px;line-height:1;color:#000;white-space:nowrap;letter-spacing:0.72px;left:1162.00px;width:100px;text-align:center;-webkit-text-stroke:0.45px #000;">10</div><div style="position:absolute;top:552.61px;font-size:17px;line-height:1;color:#000;white-space:nowrap;letter-spacing:0.72px;left:1290.00px;width:100px;text-align:center;-webkit-text-stroke:0.45px #000;">40</div><div style="position:absolute;top:552.61px;font-size:17px;line-height:1;color:#000;white-space:nowrap;letter-spacing:0.72px;left:1422.20px;width:100px;text-align:center;-webkit-text-stroke:0.45px #000;">39</div><div style="position:absolute;top:552.61px;font-size:17px;line-height:1;color:#000;white-space:nowrap;letter-spacing:0.72px;left:1604.20px;width:100px;text-align:center;-webkit-text-stroke:0.45px #000;">37</div><div style="position:absolute;top:552.61px;font-size:17px;line-height:1;color:#000;white-space:nowrap;letter-spacing:0.72px;left:1788.20px;width:100px;text-align:center;-webkit-text-stroke:0.45px #000;">32</div><div style="position:absolute;top:552.61px;font-size:17px;line-height:1;color:#000;white-space:nowrap;letter-spacing:0.72px;left:1991.00px;width:100px;text-align:center;-webkit-text-stroke:0.45px #000;">40</div><div style="position:absolute;top:552.61px;font-size:17px;line-height:1;color:#000;white-space:nowrap;letter-spacing:0.72px;left:2208.30px;width:100px;text-align:center;-webkit-text-stroke:0.45px #000;">42</div><div style="position:absolute;left:1536px;top:547px;width:52px;height:24px;background:#2d2c5e;overflow:hidden;"><div style="position:absolute;top:5.61px;font-size:17px;line-height:1;color:#fff;white-space:nowrap;letter-spacing:0.72px;left:-74.00px;width:200px;text-align:center;-webkit-text-stroke:0.45px #fff;">Worst</div></div><div style="position:absolute;left:1719px;top:547px;width:52px;height:24px;background:#545386;overflow:hidden;"><div style="position:absolute;top:5.61px;font-size:17px;line-height:1;color:#fff;white-space:nowrap;letter-spacing:0.72px;left:-74.00px;width:200px;text-align:center;-webkit-text-stroke:0.45px #fff;">Worse</div></div><div style="position:absolute;left:1903px;top:547px;width:76px;height:24px;background:#545386;overflow:hidden;"><div style="position:absolute;top:5.61px;font-size:17px;line-height:1;color:#fff;white-space:nowrap;letter-spacing:0.72px;left:-62.00px;width:200px;text-align:center;-webkit-text-stroke:0.45px #fff;">Worse</div></div><div style="position:absolute;left:2101px;top:547px;width:82px;height:24px;background:#2d2c5e;overflow:hidden;"><div style="position:absolute;top:5.61px;font-size:17px;line-height:1;color:#fff;white-space:nowrap;letter-spacing:0.72px;left:-59.00px;width:200px;text-align:center;-webkit-text-stroke:0.45px #fff;">Worst</div></div><div style="position:absolute;left:0px;top:597px;width:38px;height:1px;background:#e6e6e6;"></div><div style="position:absolute;top:580.26px;font-size:16px;line-height:1;color:#5c5c5c;white-space:nowrap;left:0.00px;width:38px;text-align:center;">24</div><div style="position:absolute;left:40px;top:571px;width:2290px;height:28px;background:#f3f3f3;"></div><svg style="position:absolute;left:846px;top:571px;" width="10" height="10" viewBox="0 0 10 10"><path d="M0 0 H10 V2 H8 V4 H6 V6 H4 V8 H2 V10 H0 Z" fill="#36801f" shape-rendering="crispEdges"/></svg><div style="position:absolute;top:578.61px;font-size:17px;line-height:1;color:#000;white-space:nowrap;letter-spacing:0.72px;left:44.00px;-webkit-text-stroke:0.45px #000;">Hawaii</div><div style="position:absolute;top:578.61px;font-size:17px;line-height:1;color:#000;white-space:nowrap;letter-spacing:0.72px;left:248.00px;-webkit-text-stroke:0.45px #000;">4th Graders Not Proficient in Reading (%)</div><div style="position:absolute;top:578.61px;font-size:17px;line-height:1;color:#000;white-space:nowrap;letter-spacing:0.72px;left:707.00px;-webkit-text-stroke:0.45px #000;">4RD</div><div style="position:absolute;top:578.61px;font-size:17px;line-height:1;color:#000;white-space:nowrap;letter-spacing:0.72px;left:856.00px;width:100px;text-align:center;-webkit-text-stroke:0.45px #000;">2019</div><div style="position:absolute;top:578.61px;font-size:17px;line-height:1;color:#000;white-space:nowrap;letter-spacing:0.72px;left:969.00px;width:100px;text-align:center;-webkit-text-stroke:0.45px #000;">66.212</div><div style="position:absolute;top:578.61px;font-size:17px;line-height:1;color:#000;white-space:nowrap;letter-spacing:0.72px;left:1070.00px;width:80px;text-align:center;-webkit-text-stroke:0.45px #000;">33</div><div style="position:absolute;top:578.61px;font-size:17px;line-height:1;color:#000;white-space:nowrap;letter-spacing:0.72px;left:1162.00px;width:100px;text-align:center;-webkit-text-stroke:0.45px #000;">17</div><div style="position:absolute;top:578.61px;font-size:17px;line-height:1;color:#000;white-space:nowrap;letter-spacing:0.72px;left:1290.00px;width:100px;text-align:center;-webkit-text-stroke:0.45px #000;">41</div><div style="position:absolute;top:578.61px;font-size:17px;line-height:1;color:#000;white-space:nowrap;letter-spacing:0.72px;left:1422.20px;width:100px;text-align:center;-webkit-text-stroke:0.45px #000;">24</div><div style="position:absolute;top:578.61px;font-size:17px;line-height:1;color:#000;white-space:nowrap;letter-spacing:0.72px;left:1604.20px;width:100px;text-align:center;-webkit-text-stroke:0.45px #000;">33</div><div style="position:absolute;top:578.61px;font-size:17px;line-height:1;color:#000;white-space:nowrap;letter-spacing:0.72px;left:1788.20px;width:100px;text-align:center;-webkit-text-stroke:0.45px #000;">29</div><div style="position:absolute;top:578.61px;font-size:17px;line-height:1;color:#000;white-space:nowrap;letter-spacing:0.72px;left:1991.00px;width:100px;text-align:center;-webkit-text-stroke:0.45px #000;">10</div><div style="position:absolute;top:578.61px;font-size:17px;line-height:1;color:#000;white-space:nowrap;letter-spacing:0.72px;left:2208.30px;width:100px;text-align:center;-webkit-text-stroke:0.45px #000;">14</div><div style="position:absolute;left:1536px;top:571px;width:52px;height:28px;background:#9a99be;overflow:hidden;"><div style="position:absolute;top:7.61px;font-size:17px;line-height:1;color:#111;white-space:nowrap;letter-spacing:0.72px;left:-74.00px;width:200px;text-align:center;-webkit-text-stroke:0.45px #111;">Better</div></div><div style="position:absolute;left:1719px;top:571px;width:52px;height:28px;background:#545386;overflow:hidden;"><div style="position:absolute;top:7.61px;font-size:17px;line-height:1;color:#fff;white-space:nowrap;letter-spacing:0.72px;left:-74.00px;width:200px;text-align:center;-webkit-text-stroke:0.45px #fff;">Worse</div></div><div style="position:absolute;left:1903px;top:571px;width:76px;height:28px;background:#545386;overflow:hidden;"><div style="position:absolute;top:7.61px;font-size:17px;line-height:1;color:#fff;white-space:nowrap;letter-spacing:0.72px;left:-62.00px;width:200px;text-align:center;-webkit-text-stroke:0.45px #fff;">Worse</div></div><div style="position:absolute;left:2101px;top:571px;width:82px;height:28px;background:#c8c7dd;overflow:hidden;"><div style="position:absolute;top:7.61px;font-size:17px;line-height:1;color:#111;white-space:nowrap;letter-spacing:0.72px;left:-59.00px;width:200px;text-align:center;-webkit-text-stroke:0.45px #111;">Best</div></div><div style="position:absolute;left:0px;top:623px;width:38px;height:1px;background:#e6e6e6;"></div><div style="position:absolute;top:606.26px;font-size:16px;line-height:1;color:#5c5c5c;white-space:nowrap;left:0.00px;width:38px;text-align:center;">25</div><div style="position:absolute;left:242px;top:599px;width:1.5px;height:24px;background:#d6d6d6;"></div><div style="position:absolute;left:702px;top:599px;width:1.5px;height:24px;background:#d6d6d6;"></div><div style="position:absolute;left:844px;top:599px;width:1.5px;height:24px;background:#d6d6d6;"></div><div style="position:absolute;left:966px;top:599px;width:1.5px;height:24px;background:#d6d6d6;"></div><div style="position:absolute;left:1068.5px;top:599px;width:1.5px;height:24px;background:#d6d6d6;"></div><div style="position:absolute;left:1151px;top:599px;width:1.5px;height:24px;background:#d6d6d6;"></div><div style="position:absolute;left:1272px;top:599px;width:1.5px;height:24px;background:#d6d6d6;"></div><div style="position:absolute;left:1404px;top:599px;width:1.5px;height:24px;background:#d6d6d6;"></div><div style="position:absolute;left:1536px;top:599px;width:1.5px;height:24px;background:#d6d6d6;"></div><div style="position:absolute;left:1586px;top:599px;width:1.5px;height:24px;background:#d6d6d6;"></div><div style="position:absolute;left:1718px;top:599px;width:1.5px;height:24px;background:#d6d6d6;"></div><div style="position:absolute;left:1770px;top:599px;width:1.5px;height:24px;background:#d6d6d6;"></div><div style="position:absolute;left:1902px;top:599px;width:1.5px;height:24px;background:#d6d6d6;"></div><div style="position:absolute;left:1978px;top:599px;width:1.5px;height:24px;background:#d6d6d6;"></div><div style="position:absolute;left:2100px;top:599px;width:1.5px;height:24px;background:#d6d6d6;"></div><div style="position:absolute;left:2182px;top:599px;width:1.5px;height:24px;background:#d6d6d6;"></div><svg style="position:absolute;left:846px;top:599px;" width="10" height="10" viewBox="0 0 10 10"><path d="M0 0 H10 V2 H8 V4 H6 V6 H4 V8 H2 V10 H0 Z" fill="#36801f" shape-rendering="crispEdges"/></svg><div style="position:absolute;top:604.61px;font-size:17px;line-height:1;color:#000;white-space:nowrap;letter-spacing:0.72px;left:44.00px;-webkit-text-stroke:0.45px #000;">Hawaii</div><div style="position:absolute;top:604.61px;font-size:17px;line-height:1;color:#000;white-space:nowrap;letter-spacing:0.72px;left:248.00px;-webkit-text-stroke:0.45px #000;">4th Graders Not Proficient in Reading (%)</div><div style="position:absolute;top:604.61px;font-size:17px;line-height:1;color:#000;white-space:nowrap;letter-spacing:0.72px;left:707.00px;-webkit-text-stroke:0.45px #000;">4RD</div><div style="position:absolute;top:604.61px;font-size:17px;line-height:1;color:#000;white-space:nowrap;letter-spacing:0.72px;left:856.00px;width:100px;text-align:center;-webkit-text-stroke:0.45px #000;">2024</div><div style="position:absolute;top:604.61px;font-size:17px;line-height:1;color:#000;white-space:nowrap;letter-spacing:0.72px;left:969.00px;width:100px;text-align:center;-webkit-text-stroke:0.45px #000;">68.4054</div><div style="position:absolute;top:604.61px;font-size:17px;line-height:1;color:#000;white-space:nowrap;letter-spacing:0.72px;left:1070.00px;width:80px;text-align:center;-webkit-text-stroke:0.45px #000;">22</div><div style="position:absolute;top:604.61px;font-size:17px;line-height:1;color:#000;white-space:nowrap;letter-spacing:0.72px;left:1162.00px;width:100px;text-align:center;-webkit-text-stroke:0.45px #000;">9</div><div style="position:absolute;top:604.61px;font-size:17px;line-height:1;color:#000;white-space:nowrap;letter-spacing:0.72px;left:1290.00px;width:100px;text-align:center;-webkit-text-stroke:0.45px #000;">31</div><div style="position:absolute;top:604.61px;font-size:17px;line-height:1;color:#000;white-space:nowrap;letter-spacing:0.72px;left:1422.20px;width:100px;text-align:center;-webkit-text-stroke:0.45px #000;">24</div><div style="position:absolute;top:604.61px;font-size:17px;line-height:1;color:#000;white-space:nowrap;letter-spacing:0.72px;left:1604.20px;width:100px;text-align:center;-webkit-text-stroke:0.45px #000;">33</div><div style="position:absolute;top:604.61px;font-size:17px;line-height:1;color:#000;white-space:nowrap;letter-spacing:0.72px;left:1788.20px;width:100px;text-align:center;-webkit-text-stroke:0.45px #000;">29</div><div style="position:absolute;top:604.61px;font-size:17px;line-height:1;color:#000;white-space:nowrap;letter-spacing:0.72px;left:1991.00px;width:100px;text-align:center;-webkit-text-stroke:0.45px #000;">10</div><div style="position:absolute;top:604.61px;font-size:17px;line-height:1;color:#000;white-space:nowrap;letter-spacing:0.72px;left:2208.30px;width:100px;text-align:center;-webkit-text-stroke:0.45px #000;">14</div><div style="position:absolute;left:1536px;top:599px;width:52px;height:24px;background:#9a99be;overflow:hidden;"><div style="position:absolute;top:5.61px;font-size:17px;line-height:1;color:#111;white-space:nowrap;letter-spacing:0.72px;left:-74.00px;width:200px;text-align:center;-webkit-text-stroke:0.45px #111;">Better</div></div><div style="position:absolute;left:1719px;top:599px;width:52px;height:24px;background:#545386;overflow:hidden;"><div style="position:absolute;top:5.61px;font-size:17px;line-height:1;color:#fff;white-space:nowrap;letter-spacing:0.72px;left:-74.00px;width:200px;text-align:center;-webkit-text-stroke:0.45px #fff;">Worse</div></div><div style="position:absolute;left:1903px;top:599px;width:76px;height:24px;background:#545386;overflow:hidden;"><div style="position:absolute;top:5.61px;font-size:17px;line-height:1;color:#fff;white-space:nowrap;letter-spacing:0.72px;left:-62.00px;width:200px;text-align:center;-webkit-text-stroke:0.45px #fff;">Worse</div></div><div style="position:absolute;left:2101px;top:599px;width:82px;height:24px;background:#c8c7dd;overflow:hidden;"><div style="position:absolute;top:5.61px;font-size:17px;line-height:1;color:#111;white-space:nowrap;letter-spacing:0.72px;left:-59.00px;width:200px;text-align:center;-webkit-text-stroke:0.45px #111;">Best</div></div><div style="position:absolute;left:0px;top:649px;width:38px;height:1px;background:#e6e6e6;"></div><div style="position:absolute;top:632.26px;font-size:16px;line-height:1;color:#5c5c5c;white-space:nowrap;left:0.00px;width:38px;text-align:center;">26</div><div style="position:absolute;left:40px;top:623px;width:2290px;height:28px;background:#f3f3f3;"></div><svg style="position:absolute;left:846px;top:623px;" width="10" height="10" viewBox="0 0 10 10"><path d="M0 0 H10 V2 H8 V4 H6 V6 H4 V8 H2 V10 H0 Z" fill="#36801f" shape-rendering="crispEdges"/></svg><div style="position:absolute;top:630.61px;font-size:17px;line-height:1;color:#000;white-space:nowrap;letter-spacing:0.72px;left:44.00px;-webkit-text-stroke:0.45px #000;">Idaho</div><div style="position:absolute;top:630.61px;font-size:17px;line-height:1;color:#000;white-space:nowrap;letter-spacing:0.72px;left:248.00px;-webkit-text-stroke:0.45px #000;">4th Graders Not Proficient in Reading (%)</div><div style="position:absolute;top:630.61px;font-size:17px;line-height:1;color:#000;white-space:nowrap;letter-spacing:0.72px;left:707.00px;-webkit-text-stroke:0.45px #000;">4RD</div><div style="position:absolute;top:630.61px;font-size:17px;line-height:1;color:#000;white-space:nowrap;letter-spacing:0.72px;left:856.00px;width:100px;text-align:center;-webkit-text-stroke:0.45px #000;">2019</div><div style="position:absolute;top:630.61px;font-size:17px;line-height:1;color:#000;white-space:nowrap;letter-spacing:0.72px;left:969.00px;width:100px;text-align:center;-webkit-text-stroke:0.45px #000;">62.5562</div><div style="position:absolute;top:630.61px;font-size:17px;line-height:1;color:#000;white-space:nowrap;letter-spacing:0.72px;left:1070.00px;width:80px;text-align:center;-webkit-text-stroke:0.45px #000;">12</div><div style="position:absolute;top:630.61px;font-size:17px;line-height:1;color:#000;white-space:nowrap;letter-spacing:0.72px;left:1162.00px;width:100px;text-align:center;-webkit-text-stroke:0.45px #000;">6</div><div style="position:absolute;top:630.61px;font-size:17px;line-height:1;color:#000;white-space:nowrap;letter-spacing:0.72px;left:1290.00px;width:100px;text-align:center;-webkit-text-stroke:0.45px #000;">22</div><div style="position:absolute;top:630.61px;font-size:17px;line-height:1;color:#000;white-space:nowrap;letter-spacing:0.72px;left:1422.20px;width:100px;text-align:center;-webkit-text-stroke:0.45px #000;">15</div><div style="position:absolute;top:630.61px;font-size:17px;line-height:1;color:#000;white-space:nowrap;letter-spacing:0.72px;left:1604.20px;width:100px;text-align:center;-webkit-text-stroke:0.45px #000;">19</div><div style="position:absolute;top:630.61px;font-size:17px;line-height:1;color:#000;white-space:nowrap;letter-spacing:0.72px;left:1788.20px;width:100px;text-align:center;-webkit-text-stroke:0.45px #000;">40</div><div style="position:absolute;top:630.61px;font-size:17px;line-height:1;color:#000;white-space:nowrap;letter-spacing:0.72px;left:1991.00px;width:100px;text-align:center;-webkit-text-stroke:0.45px #000;">14</div><div style="position:absolute;top:630.61px;font-size:17px;line-height:1;color:#000;white-space:nowrap;letter-spacing:0.72px;left:2208.30px;width:100px;text-align:center;-webkit-text-stroke:0.45px #000;">5</div><div style="position:absolute;left:1536px;top:623px;width:52px;height:28px;background:#9a99be;overflow:hidden;"><div style="position:absolute;top:7.61px;font-size:17px;line-height:1;color:#111;white-space:nowrap;letter-spacing:0.72px;left:-74.00px;width:200px;text-align:center;-webkit-text-stroke:0.45px #111;">Better</div></div><div style="position:absolute;left:1719px;top:623px;width:52px;height:28px;background:#9a99be;overflow:hidden;"><div style="position:absolute;top:7.61px;font-size:17px;line-height:1;color:#111;white-space:nowrap;letter-spacing:0.72px;left:-74.00px;width:200px;text-align:center;-webkit-text-stroke:0.45px #111;">Better</div></div><div style="position:absolute;left:1903px;top:623px;width:76px;height:28px;background:#2d2c5e;overflow:hidden;"><div style="position:absolute;top:7.61px;font-size:17px;line-height:1;color:#fff;white-space:nowrap;letter-spacing:0.72px;left:-62.00px;width:200px;text-align:center;-webkit-text-stroke:0.45px #fff;">Worst</div></div><div style="position:absolute;left:2101px;top:623px;width:82px;height:28px;background:#9a99be;overflow:hidden;"><div style="position:absolute;top:7.61px;font-size:17px;line-height:1;color:#111;white-space:nowrap;letter-spacing:0.72px;left:-59.00px;width:200px;text-align:center;-webkit-text-stroke:0.45px #111;">Better</div></div><div style="position:absolute;left:0px;top:675px;width:38px;height:1px;background:#e6e6e6;"></div><div style="position:absolute;top:658.26px;font-size:16px;line-height:1;color:#5c5c5c;white-space:nowrap;left:0.00px;width:38px;text-align:center;">27</div><div style="position:absolute;left:242px;top:651px;width:1.5px;height:24px;background:#d6d6d6;"></div><div style="position:absolute;left:702px;top:651px;width:1.5px;height:24px;background:#d6d6d6;"></div><div style="position:absolute;left:844px;top:651px;width:1.5px;height:24px;background:#d6d6d6;"></div><div style="position:absolute;left:966px;top:651px;width:1.5px;height:24px;background:#d6d6d6;"></div><div style="position:absolute;left:1068.5px;top:651px;width:1.5px;height:24px;background:#d6d6d6;"></div><div style="position:absolute;left:1151px;top:651px;width:1.5px;height:24px;background:#d6d6d6;"></div><div style="position:absolute;left:1272px;top:651px;width:1.5px;height:24px;background:#d6d6d6;"></div><div style="position:absolute;left:1404px;top:651px;width:1.5px;height:24px;background:#d6d6d6;"></div><div style="position:absolute;left:1536px;top:651px;width:1.5px;height:24px;background:#d6d6d6;"></div><div style="position:absolute;left:1586px;top:651px;width:1.5px;height:24px;background:#d6d6d6;"></div><div style="position:absolute;left:1718px;top:651px;width:1.5px;height:24px;background:#d6d6d6;"></div><div style="position:absolute;left:1770px;top:651px;width:1.5px;height:24px;background:#d6d6d6;"></div><div style="position:absolute;left:1902px;top:651px;width:1.5px;height:24px;background:#d6d6d6;"></div><div style="position:absolute;left:1978px;top:651px;width:1.5px;height:24px;background:#d6d6d6;"></div><div style="position:absolute;left:2100px;top:651px;width:1.5px;height:24px;background:#d6d6d6;"></div><div style="position:absolute;left:2182px;top:651px;width:1.5px;height:24px;background:#d6d6d6;"></div><svg style="position:absolute;left:846px;top:651px;" width="10" height="10" viewBox="0 0 10 10"><path d="M0 0 H10 V2 H8 V4 H6 V6 H4 V8 H2 V10 H0 Z" fill="#36801f" shape-rendering="crispEdges"/></svg><div style="position:absolute;top:656.61px;font-size:17px;line-height:1;color:#000;white-space:nowrap;letter-spacing:0.72px;left:44.00px;-webkit-text-stroke:0.45px #000;">Idaho</div><div style="position:absolute;top:656.61px;font-size:17px;line-height:1;color:#000;white-space:nowrap;letter-spacing:0.72px;left:248.00px;-webkit-text-stroke:0.45px #000;">4th Graders Not Proficient in Reading (%)</div><div style="position:absolute;top:656.61px;font-size:17px;line-height:1;color:#000;white-space:nowrap;letter-spacing:0.72px;left:707.00px;-webkit-text-stroke:0.45px #000;">4RD</div><div style="position:absolute;top:656.61px;font-size:17px;line-height:1;color:#000;white-space:nowrap;letter-spacing:0.72px;left:856.00px;width:100px;text-align:center;-webkit-text-stroke:0.45px #000;">2024</div><div style="position:absolute;top:656.61px;font-size:17px;line-height:1;color:#000;white-space:nowrap;letter-spacing:0.72px;left:969.00px;width:100px;text-align:center;-webkit-text-stroke:0.45px #000;">68.1287</div><div style="position:absolute;top:656.61px;font-size:17px;line-height:1;color:#000;white-space:nowrap;letter-spacing:0.72px;left:1070.00px;width:80px;text-align:center;-webkit-text-stroke:0.45px #000;">19</div><div style="position:absolute;top:656.61px;font-size:17px;line-height:1;color:#000;white-space:nowrap;letter-spacing:0.72px;left:1162.00px;width:100px;text-align:center;-webkit-text-stroke:0.45px #000;">9</div><div style="position:absolute;top:656.61px;font-size:17px;line-height:1;color:#000;white-space:nowrap;letter-spacing:0.72px;left:1290.00px;width:100px;text-align:center;-webkit-text-stroke:0.45px #000;">31</div><div style="position:absolute;top:656.61px;font-size:17px;line-height:1;color:#000;white-space:nowrap;letter-spacing:0.72px;left:1422.20px;width:100px;text-align:center;-webkit-text-stroke:0.45px #000;">15</div><div style="position:absolute;top:656.61px;font-size:17px;line-height:1;color:#000;white-space:nowrap;letter-spacing:0.72px;left:1604.20px;width:100px;text-align:center;-webkit-text-stroke:0.45px #000;">19</div><div style="position:absolute;top:656.61px;font-size:17px;line-height:1;color:#000;white-space:nowrap;letter-spacing:0.72px;left:1788.20px;width:100px;text-align:center;-webkit-text-stroke:0.45px #000;">40</div><div style="position:absolute;top:656.61px;font-size:17px;line-height:1;color:#000;white-space:nowrap;letter-spacing:0.72px;left:1991.00px;width:100px;text-align:center;-webkit-text-stroke:0.45px #000;">14</div><div style="position:absolute;top:656.61px;font-size:17px;line-height:1;color:#000;white-space:nowrap;letter-spacing:0.72px;left:2208.30px;width:100px;text-align:center;-webkit-text-stroke:0.45px #000;">5</div><div style="position:absolute;left:1536px;top:651px;width:52px;height:24px;background:#9a99be;overflow:hidden;"><div style="position:absolute;top:5.61px;font-size:17px;line-height:1;color:#111;white-space:nowrap;letter-spacing:0.72px;left:-74.00px;width:200px;text-align:center;-webkit-text-stroke:0.45px #111;">Better</div></div><div style="position:absolute;left:1719px;top:651px;width:52px;height:24px;background:#9a99be;overflow:hidden;"><div style="position:absolute;top:5.61px;font-size:17px;line-height:1;color:#111;white-space:nowrap;letter-spacing:0.72px;left:-74.00px;width:200px;text-align:center;-webkit-text-stroke:0.45px #111;">Better</div></div><div style="position:absolute;left:1903px;top:651px;width:76px;height:24px;background:#2d2c5e;overflow:hidden;"><div style="position:absolute;top:5.61px;font-size:17px;line-height:1;color:#fff;white-space:nowrap;letter-spacing:0.72px;left:-62.00px;width:200px;text-align:center;-webkit-text-stroke:0.45px #fff;">Worst</div></div><div style="position:absolute;left:2101px;top:651px;width:82px;height:24px;background:#9a99be;overflow:hidden;"><div style="position:absolute;top:5.61px;font-size:17px;line-height:1;color:#111;white-space:nowrap;letter-spacing:0.72px;left:-59.00px;width:200px;text-align:center;-webkit-text-stroke:0.45px #111;">Better</div></div><div style="position:absolute;left:0px;top:701px;width:38px;height:1px;background:#e6e6e6;"></div><div style="position:absolute;top:684.26px;font-size:16px;line-height:1;color:#5c5c5c;white-space:nowrap;left:0.00px;width:38px;text-align:center;">28</div><div style="position:absolute;left:40px;top:675px;width:2290px;height:28px;background:#f3f3f3;"></div><svg style="position:absolute;left:846px;top:675px;" width="10" height="10" viewBox="0 0 10 10"><path d="M0 0 H10 V2 H8 V4 H6 V6 H4 V8 H2 V10 H0 Z" fill="#36801f" shape-rendering="crispEdges"/></svg><div style="position:absolute;top:682.61px;font-size:17px;line-height:1;color:#000;white-space:nowrap;letter-spacing:0.72px;left:44.00px;-webkit-text-stroke:0.45px #000;">Illinois</div><div style="position:absolute;top:682.61px;font-size:17px;line-height:1;color:#000;white-space:nowrap;letter-spacing:0.72px;left:248.00px;-webkit-text-stroke:0.45px #000;">4th Graders Not Proficient in Reading (%)</div><div style="position:absolute;top:682.61px;font-size:17px;line-height:1;color:#000;white-space:nowrap;letter-spacing:0.72px;left:707.00px;-webkit-text-stroke:0.45px #000;">4RD</div><div style="position:absolute;top:682.61px;font-size:17px;line-height:1;color:#000;white-space:nowrap;letter-spacing:0.72px;left:856.00px;width:100px;text-align:center;-webkit-text-stroke:0.45px #000;">2019</div><div style="position:absolute;top:682.61px;font-size:17px;line-height:1;color:#000;white-space:nowrap;letter-spacing:0.72px;left:969.00px;width:100px;text-align:center;-webkit-text-stroke:0.45px #000;">65.6283</div><div style="position:absolute;top:682.61px;font-size:17px;line-height:1;color:#000;white-space:nowrap;letter-spacing:0.72px;left:1070.00px;width:80px;text-align:center;-webkit-text-stroke:0.45px #000;">28</div><div style="position:absolute;top:682.61px;font-size:17px;line-height:1;color:#000;white-space:nowrap;letter-spacing:0.72px;left:1162.00px;width:100px;text-align:center;-webkit-text-stroke:0.45px #000;">16</div><div style="position:absolute;top:682.61px;font-size:17px;line-height:1;color:#000;white-space:nowrap;letter-spacing:0.72px;left:1290.00px;width:100px;text-align:center;-webkit-text-stroke:0.45px #000;">37</div><div style="position:absolute;top:682.61px;font-size:17px;line-height:1;color:#000;white-space:nowrap;letter-spacing:0.72px;left:1422.20px;width:100px;text-align:center;-webkit-text-stroke:0.45px #000;">18</div><div style="position:absolute;top:682.61px;font-size:17px;line-height:1;color:#000;white-space:nowrap;letter-spacing:0.72px;left:1604.20px;width:100px;text-align:center;-webkit-text-stroke:0.45px #000;">18</div><div style="position:absolute;top:682.61px;font-size:17px;line-height:1;color:#000;white-space:nowrap;letter-spacing:0.72px;left:1788.20px;width:100px;text-align:center;-webkit-text-stroke:0.45px #000;">7</div><div style="position:absolute;top:682.61px;font-size:17px;line-height:1;color:#000;white-space:nowrap;letter-spacing:0.72px;left:1991.00px;width:100px;text-align:center;-webkit-text-stroke:0.45px #000;">23</div><div style="position:absolute;top:682.61px;font-size:17px;line-height:1;color:#000;white-space:nowrap;letter-spacing:0.72px;left:2208.30px;width:100px;text-align:center;-webkit-text-stroke:0.45px #000;">26</div><div style="position:absolute;left:1536px;top:675px;width:52px;height:28px;background:#9a99be;overflow:hidden;"><div style="position:absolute;top:7.61px;font-size:17px;line-height:1;color:#111;white-space:nowrap;letter-spacing:0.72px;left:-74.00px;width:200px;text-align:center;-webkit-text-stroke:0.45px #111;">Better</div></div><div style="position:absolute;left:1719px;top:675px;width:52px;height:28px;background:#9a99be;overflow:hidden;"><div style="position:absolute;top:7.61px;font-size:17px;line-height:1;color:#111;white-space:nowrap;letter-spacing:0.72px;left:-74.00px;width:200px;text-align:center;-webkit-text-stroke:0.45px #111;">Better</div></div><div style="position:absolute;left:1903px;top:675px;width:76px;height:28px;background:#c8c7dd;overflow:hidden;"><div style="position:absolute;top:7.61px;font-size:17px;line-height:1;color:#111;white-space:nowrap;letter-spacing:0.72px;left:-62.00px;width:200px;text-align:center;-webkit-text-stroke:0.45px #111;">Best</div></div><div style="position:absolute;left:2101px;top:675px;width:82px;height:28px;background:#9a99be;overflow:hidden;"><div style="position:absolute;top:7.61px;font-size:17px;line-height:1;color:#111;white-space:nowrap;letter-spacing:0.72px;left:-59.00px;width:200px;text-align:center;-webkit-text-stroke:0.45px #111;">Better</div></div><div style="position:absolute;left:0px;top:727px;width:38px;height:1px;background:#e6e6e6;"></div><div style="position:absolute;top:710.26px;font-size:16px;line-height:1;color:#5c5c5c;white-space:nowrap;left:0.00px;width:38px;text-align:center;">29</div><div style="position:absolute;left:242px;top:703px;width:1.5px;height:24px;background:#d6d6d6;"></div><div style="position:absolute;left:702px;top:703px;width:1.5px;height:24px;background:#d6d6d6;"></div><div style="position:absolute;left:844px;top:703px;width:1.5px;height:24px;background:#d6d6d6;"></div><div style="position:absolute;left:966px;top:703px;width:1.5px;height:24px;background:#d6d6d6;"></div><div style="position:absolute;left:1068.5px;top:703px;width:1.5px;height:24px;background:#d6d6d6;"></div><div style="position:absolute;left:1151px;top:703px;width:1.5px;height:24px;background:#d6d6d6;"></div><div style="position:absolute;left:1272px;top:703px;width:1.5px;height:24px;background:#d6d6d6;"></div><div style="position:absolute;left:1404px;top:703px;width:1.5px;height:24px;background:#d6d6d6;"></div><div style="position:absolute;left:1536px;top:703px;width:1.5px;height:24px;background:#d6d6d6;"></div><div style="position:absolute;left:1586px;top:703px;width:1.5px;height:24px;background:#d6d6d6;"></div><div style="position:absolute;left:1718px;top:703px;width:1.5px;height:24px;background:#d6d6d6;"></div><div style="position:absolute;left:1770px;top:703px;width:1.5px;height:24px;background:#d6d6d6;"></div><div style="position:absolute;left:1902px;top:703px;width:1.5px;height:24px;background:#d6d6d6;"></div><div style="position:absolute;left:1978px;top:703px;width:1.5px;height:24px;background:#d6d6d6;"></div><div style="position:absolute;left:2100px;top:703px;width:1.5px;height:24px;background:#d6d6d6;"></div><div style="position:absolute;left:2182px;top:703px;width:1.5px;height:24px;background:#d6d6d6;"></div><svg style="position:absolute;left:846px;top:703px;" width="10" height="10" viewBox="0 0 10 10"><path d="M0 0 H10 V2 H8 V4 H6 V6 H4 V8 H2 V10 H0 Z" fill="#36801f" shape-rendering="crispEdges"/></svg><div style="position:absolute;top:708.61px;font-size:17px;line-height:1;color:#000;white-space:nowrap;letter-spacing:0.72px;left:44.00px;-webkit-text-stroke:0.45px #000;">Illinois</div><div style="position:absolute;top:708.61px;font-size:17px;line-height:1;color:#000;white-space:nowrap;letter-spacing:0.72px;left:248.00px;-webkit-text-stroke:0.45px #000;">4th Graders Not Proficient in Reading (%)</div><div style="position:absolute;top:708.61px;font-size:17px;line-height:1;color:#000;white-space:nowrap;letter-spacing:0.72px;left:707.00px;-webkit-text-stroke:0.45px #000;">4RD</div><div style="position:absolute;top:708.61px;font-size:17px;line-height:1;color:#000;white-space:nowrap;letter-spacing:0.72px;left:856.00px;width:100px;text-align:center;-webkit-text-stroke:0.45px #000;">2024</div><div style="position:absolute;top:708.61px;font-size:17px;line-height:1;color:#000;white-space:nowrap;letter-spacing:0.72px;left:969.00px;width:100px;text-align:center;-webkit-text-stroke:0.45px #000;">69.567</div><div style="position:absolute;top:708.61px;font-size:17px;line-height:1;color:#000;white-space:nowrap;letter-spacing:0.72px;left:1070.00px;width:80px;text-align:center;-webkit-text-stroke:0.45px #000;">29</div><div style="position:absolute;top:708.61px;font-size:17px;line-height:1;color:#000;white-space:nowrap;letter-spacing:0.72px;left:1162.00px;width:100px;text-align:center;-webkit-text-stroke:0.45px #000;">10</div><div style="position:absolute;top:708.61px;font-size:17px;line-height:1;color:#000;white-space:nowrap;letter-spacing:0.72px;left:1290.00px;width:100px;text-align:center;-webkit-text-stroke:0.45px #000;">40</div><div style="position:absolute;top:708.61px;font-size:17px;line-height:1;color:#000;white-space:nowrap;letter-spacing:0.72px;left:1422.20px;width:100px;text-align:center;-webkit-text-stroke:0.45px #000;">18</div><div style="position:absolute;top:708.61px;font-size:17px;line-height:1;color:#000;white-space:nowrap;letter-spacing:0.72px;left:1604.20px;width:100px;text-align:center;-webkit-text-stroke:0.45px #000;">18</div><div style="position:absolute;top:708.61px;font-size:17px;line-height:1;color:#000;white-space:nowrap;letter-spacing:0.72px;left:1788.20px;width:100px;text-align:center;-webkit-text-stroke:0.45px #000;">7</div><div style="position:absolute;top:708.61px;font-size:17px;line-height:1;color:#000;white-space:nowrap;letter-spacing:0.72px;left:1991.00px;width:100px;text-align:center;-webkit-text-stroke:0.45px #000;">23</div><div style="position:absolute;top:708.61px;font-size:17px;line-height:1;color:#000;white-space:nowrap;letter-spacing:0.72px;left:2208.30px;width:100px;text-align:center;-webkit-text-stroke:0.45px #000;">26</div><div style="position:absolute;left:1536px;top:703px;width:52px;height:24px;background:#9a99be;overflow:hidden;"><div style="position:absolute;top:5.61px;font-size:17px;line-height:1;color:#111;white-space:nowrap;letter-spacing:0.72px;left:-74.00px;width:200px;text-align:center;-webkit-text-stroke:0.45px #111;">Better</div></div><div style="position:absolute;left:1719px;top:703px;width:52px;height:24px;background:#9a99be;overflow:hidden;"><div style="position:absolute;top:5.61px;font-size:17px;line-height:1;color:#111;white-space:nowrap;letter-spacing:0.72px;left:-74.00px;width:200px;text-align:center;-webkit-text-stroke:0.45px #111;">Better</div></div><div style="position:absolute;left:1903px;top:703px;width:76px;height:24px;background:#c8c7dd;overflow:hidden;"><div style="position:absolute;top:5.61px;font-size:17px;line-height:1;color:#111;white-space:nowrap;letter-spacing:0.72px;left:-62.00px;width:200px;text-align:center;-webkit-text-stroke:0.45px #111;">Best</div></div><div style="position:absolute;left:2101px;top:703px;width:82px;height:24px;background:#9a99be;overflow:hidden;"><div style="position:absolute;top:5.61px;font-size:17px;line-height:1;color:#111;white-space:nowrap;letter-spacing:0.72px;left:-59.00px;width:200px;text-align:center;-webkit-text-stroke:0.45px #111;">Better</div></div><div style="position:absolute;left:0px;top:753px;width:38px;height:1px;background:#e6e6e6;"></div><div style="position:absolute;top:736.26px;font-size:16px;line-height:1;color:#5c5c5c;white-space:nowrap;left:0.00px;width:38px;text-align:center;">30</div><div style="position:absolute;left:40px;top:727px;width:2290px;height:28px;background:#f3f3f3;"></div><svg style="position:absolute;left:846px;top:727px;" width="10" height="10" viewBox="0 0 10 10"><path d="M0 0 H10 V2 H8 V4 H6 V6 H4 V8 H2 V10 H0 Z" fill="#36801f" shape-rendering="crispEdges"/></svg><div style="position:absolute;top:734.61px;font-size:17px;line-height:1;color:#000;white-space:nowrap;letter-spacing:0.72px;left:44.00px;-webkit-text-stroke:0.45px #000;">Indiana</div><div style="position:absolute;top:734.61px;font-size:17px;line-height:1;color:#000;white-space:nowrap;letter-spacing:0.72px;left:248.00px;-webkit-text-stroke:0.45px #000;">4th Graders Not Proficient in Reading (%)</div><div style="position:absolute;top:734.61px;font-size:17px;line-height:1;color:#000;white-space:nowrap;letter-spacing:0.72px;left:707.00px;-webkit-text-stroke:0.45px #000;">4RD</div><div style="position:absolute;top:734.61px;font-size:17px;line-height:1;color:#000;white-space:nowrap;letter-spacing:0.72px;left:856.00px;width:100px;text-align:center;-webkit-text-stroke:0.45px #000;">2019</div><div style="position:absolute;top:734.61px;font-size:17px;line-height:1;color:#000;white-space:nowrap;letter-spacing:0.72px;left:969.00px;width:100px;text-align:center;-webkit-text-stroke:0.45px #000;">63.0409</div><div style="position:absolute;top:734.61px;font-size:17px;line-height:1;color:#000;white-space:nowrap;letter-spacing:0.72px;left:1070.00px;width:80px;text-align:center;-webkit-text-stroke:0.45px #000;">14</div><div style="position:absolute;top:734.61px;font-size:17px;line-height:1;color:#000;white-space:nowrap;letter-spacing:0.72px;left:1162.00px;width:100px;text-align:center;-webkit-text-stroke:0.45px #000;">7</div><div style="position:absolute;top:734.61px;font-size:17px;line-height:1;color:#000;white-space:nowrap;letter-spacing:0.72px;left:1290.00px;width:100px;text-align:center;-webkit-text-stroke:0.45px #000;">29</div><div style="position:absolute;top:734.61px;font-size:17px;line-height:1;color:#000;white-space:nowrap;letter-spacing:0.72px;left:1422.20px;width:100px;text-align:center;-webkit-text-stroke:0.45px #000;">25</div><div style="position:absolute;top:734.61px;font-size:17px;line-height:1;color:#000;white-space:nowrap;letter-spacing:0.72px;left:1604.20px;width:100px;text-align:center;-webkit-text-stroke:0.45px #000;">11</div><div style="position:absolute;top:734.61px;font-size:17px;line-height:1;color:#000;white-space:nowrap;letter-spacing:0.72px;left:1788.20px;width:100px;text-align:center;-webkit-text-stroke:0.45px #000;">11</div><div style="position:absolute;top:734.61px;font-size:17px;line-height:1;color:#000;white-space:nowrap;letter-spacing:0.72px;left:1991.00px;width:100px;text-align:center;-webkit-text-stroke:0.45px #000;">30</div><div style="position:absolute;top:734.61px;font-size:17px;line-height:1;color:#000;white-space:nowrap;letter-spacing:0.72px;left:2208.30px;width:100px;text-align:center;-webkit-text-stroke:0.45px #000;">31</div><div style="position:absolute;left:1536px;top:727px;width:52px;height:28px;background:#9a99be;overflow:hidden;"><div style="position:absolute;top:7.61px;font-size:17px;line-height:1;color:#111;white-space:nowrap;letter-spacing:0.72px;left:-74.00px;width:200px;text-align:center;-webkit-text-stroke:0.45px #111;">Better</div></div><div style="position:absolute;left:1719px;top:727px;width:52px;height:28px;background:#c8c7dd;overflow:hidden;"><div style="position:absolute;top:7.61px;font-size:17px;line-height:1;color:#111;white-space:nowrap;letter-spacing:0.72px;left:-74.00px;width:200px;text-align:center;-webkit-text-stroke:0.45px #111;">Best</div></div><div style="position:absolute;left:1903px;top:727px;width:76px;height:28px;background:#c8c7dd;overflow:hidden;"><div style="position:absolute;top:7.61px;font-size:17px;line-height:1;color:#111;white-space:nowrap;letter-spacing:0.72px;left:-62.00px;width:200px;text-align:center;-webkit-text-stroke:0.45px #111;">Best</div></div><div style="position:absolute;left:2101px;top:727px;width:82px;height:28px;background:#545386;overflow:hidden;"><div style="position:absolute;top:7.61px;font-size:17px;line-height:1;color:#fff;white-space:nowrap;letter-spacing:0.72px;left:-59.00px;width:200px;text-align:center;-webkit-text-stroke:0.45px #fff;">Worse</div></div><div style="position:absolute;left:0px;top:779px;width:38px;height:1px;background:#e6e6e6;"></div><div style="position:absolute;top:762.26px;font-size:16px;line-height:1;color:#5c5c5c;white-space:nowrap;left:0.00px;width:38px;text-align:center;">31</div><div style="position:absolute;left:242px;top:755px;width:1.5px;height:24px;background:#d6d6d6;"></div><div style="position:absolute;left:702px;top:755px;width:1.5px;height:24px;background:#d6d6d6;"></div><div style="position:absolute;left:844px;top:755px;width:1.5px;height:24px;background:#d6d6d6;"></div><div style="position:absolute;left:966px;top:755px;width:1.5px;height:24px;background:#d6d6d6;"></div><div style="position:absolute;left:1068.5px;top:755px;width:1.5px;height:24px;background:#d6d6d6;"></div><div style="position:absolute;left:1151px;top:755px;width:1.5px;height:24px;background:#d6d6d6;"></div><div style="position:absolute;left:1272px;top:755px;width:1.5px;height:24px;background:#d6d6d6;"></div><div style="position:absolute;left:1404px;top:755px;width:1.5px;height:24px;background:#d6d6d6;"></div><div style="position:absolute;left:1536px;top:755px;width:1.5px;height:24px;background:#d6d6d6;"></div><div style="position:absolute;left:1586px;top:755px;width:1.5px;height:24px;background:#d6d6d6;"></div><div style="position:absolute;left:1718px;top:755px;width:1.5px;height:24px;background:#d6d6d6;"></div><div style="position:absolute;left:1770px;top:755px;width:1.5px;height:24px;background:#d6d6d6;"></div><div style="position:absolute;left:1902px;top:755px;width:1.5px;height:24px;background:#d6d6d6;"></div><div style="position:absolute;left:1978px;top:755px;width:1.5px;height:24px;background:#d6d6d6;"></div><div style="position:absolute;left:2100px;top:755px;width:1.5px;height:24px;background:#d6d6d6;"></div><div style="position:absolute;left:2182px;top:755px;width:1.5px;height:24px;background:#d6d6d6;"></div><svg style="position:absolute;left:846px;top:755px;" width="10" height="10" viewBox="0 0 10 10"><path d="M0 0 H10 V2 H8 V4 H6 V6 H4 V8 H2 V10 H0 Z" fill="#36801f" shape-rendering="crispEdges"/></svg><div style="position:absolute;top:760.61px;font-size:17px;line-height:1;color:#000;white-space:nowrap;letter-spacing:0.72px;left:44.00px;-webkit-text-stroke:0.45px #000;">Indiana</div><div style="position:absolute;top:760.61px;font-size:17px;line-height:1;color:#000;white-space:nowrap;letter-spacing:0.72px;left:248.00px;-webkit-text-stroke:0.45px #000;">4th Graders Not Proficient in Reading (%)</div><div style="position:absolute;top:760.61px;font-size:17px;line-height:1;color:#000;white-space:nowrap;letter-spacing:0.72px;left:707.00px;-webkit-text-stroke:0.45px #000;">4RD</div><div style="position:absolute;top:760.61px;font-size:17px;line-height:1;color:#000;white-space:nowrap;letter-spacing:0.72px;left:856.00px;width:100px;text-align:center;-webkit-text-stroke:0.45px #000;">2024</div><div style="position:absolute;top:760.61px;font-size:17px;line-height:1;color:#000;white-space:nowrap;letter-spacing:0.72px;left:969.00px;width:100px;text-align:center;-webkit-text-stroke:0.45px #000;">65.5374</div><div style="position:absolute;top:760.61px;font-size:17px;line-height:1;color:#000;white-space:nowrap;letter-spacing:0.72px;left:1070.00px;width:80px;text-align:center;-webkit-text-stroke:0.45px #000;">8</div><div style="position:absolute;top:760.61px;font-size:17px;line-height:1;color:#000;white-space:nowrap;letter-spacing:0.72px;left:1162.00px;width:100px;text-align:center;-webkit-text-stroke:0.45px #000;">3</div><div style="position:absolute;top:760.61px;font-size:17px;line-height:1;color:#000;white-space:nowrap;letter-spacing:0.72px;left:1290.00px;width:100px;text-align:center;-webkit-text-stroke:0.45px #000;">15</div><div style="position:absolute;top:760.61px;font-size:17px;line-height:1;color:#000;white-space:nowrap;letter-spacing:0.72px;left:1422.20px;width:100px;text-align:center;-webkit-text-stroke:0.45px #000;">25</div><div style="position:absolute;top:760.61px;font-size:17px;line-height:1;color:#000;white-space:nowrap;letter-spacing:0.72px;left:1604.20px;width:100px;text-align:center;-webkit-text-stroke:0.45px #000;">11</div><div style="position:absolute;top:760.61px;font-size:17px;line-height:1;color:#000;white-space:nowrap;letter-spacing:0.72px;left:1788.20px;width:100px;text-align:center;-webkit-text-stroke:0.45px #000;">11</div><div style="position:absolute;top:760.61px;font-size:17px;line-height:1;color:#000;white-space:nowrap;letter-spacing:0.72px;left:1991.00px;width:100px;text-align:center;-webkit-text-stroke:0.45px #000;">30</div><div style="position:absolute;top:760.61px;font-size:17px;line-height:1;color:#000;white-space:nowrap;letter-spacing:0.72px;left:2208.30px;width:100px;text-align:center;-webkit-text-stroke:0.45px #000;">31</div><div style="position:absolute;left:1536px;top:755px;width:52px;height:24px;background:#9a99be;overflow:hidden;"><div style="position:absolute;top:5.61px;font-size:17px;line-height:1;color:#111;white-space:nowrap;letter-spacing:0.72px;left:-74.00px;width:200px;text-align:center;-webkit-text-stroke:0.45px #111;">Better</div></div><div style="position:absolute;left:1719px;top:755px;width:52px;height:24px;background:#c8c7dd;overflow:hidden;"><div style="position:absolute;top:5.61px;font-size:17px;line-height:1;color:#111;white-space:nowrap;letter-spacing:0.72px;left:-74.00px;width:200px;text-align:center;-webkit-text-stroke:0.45px #111;">Best</div></div><div style="position:absolute;left:1903px;top:755px;width:76px;height:24px;background:#c8c7dd;overflow:hidden;"><div style="position:absolute;top:5.61px;font-size:17px;line-height:1;color:#111;white-space:nowrap;letter-spacing:0.72px;left:-62.00px;width:200px;text-align:center;-webkit-text-stroke:0.45px #111;">Best</div></div><div style="position:absolute;left:2101px;top:755px;width:82px;height:24px;background:#545386;overflow:hidden;"><div style="position:absolute;top:5.61px;font-size:17px;line-height:1;color:#fff;white-space:nowrap;letter-spacing:0.72px;left:-59.00px;width:200px;text-align:center;-webkit-text-stroke:0.45px #fff;">Worse</div></div><div style="position:absolute;left:0px;top:805px;width:38px;height:1px;background:#e6e6e6;"></div><div style="position:absolute;top:788.26px;font-size:16px;line-height:1;color:#5c5c5c;white-space:nowrap;left:0.00px;width:38px;text-align:center;">32</div><div style="position:absolute;left:40px;top:779px;width:2290px;height:28px;background:#f3f3f3;"></div><svg style="position:absolute;left:846px;top:779px;" width="10" height="10" viewBox="0 0 10 10"><path d="M0 0 H10 V2 H8 V4 H6 V6 H4 V8 H2 V10 H0 Z" fill="#36801f" shape-rendering="crispEdges"/></svg><div style="position:absolute;top:786.61px;font-size:17px;line-height:1;color:#000;white-space:nowrap;letter-spacing:0.72px;left:44.00px;-webkit-text-stroke:0.45px #000;">Iowa</div><div style="position:absolute;top:786.61px;font-size:17px;line-height:1;color:#000;white-space:nowrap;letter-spacing:0.72px;left:248.00px;-webkit-text-stroke:0.45px #000;">4th Graders Not Proficient in Reading (%)</div><div style="position:absolute;top:786.61px;font-size:17px;line-height:1;color:#000;white-space:nowrap;letter-spacing:0.72px;left:707.00px;-webkit-text-stroke:0.45px #000;">4RD</div><div style="position:absolute;top:786.61px;font-size:17px;line-height:1;color:#000;white-space:nowrap;letter-spacing:0.72px;left:856.00px;width:100px;text-align:center;-webkit-text-stroke:0.45px #000;">2019</div><div style="position:absolute;top:786.61px;font-size:17px;line-height:1;color:#000;white-space:nowrap;letter-spacing:0.72px;left:969.00px;width:100px;text-align:center;-webkit-text-stroke:0.45px #000;">64.905</div><div style="position:absolute;top:786.61px;font-size:17px;line-height:1;color:#000;white-space:nowrap;letter-spacing:0.72px;left:1070.00px;width:80px;text-align:center;-webkit-text-stroke:0.45px #000;">23</div><div style="position:absolute;top:786.61px;font-size:17px;line-height:1;color:#000;white-space:nowrap;letter-spacing:0.72px;left:1162.00px;width:100px;text-align:center;-webkit-text-stroke:0.45px #000;">12</div><div style="position:absolute;top:786.61px;font-size:17px;line-height:1;color:#000;white-space:nowrap;letter-spacing:0.72px;left:1290.00px;width:100px;text-align:center;-webkit-text-stroke:0.45px #000;">34</div><div style="position:absolute;top:786.61px;font-size:17px;line-height:1;color:#000;white-space:nowrap;letter-spacing:0.72px;left:1422.20px;width:100px;text-align:center;-webkit-text-stroke:0.45px #000;">9</div><div style="position:absolute;top:786.61px;font-size:17px;line-height:1;color:#000;white-space:nowrap;letter-spacing:0.72px;left:1604.20px;width:100px;text-align:center;-webkit-text-stroke:0.45px #000;">6</div><div style="position:absolute;top:786.61px;font-size:17px;line-height:1;color:#000;white-space:nowrap;letter-spacing:0.72px;left:1788.20px;width:100px;text-align:center;-webkit-text-stroke:0.45px #000;">20</div><div style="position:absolute;top:786.61px;font-size:17px;line-height:1;color:#000;white-space:nowrap;letter-spacing:0.72px;left:1991.00px;width:100px;text-align:center;-webkit-text-stroke:0.45px #000;">15</div><div style="position:absolute;top:786.61px;font-size:17px;line-height:1;color:#000;white-space:nowrap;letter-spacing:0.72px;left:2208.30px;width:100px;text-align:center;-webkit-text-stroke:0.45px #000;">12</div><div style="position:absolute;left:1536px;top:779px;width:52px;height:28px;background:#c8c7dd;overflow:hidden;"><div style="position:absolute;top:7.61px;font-size:17px;line-height:1;color:#111;white-space:nowrap;letter-spacing:0.72px;left:-74.00px;width:200px;text-align:center;-webkit-text-stroke:0.45px #111;">Best</div></div><div style="position:absolute;left:1719px;top:779px;width:52px;height:28px;background:#c8c7dd;overflow:hidden;"><div style="position:absolute;top:7.61px;font-size:17px;line-height:1;color:#111;white-space:nowrap;letter-spacing:0.72px;left:-74.00px;width:200px;text-align:center;-webkit-text-stroke:0.45px #111;">Best</div></div><div style="position:absolute;left:1903px;top:779px;width:76px;height:28px;background:#9a99be;overflow:hidden;"><div style="position:absolute;top:7.61px;font-size:17px;line-height:1;color:#111;white-space:nowrap;letter-spacing:0.72px;left:-62.00px;width:200px;text-align:center;-webkit-text-stroke:0.45px #111;">Better</div></div><div style="position:absolute;left:2101px;top:779px;width:82px;height:28px;background:#9a99be;overflow:hidden;"><div style="position:absolute;top:7.61px;font-size:17px;line-height:1;color:#111;white-space:nowrap;letter-spacing:0.72px;left:-59.00px;width:200px;text-align:center;-webkit-text-stroke:0.45px #111;">Better</div></div><div style="position:absolute;left:0px;top:831px;width:38px;height:1px;background:#e6e6e6;"></div><div style="position:absolute;top:814.26px;font-size:16px;line-height:1;color:#5c5c5c;white-space:nowrap;left:0.00px;width:38px;text-align:center;">33</div><div style="position:absolute;left:242px;top:807px;width:1.5px;height:24px;background:#d6d6d6;"></div><div style="position:absolute;left:702px;top:807px;width:1.5px;height:24px;background:#d6d6d6;"></div><div style="position:absolute;left:844px;top:807px;width:1.5px;height:24px;background:#d6d6d6;"></div><div style="position:absolute;left:966px;top:807px;width:1.5px;height:24px;background:#d6d6d6;"></div><div style="position:absolute;left:1068.5px;top:807px;width:1.5px;height:24px;background:#d6d6d6;"></div><div style="position:absolute;left:1151px;top:807px;width:1.5px;height:24px;background:#d6d6d6;"></div><div style="position:absolute;left:1272px;top:807px;width:1.5px;height:24px;background:#d6d6d6;"></div><div style="position:absolute;left:1404px;top:807px;width:1.5px;height:24px;background:#d6d6d6;"></div><div style="position:absolute;left:1536px;top:807px;width:1.5px;height:24px;background:#d6d6d6;"></div><div style="position:absolute;left:1586px;top:807px;width:1.5px;height:24px;background:#d6d6d6;"></div><div style="position:absolute;left:1718px;top:807px;width:1.5px;height:24px;background:#d6d6d6;"></div><div style="position:absolute;left:1770px;top:807px;width:1.5px;height:24px;background:#d6d6d6;"></div><div style="position:absolute;left:1902px;top:807px;width:1.5px;height:24px;background:#d6d6d6;"></div><div style="position:absolute;left:1978px;top:807px;width:1.5px;height:24px;background:#d6d6d6;"></div><div style="position:absolute;left:2100px;top:807px;width:1.5px;height:24px;background:#d6d6d6;"></div><div style="position:absolute;left:2182px;top:807px;width:1.5px;height:24px;background:#d6d6d6;"></div><svg style="position:absolute;left:846px;top:807px;" width="10" height="10" viewBox="0 0 10 10"><path d="M0 0 H10 V2 H8 V4 H6 V6 H4 V8 H2 V10 H0 Z" fill="#36801f" shape-rendering="crispEdges"/></svg><div style="position:absolute;top:812.61px;font-size:17px;line-height:1;color:#000;white-space:nowrap;letter-spacing:0.72px;left:44.00px;-webkit-text-stroke:0.45px #000;">Iowa</div><div style="position:absolute;top:812.61px;font-size:17px;line-height:1;color:#000;white-space:nowrap;letter-spacing:0.72px;left:248.00px;-webkit-text-stroke:0.45px #000;">4th Graders Not Proficient in Reading (%)</div><div style="position:absolute;top:812.61px;font-size:17px;line-height:1;color:#000;white-space:nowrap;letter-spacing:0.72px;left:707.00px;-webkit-text-stroke:0.45px #000;">4RD</div><div style="position:absolute;top:812.61px;font-size:17px;line-height:1;color:#000;white-space:nowrap;letter-spacing:0.72px;left:856.00px;width:100px;text-align:center;-webkit-text-stroke:0.45px #000;">2024</div><div style="position:absolute;top:812.61px;font-size:17px;line-height:1;color:#000;white-space:nowrap;letter-spacing:0.72px;left:969.00px;width:100px;text-align:center;-webkit-text-stroke:0.45px #000;">70.8443</div><div style="position:absolute;top:812.61px;font-size:17px;line-height:1;color:#000;white-space:nowrap;letter-spacing:0.72px;left:1070.00px;width:80px;text-align:center;-webkit-text-stroke:0.45px #000;">32</div><div style="position:absolute;top:812.61px;font-size:17px;line-height:1;color:#000;white-space:nowrap;letter-spacing:0.72px;left:1162.00px;width:100px;text-align:center;-webkit-text-stroke:0.45px #000;">24</div><div style="position:absolute;top:812.61px;font-size:17px;line-height:1;color:#000;white-space:nowrap;letter-spacing:0.72px;left:1290.00px;width:100px;text-align:center;-webkit-text-stroke:0.45px #000;">41</div><div style="position:absolute;top:812.61px;font-size:17px;line-height:1;color:#000;white-space:nowrap;letter-spacing:0.72px;left:1422.20px;width:100px;text-align:center;-webkit-text-stroke:0.45px #000;">9</div><div style="position:absolute;top:812.61px;font-size:17px;line-height:1;color:#000;white-space:nowrap;letter-spacing:0.72px;left:1604.20px;width:100px;text-align:center;-webkit-text-stroke:0.45px #000;">6</div><div style="position:absolute;top:812.61px;font-size:17px;line-height:1;color:#000;white-space:nowrap;letter-spacing:0.72px;left:1788.20px;width:100px;text-align:center;-webkit-text-stroke:0.45px #000;">20</div><div style="position:absolute;top:812.61px;font-size:17px;line-height:1;color:#000;white-space:nowrap;letter-spacing:0.72px;left:1991.00px;width:100px;text-align:center;-webkit-text-stroke:0.45px #000;">15</div><div style="position:absolute;top:812.61px;font-size:17px;line-height:1;color:#000;white-space:nowrap;letter-spacing:0.72px;left:2208.30px;width:100px;text-align:center;-webkit-text-stroke:0.45px #000;">12</div><div style="position:absolute;left:1536px;top:807px;width:52px;height:24px;background:#c8c7dd;overflow:hidden;"><div style="position:absolute;top:5.61px;font-size:17px;line-height:1;color:#111;white-space:nowrap;letter-spacing:0.72px;left:-74.00px;width:200px;text-align:center;-webkit-text-stroke:0.45px #111;">Best</div></div><div style="position:absolute;left:1719px;top:807px;width:52px;height:24px;background:#c8c7dd;overflow:hidden;"><div style="position:absolute;top:5.61px;font-size:17px;line-height:1;color:#111;white-space:nowrap;letter-spacing:0.72px;left:-74.00px;width:200px;text-align:center;-webkit-text-stroke:0.45px #111;">Best</div></div><div style="position:absolute;left:1903px;top:807px;width:76px;height:24px;background:#9a99be;overflow:hidden;"><div style="position:absolute;top:5.61px;font-size:17px;line-height:1;color:#111;white-space:nowrap;letter-spacing:0.72px;left:-62.00px;width:200px;text-align:center;-webkit-text-stroke:0.45px #111;">Better</div></div><div style="position:absolute;left:2101px;top:807px;width:82px;height:24px;background:#9a99be;overflow:hidden;"><div style="position:absolute;top:5.61px;font-size:17px;line-height:1;color:#111;white-space:nowrap;letter-spacing:0.72px;left:-59.00px;width:200px;text-align:center;-webkit-text-stroke:0.45px #111;">Better</div></div><div style="position:absolute;left:0px;top:857px;width:38px;height:1px;background:#e6e6e6;"></div><div style="position:absolute;top:840.26px;font-size:16px;line-height:1;color:#5c5c5c;white-space:nowrap;left:0.00px;width:38px;text-align:center;">34</div><div style="position:absolute;left:40px;top:831px;width:2290px;height:28px;background:#f3f3f3;"></div><svg style="position:absolute;left:846px;top:831px;" width="10" height="10" viewBox="0 0 10 10"><path d="M0 0 H10 V2 H8 V4 H6 V6 H4 V8 H2 V10 H0 Z" fill="#36801f" shape-rendering="crispEdges"/></svg><div style="position:absolute;top:838.61px;font-size:17px;line-height:1;color:#000;white-space:nowrap;letter-spacing:0.72px;left:44.00px;-webkit-text-stroke:0.45px #000;">Kansas</div><div style="position:absolute;top:838.61px;font-size:17px;line-height:1;color:#000;white-space:nowrap;letter-spacing:0.72px;left:248.00px;-webkit-text-stroke:0.45px #000;">4th Graders Not Proficient in Reading (%)</div><div style="position:absolute;top:838.61px;font-size:17px;line-height:1;color:#000;white-space:nowrap;letter-spacing:0.72px;left:707.00px;-webkit-text-stroke:0.45px #000;">4RD</div><div style="position:absolute;top:838.61px;font-size:17px;line-height:1;color:#000;white-space:nowrap;letter-spacing:0.72px;left:856.00px;width:100px;text-align:center;-webkit-text-stroke:0.45px #000;">2019</div><div style="position:absolute;top:838.61px;font-size:17px;line-height:1;color:#000;white-space:nowrap;letter-spacing:0.72px;left:969.00px;width:100px;text-align:center;-webkit-text-stroke:0.45px #000;">66.1823</div><div style="position:absolute;top:838.61px;font-size:17px;line-height:1;color:#000;white-space:nowrap;letter-spacing:0.72px;left:1070.00px;width:80px;text-align:center;-webkit-text-stroke:0.45px #000;">32</div><div style="position:absolute;top:838.61px;font-size:17px;line-height:1;color:#000;white-space:nowrap;letter-spacing:0.72px;left:1162.00px;width:100px;text-align:center;-webkit-text-stroke:0.45px #000;">16</div><div style="position:absolute;top:838.61px;font-size:17px;line-height:1;color:#000;white-space:nowrap;letter-spacing:0.72px;left:1290.00px;width:100px;text-align:center;-webkit-text-stroke:0.45px #000;">41</div><div style="position:absolute;top:838.61px;font-size:17px;line-height:1;color:#000;white-space:nowrap;letter-spacing:0.72px;left:1422.20px;width:100px;text-align:center;-webkit-text-stroke:0.45px #000;">14</div><div style="position:absolute;top:838.61px;font-size:17px;line-height:1;color:#000;white-space:nowrap;letter-spacing:0.72px;left:1604.20px;width:100px;text-align:center;-webkit-text-stroke:0.45px #000;">5</div><div style="position:absolute;top:838.61px;font-size:17px;line-height:1;color:#000;white-space:nowrap;letter-spacing:0.72px;left:1788.20px;width:100px;text-align:center;-webkit-text-stroke:0.45px #000;">24</div><div style="position:absolute;top:838.61px;font-size:17px;line-height:1;color:#000;white-space:nowrap;letter-spacing:0.72px;left:1991.00px;width:100px;text-align:center;-webkit-text-stroke:0.45px #000;">26</div><div style="position:absolute;top:838.61px;font-size:17px;line-height:1;color:#000;white-space:nowrap;letter-spacing:0.72px;left:2208.30px;width:100px;text-align:center;-webkit-text-stroke:0.45px #000;">24</div><div style="position:absolute;left:1536px;top:831px;width:52px;height:28px;background:#9a99be;overflow:hidden;"><div style="position:absolute;top:7.61px;font-size:17px;line-height:1;color:#111;white-space:nowrap;letter-spacing:0.72px;left:-74.00px;width:200px;text-align:center;-webkit-text-stroke:0.45px #111;">Better</div></div><div style="position:absolute;left:1719px;top:831px;width:52px;height:28px;background:#c8c7dd;overflow:hidden;"><div style="position:absolute;top:7.61px;font-size:17px;line-height:1;color:#111;white-space:nowrap;letter-spacing:0.72px;left:-74.00px;width:200px;text-align:center;-webkit-text-stroke:0.45px #111;">Best</div></div><div style="position:absolute;left:1903px;top:831px;width:76px;height:28px;background:#9a99be;overflow:hidden;"><div style="position:absolute;top:7.61px;font-size:17px;line-height:1;color:#111;white-space:nowrap;letter-spacing:0.72px;left:-62.00px;width:200px;text-align:center;-webkit-text-stroke:0.45px #111;">Better</div></div><div style="position:absolute;left:2101px;top:831px;width:82px;height:28px;background:#545386;overflow:hidden;"><div style="position:absolute;top:7.61px;font-size:17px;line-height:1;color:#fff;white-space:nowrap;letter-spacing:0.72px;left:-59.00px;width:200px;text-align:center;-webkit-text-stroke:0.45px #fff;">Worse</div></div><div style="position:absolute;left:0px;top:883px;width:38px;height:1px;background:#e6e6e6;"></div><div style="position:absolute;top:866.26px;font-size:16px;line-height:1;color:#5c5c5c;white-space:nowrap;left:0.00px;width:38px;text-align:center;">35</div><div style="position:absolute;left:242px;top:859px;width:1.5px;height:24px;background:#d6d6d6;"></div><div style="position:absolute;left:702px;top:859px;width:1.5px;height:24px;background:#d6d6d6;"></div><div style="position:absolute;left:844px;top:859px;width:1.5px;height:24px;background:#d6d6d6;"></div><div style="position:absolute;left:966px;top:859px;width:1.5px;height:24px;background:#d6d6d6;"></div><div style="position:absolute;left:1068.5px;top:859px;width:1.5px;height:24px;background:#d6d6d6;"></div><div style="position:absolute;left:1151px;top:859px;width:1.5px;height:24px;background:#d6d6d6;"></div><div style="position:absolute;left:1272px;top:859px;width:1.5px;height:24px;background:#d6d6d6;"></div><div style="position:absolute;left:1404px;top:859px;width:1.5px;height:24px;background:#d6d6d6;"></div><div style="position:absolute;left:1536px;top:859px;width:1.5px;height:24px;background:#d6d6d6;"></div><div style="position:absolute;left:1586px;top:859px;width:1.5px;height:24px;background:#d6d6d6;"></div><div style="position:absolute;left:1718px;top:859px;width:1.5px;height:24px;background:#d6d6d6;"></div><div style="position:absolute;left:1770px;top:859px;width:1.5px;height:24px;background:#d6d6d6;"></div><div style="position:absolute;left:1902px;top:859px;width:1.5px;height:24px;background:#d6d6d6;"></div><div style="position:absolute;left:1978px;top:859px;width:1.5px;height:24px;background:#d6d6d6;"></div><div style="position:absolute;left:2100px;top:859px;width:1.5px;height:24px;background:#d6d6d6;"></div><div style="position:absolute;left:2182px;top:859px;width:1.5px;height:24px;background:#d6d6d6;"></div><svg style="position:absolute;left:846px;top:859px;" width="10" height="10" viewBox="0 0 10 10"><path d="M0 0 H10 V2 H8 V4 H6 V6 H4 V8 H2 V10 H0 Z" fill="#36801f" shape-rendering="crispEdges"/></svg><div style="position:absolute;top:864.61px;font-size:17px;line-height:1;color:#000;white-space:nowrap;letter-spacing:0.72px;left:44.00px;-webkit-text-stroke:0.45px #000;">Kansas</div><div style="position:absolute;top:864.61px;font-size:17px;line-height:1;color:#000;white-space:nowrap;letter-spacing:0.72px;left:248.00px;-webkit-text-stroke:0.45px #000;">4th Graders Not Proficient in Reading (%)</div><div style="position:absolute;top:864.61px;font-size:17px;line-height:1;color:#000;white-space:nowrap;letter-spacing:0.72px;left:707.00px;-webkit-text-stroke:0.45px #000;">4RD</div><div style="position:absolute;top:864.61px;font-size:17px;line-height:1;color:#000;white-space:nowrap;letter-spacing:0.72px;left:856.00px;width:100px;text-align:center;-webkit-text-stroke:0.45px #000;">2024</div><div style="position:absolute;top:864.61px;font-size:17px;line-height:1;color:#000;white-space:nowrap;letter-spacing:0.72px;left:969.00px;width:100px;text-align:center;-webkit-text-stroke:0.45px #000;">71.7223</div><div style="position:absolute;top:864.61px;font-size:17px;line-height:1;color:#000;white-space:nowrap;letter-spacing:0.72px;left:1070.00px;width:80px;text-align:center;-webkit-text-stroke:0.45px #000;">35</div><div style="position:absolute;top:864.61px;font-size:17px;line-height:1;color:#000;white-space:nowrap;letter-spacing:0.72px;left:1162.00px;width:100px;text-align:center;-webkit-text-stroke:0.45px #000;">24</div><div style="position:absolute;top:864.61px;font-size:17px;line-height:1;color:#000;white-space:nowrap;letter-spacing:0.72px;left:1290.00px;width:100px;text-align:center;-webkit-text-stroke:0.45px #000;">45</div><div style="position:absolute;top:864.61px;font-size:17px;line-height:1;color:#000;white-space:nowrap;letter-spacing:0.72px;left:1422.20px;width:100px;text-align:center;-webkit-text-stroke:0.45px #000;">14</div><div style="position:absolute;top:864.61px;font-size:17px;line-height:1;color:#000;white-space:nowrap;letter-spacing:0.72px;left:1604.20px;width:100px;text-align:center;-webkit-text-stroke:0.45px #000;">5</div><div style="position:absolute;top:864.61px;font-size:17px;line-height:1;color:#000;white-space:nowrap;letter-spacing:0.72px;left:1788.20px;width:100px;text-align:center;-webkit-text-stroke:0.45px #000;">24</div><div style="position:absolute;top:864.61px;font-size:17px;line-height:1;color:#000;white-space:nowrap;letter-spacing:0.72px;left:1991.00px;width:100px;text-align:center;-webkit-text-stroke:0.45px #000;">26</div><div style="position:absolute;top:864.61px;font-size:17px;line-height:1;color:#000;white-space:nowrap;letter-spacing:0.72px;left:2208.30px;width:100px;text-align:center;-webkit-text-stroke:0.45px #000;">24</div><div style="position:absolute;left:1536px;top:859px;width:52px;height:24px;background:#9a99be;overflow:hidden;"><div style="position:absolute;top:5.61px;font-size:17px;line-height:1;color:#111;white-space:nowrap;letter-spacing:0.72px;left:-74.00px;width:200px;text-align:center;-webkit-text-stroke:0.45px #111;">Better</div></div><div style="position:absolute;left:1719px;top:859px;width:52px;height:24px;background:#c8c7dd;overflow:hidden;"><div style="position:absolute;top:5.61px;font-size:17px;line-height:1;color:#111;white-space:nowrap;letter-spacing:0.72px;left:-74.00px;width:200px;text-align:center;-webkit-text-stroke:0.45px #111;">Best</div></div><div style="position:absolute;left:1903px;top:859px;width:76px;height:24px;background:#9a99be;overflow:hidden;"><div style="position:absolute;top:5.61px;font-size:17px;line-height:1;color:#111;white-space:nowrap;letter-spacing:0.72px;left:-62.00px;width:200px;text-align:center;-webkit-text-stroke:0.45px #111;">Better</div></div><div style="position:absolute;left:2101px;top:859px;width:82px;height:24px;background:#545386;overflow:hidden;"><div style="position:absolute;top:5.61px;font-size:17px;line-height:1;color:#fff;white-space:nowrap;letter-spacing:0.72px;left:-59.00px;width:200px;text-align:center;-webkit-text-stroke:0.45px #fff;">Worse</div></div><div style="position:absolute;left:0px;top:909px;width:38px;height:1px;background:#e6e6e6;"></div><div style="position:absolute;top:892.26px;font-size:16px;line-height:1;color:#5c5c5c;white-space:nowrap;left:0.00px;width:38px;text-align:center;">36</div><div style="position:absolute;left:40px;top:883px;width:2290px;height:28px;background:#f3f3f3;"></div><svg style="position:absolute;left:846px;top:883px;" width="10" height="10" viewBox="0 0 10 10"><path d="M0 0 H10 V2 H8 V4 H6 V6 H4 V8 H2 V10 H0 Z" fill="#36801f" shape-rendering="crispEdges"/></svg><div style="position:absolute;top:890.61px;font-size:17px;line-height:1;color:#000;white-space:nowrap;letter-spacing:0.72px;left:44.00px;-webkit-text-stroke:0.45px #000;">Kentucky</div><div style="position:absolute;top:890.61px;font-size:17px;line-height:1;color:#000;white-space:nowrap;letter-spacing:0.72px;left:248.00px;-webkit-text-stroke:0.45px #000;">4th Graders Not Proficient in Reading (%)</div><div style="position:absolute;top:890.61px;font-size:17px;line-height:1;color:#000;white-space:nowrap;letter-spacing:0.72px;left:707.00px;-webkit-text-stroke:0.45px #000;">4RD</div><div style="position:absolute;top:890.61px;font-size:17px;line-height:1;color:#000;white-space:nowrap;letter-spacing:0.72px;left:856.00px;width:100px;text-align:center;-webkit-text-stroke:0.45px #000;">2019</div><div style="position:absolute;top:890.61px;font-size:17px;line-height:1;color:#000;white-space:nowrap;letter-spacing:0.72px;left:969.00px;width:100px;text-align:center;-webkit-text-stroke:0.45px #000;">64.9215</div><div style="position:absolute;top:890.61px;font-size:17px;line-height:1;color:#000;white-space:nowrap;letter-spacing:0.72px;left:1070.00px;width:80px;text-align:center;-webkit-text-stroke:0.45px #000;">26</div><div style="position:absolute;top:890.61px;font-size:17px;line-height:1;color:#000;white-space:nowrap;letter-spacing:0.72px;left:1162.00px;width:100px;text-align:center;-webkit-text-stroke:0.45px #000;">13</div><div style="position:absolute;top:890.61px;font-size:17px;line-height:1;color:#000;white-space:nowrap;letter-spacing:0.72px;left:1290.00px;width:100px;text-align:center;-webkit-text-stroke:0.45px #000;">34</div><div style="position:absolute;top:890.61px;font-size:17px;line-height:1;color:#000;white-space:nowrap;letter-spacing:0.72px;left:1422.20px;width:100px;text-align:center;-webkit-text-stroke:0.45px #000;">36</div><div style="position:absolute;top:890.61px;font-size:17px;line-height:1;color:#000;white-space:nowrap;letter-spacing:0.72px;left:1604.20px;width:100px;text-align:center;-webkit-text-stroke:0.45px #000;">34</div><div style="position:absolute;top:890.61px;font-size:17px;line-height:1;color:#000;white-space:nowrap;letter-spacing:0.72px;left:1788.20px;width:100px;text-align:center;-webkit-text-stroke:0.45px #000;">25</div><div style="position:absolute;top:890.61px;font-size:17px;line-height:1;color:#000;white-space:nowrap;letter-spacing:0.72px;left:1991.00px;width:100px;text-align:center;-webkit-text-stroke:0.45px #000;">31</div><div style="position:absolute;top:890.61px;font-size:17px;line-height:1;color:#000;white-space:nowrap;letter-spacing:0.72px;left:2208.30px;width:100px;text-align:center;-webkit-text-stroke:0.45px #000;">41</div><div style="position:absolute;left:1536px;top:883px;width:52px;height:28px;background:#545386;overflow:hidden;"><div style="position:absolute;top:7.61px;font-size:17px;line-height:1;color:#fff;white-space:nowrap;letter-spacing:0.72px;left:-74.00px;width:200px;text-align:center;-webkit-text-stroke:0.45px #fff;">Worse</div></div><div style="position:absolute;left:1719px;top:883px;width:52px;height:28px;background:#545386;overflow:hidden;"><div style="position:absolute;top:7.61px;font-size:17px;line-height:1;color:#fff;white-space:nowrap;letter-spacing:0.72px;left:-74.00px;width:200px;text-align:center;-webkit-text-stroke:0.45px #fff;">Worse</div></div><div style="position:absolute;left:1903px;top:883px;width:76px;height:28px;background:#9a99be;overflow:hidden;"><div style="position:absolute;top:7.61px;font-size:17px;line-height:1;color:#111;white-space:nowrap;letter-spacing:0.72px;left:-62.00px;width:200px;text-align:center;-webkit-text-stroke:0.45px #111;">Better</div></div><div style="position:absolute;left:2101px;top:883px;width:82px;height:28px;background:#545386;overflow:hidden;"><div style="position:absolute;top:7.61px;font-size:17px;line-height:1;color:#fff;white-space:nowrap;letter-spacing:0.72px;left:-59.00px;width:200px;text-align:center;-webkit-text-stroke:0.45px #fff;">Worse</div></div><div style="position:absolute;left:0px;top:935px;width:38px;height:1px;background:#e6e6e6;"></div><div style="position:absolute;top:918.26px;font-size:16px;line-height:1;color:#5c5c5c;white-space:nowrap;left:0.00px;width:38px;text-align:center;">37</div><div style="position:absolute;left:242px;top:911px;width:1.5px;height:24px;background:#d6d6d6;"></div><div style="position:absolute;left:702px;top:911px;width:1.5px;height:24px;background:#d6d6d6;"></div><div style="position:absolute;left:844px;top:911px;width:1.5px;height:24px;background:#d6d6d6;"></div><div style="position:absolute;left:966px;top:911px;width:1.5px;height:24px;background:#d6d6d6;"></div><div style="position:absolute;left:1068.5px;top:911px;width:1.5px;height:24px;background:#d6d6d6;"></div><div style="position:absolute;left:1151px;top:911px;width:1.5px;height:24px;background:#d6d6d6;"></div><div style="position:absolute;left:1272px;top:911px;width:1.5px;height:24px;background:#d6d6d6;"></div><div style="position:absolute;left:1404px;top:911px;width:1.5px;height:24px;background:#d6d6d6;"></div><div style="position:absolute;left:1536px;top:911px;width:1.5px;height:24px;background:#d6d6d6;"></div><div style="position:absolute;left:1586px;top:911px;width:1.5px;height:24px;background:#d6d6d6;"></div><div style="position:absolute;left:1718px;top:911px;width:1.5px;height:24px;background:#d6d6d6;"></div><div style="position:absolute;left:1770px;top:911px;width:1.5px;height:24px;background:#d6d6d6;"></div><div style="position:absolute;left:1902px;top:911px;width:1.5px;height:24px;background:#d6d6d6;"></div><div style="position:absolute;left:1978px;top:911px;width:1.5px;height:24px;background:#d6d6d6;"></div><div style="position:absolute;left:2100px;top:911px;width:1.5px;height:24px;background:#d6d6d6;"></div><div style="position:absolute;left:2182px;top:911px;width:1.5px;height:24px;background:#d6d6d6;"></div><svg style="position:absolute;left:846px;top:911px;" width="10" height="10" viewBox="0 0 10 10"><path d="M0 0 H10 V2 H8 V4 H6 V6 H4 V8 H2 V10 H0 Z" fill="#36801f" shape-rendering="crispEdges"/></svg><div style="position:absolute;top:916.61px;font-size:17px;line-height:1;color:#000;white-space:nowrap;letter-spacing:0.72px;left:44.00px;-webkit-text-stroke:0.45px #000;">Kentucky</div><div style="position:absolute;top:916.61px;font-size:17px;line-height:1;color:#000;white-space:nowrap;letter-spacing:0.72px;left:248.00px;-webkit-text-stroke:0.45px #000;">4th Graders Not Proficient in Reading (%)</div><div style="position:absolute;top:916.61px;font-size:17px;line-height:1;color:#000;white-space:nowrap;letter-spacing:0.72px;left:707.00px;-webkit-text-stroke:0.45px #000;">4RD</div><div style="position:absolute;top:916.61px;font-size:17px;line-height:1;color:#000;white-space:nowrap;letter-spacing:0.72px;left:856.00px;width:100px;text-align:center;-webkit-text-stroke:0.45px #000;">2024</div><div style="position:absolute;top:916.61px;font-size:17px;line-height:1;color:#000;white-space:nowrap;letter-spacing:0.72px;left:969.00px;width:100px;text-align:center;-webkit-text-stroke:0.45px #000;">67.2907</div><div style="position:absolute;top:916.61px;font-size:17px;line-height:1;color:#000;white-space:nowrap;letter-spacing:0.72px;left:1070.00px;width:80px;text-align:center;-webkit-text-stroke:0.45px #000;">12</div><div style="position:absolute;top:916.61px;font-size:17px;line-height:1;color:#000;white-space:nowrap;letter-spacing:0.72px;left:1162.00px;width:100px;text-align:center;-webkit-text-stroke:0.45px #000;">8</div><div style="position:absolute;top:916.61px;font-size:17px;line-height:1;color:#000;white-space:nowrap;letter-spacing:0.72px;left:1290.00px;width:100px;text-align:center;-webkit-text-stroke:0.45px #000;">31</div><div style="position:absolute;top:916.61px;font-size:17px;line-height:1;color:#000;white-space:nowrap;letter-spacing:0.72px;left:1422.20px;width:100px;text-align:center;-webkit-text-stroke:0.45px #000;">36</div><div style="position:absolute;top:916.61px;font-size:17px;line-height:1;color:#000;white-space:nowrap;letter-spacing:0.72px;left:1604.20px;width:100px;text-align:center;-webkit-text-stroke:0.45px #000;">34</div><div style="position:absolute;top:916.61px;font-size:17px;line-height:1;color:#000;white-space:nowrap;letter-spacing:0.72px;left:1788.20px;width:100px;text-align:center;-webkit-text-stroke:0.45px #000;">25</div><div style="position:absolute;top:916.61px;font-size:17px;line-height:1;color:#000;white-space:nowrap;letter-spacing:0.72px;left:1991.00px;width:100px;text-align:center;-webkit-text-stroke:0.45px #000;">31</div><div style="position:absolute;top:916.61px;font-size:17px;line-height:1;color:#000;white-space:nowrap;letter-spacing:0.72px;left:2208.30px;width:100px;text-align:center;-webkit-text-stroke:0.45px #000;">41</div><div style="position:absolute;left:1536px;top:911px;width:52px;height:24px;background:#545386;overflow:hidden;"><div style="position:absolute;top:5.61px;font-size:17px;line-height:1;color:#fff;white-space:nowrap;letter-spacing:0.72px;left:-74.00px;width:200px;text-align:center;-webkit-text-stroke:0.45px #fff;">Worse</div></div><div style="position:absolute;left:1719px;top:911px;width:52px;height:24px;background:#545386;overflow:hidden;"><div style="position:absolute;top:5.61px;font-size:17px;line-height:1;color:#fff;white-space:nowrap;letter-spacing:0.72px;left:-74.00px;width:200px;text-align:center;-webkit-text-stroke:0.45px #fff;">Worse</div></div><div style="position:absolute;left:1903px;top:911px;width:76px;height:24px;background:#9a99be;overflow:hidden;"><div style="position:absolute;top:5.61px;font-size:17px;line-height:1;color:#111;white-space:nowrap;letter-spacing:0.72px;left:-62.00px;width:200px;text-align:center;-webkit-text-stroke:0.45px #111;">Better</div></div><div style="position:absolute;left:2101px;top:911px;width:82px;height:24px;background:#545386;overflow:hidden;"><div style="position:absolute;top:5.61px;font-size:17px;line-height:1;color:#fff;white-space:nowrap;letter-spacing:0.72px;left:-59.00px;width:200px;text-align:center;-webkit-text-stroke:0.45px #fff;">Worse</div></div><div style="position:absolute;left:0px;top:961px;width:38px;height:1px;background:#e6e6e6;"></div><div style="position:absolute;top:944.26px;font-size:16px;line-height:1;color:#5c5c5c;white-space:nowrap;left:0.00px;width:38px;text-align:center;">38</div><div style="position:absolute;left:40px;top:935px;width:2290px;height:28px;background:#f3f3f3;"></div><svg style="position:absolute;left:846px;top:935px;" width="10" height="10" viewBox="0 0 10 10"><path d="M0 0 H10 V2 H8 V4 H6 V6 H4 V8 H2 V10 H0 Z" fill="#36801f" shape-rendering="crispEdges"/></svg><div style="position:absolute;top:942.61px;font-size:17px;line-height:1;color:#000;white-space:nowrap;letter-spacing:0.72px;left:44.00px;-webkit-text-stroke:0.45px #000;">Louisiana</div><div style="position:absolute;top:942.61px;font-size:17px;line-height:1;color:#000;white-space:nowrap;letter-spacing:0.72px;left:248.00px;-webkit-text-stroke:0.45px #000;">4th Graders Not Proficient in Reading (%)</div><div style="position:absolute;top:942.61px;font-size:17px;line-height:1;color:#000;white-space:nowrap;letter-spacing:0.72px;left:707.00px;-webkit-text-stroke:0.45px #000;">4RD</div><div style="position:absolute;top:942.61px;font-size:17px;line-height:1;color:#000;white-space:nowrap;letter-spacing:0.72px;left:856.00px;width:100px;text-align:center;-webkit-text-stroke:0.45px #000;">2019</div><div style="position:absolute;top:942.61px;font-size:17px;line-height:1;color:#000;white-space:nowrap;letter-spacing:0.72px;left:969.00px;width:100px;text-align:center;-webkit-text-stroke:0.45px #000;">74.2757</div><div style="position:absolute;top:942.61px;font-size:17px;line-height:1;color:#000;white-space:nowrap;letter-spacing:0.72px;left:1070.00px;width:80px;text-align:center;-webkit-text-stroke:0.45px #000;">48</div><div style="position:absolute;top:942.61px;font-size:17px;line-height:1;color:#000;white-space:nowrap;letter-spacing:0.72px;left:1162.00px;width:100px;text-align:center;-webkit-text-stroke:0.45px #000;">47</div><div style="position:absolute;top:942.61px;font-size:17px;line-height:1;color:#000;white-space:nowrap;letter-spacing:0.72px;left:1290.00px;width:100px;text-align:center;-webkit-text-stroke:0.45px #000;">50</div><div style="position:absolute;top:942.61px;font-size:17px;line-height:1;color:#000;white-space:nowrap;letter-spacing:0.72px;left:1422.20px;width:100px;text-align:center;-webkit-text-stroke:0.45px #000;">49</div><div style="position:absolute;top:942.61px;font-size:17px;line-height:1;color:#000;white-space:nowrap;letter-spacing:0.72px;left:1604.20px;width:100px;text-align:center;-webkit-text-stroke:0.45px #000;">50</div><div style="position:absolute;top:942.61px;font-size:17px;line-height:1;color:#000;white-space:nowrap;letter-spacing:0.72px;left:1788.20px;width:100px;text-align:center;-webkit-text-stroke:0.45px #000;">35</div><div style="position:absolute;top:942.61px;font-size:17px;line-height:1;color:#000;white-space:nowrap;letter-spacing:0.72px;left:1991.00px;width:100px;text-align:center;-webkit-text-stroke:0.45px #000;">49</div><div style="position:absolute;top:942.61px;font-size:17px;line-height:1;color:#000;white-space:nowrap;letter-spacing:0.72px;left:2208.30px;width:100px;text-align:center;-webkit-text-stroke:0.45px #000;">49</div><div style="position:absolute;left:1536px;top:935px;width:52px;height:28px;background:#2d2c5e;overflow:hidden;"><div style="position:absolute;top:7.61px;font-size:17px;line-height:1;color:#fff;white-space:nowrap;letter-spacing:0.72px;left:-74.00px;width:200px;text-align:center;-webkit-text-stroke:0.45px #fff;">Worst</div></div><div style="position:absolute;left:1719px;top:935px;width:52px;height:28px;background:#2d2c5e;overflow:hidden;"><div style="position:absolute;top:7.61px;font-size:17px;line-height:1;color:#fff;white-space:nowrap;letter-spacing:0.72px;left:-74.00px;width:200px;text-align:center;-webkit-text-stroke:0.45px #fff;">Worst</div></div><div style="position:absolute;left:1903px;top:935px;width:76px;height:28px;background:#545386;overflow:hidden;"><div style="position:absolute;top:7.61px;font-size:17px;line-height:1;color:#fff;white-space:nowrap;letter-spacing:0.72px;left:-62.00px;width:200px;text-align:center;-webkit-text-stroke:0.45px #fff;">Worse</div></div><div style="position:absolute;left:2101px;top:935px;width:82px;height:28px;background:#2d2c5e;overflow:hidden;"><div style="position:absolute;top:7.61px;font-size:17px;line-height:1;color:#fff;white-space:nowrap;letter-spacing:0.72px;left:-59.00px;width:200px;text-align:center;-webkit-text-stroke:0.45px #fff;">Worst</div></div><div style="position:absolute;left:0px;top:987px;width:38px;height:1px;background:#e6e6e6;"></div><div style="position:absolute;top:970.26px;font-size:16px;line-height:1;color:#5c5c5c;white-space:nowrap;left:0.00px;width:38px;text-align:center;">39</div><div style="position:absolute;left:242px;top:963px;width:1.5px;height:24px;background:#d6d6d6;"></div><div style="position:absolute;left:702px;top:963px;width:1.5px;height:24px;background:#d6d6d6;"></div><div style="position:absolute;left:844px;top:963px;width:1.5px;height:24px;background:#d6d6d6;"></div><div style="position:absolute;left:966px;top:963px;width:1.5px;height:24px;background:#d6d6d6;"></div><div style="position:absolute;left:1068.5px;top:963px;width:1.5px;height:24px;background:#d6d6d6;"></div><div style="position:absolute;left:1151px;top:963px;width:1.5px;height:24px;background:#d6d6d6;"></div><div style="position:absolute;left:1272px;top:963px;width:1.5px;height:24px;background:#d6d6d6;"></div><div style="position:absolute;left:1404px;top:963px;width:1.5px;height:24px;background:#d6d6d6;"></div><div style="position:absolute;left:1536px;top:963px;width:1.5px;height:24px;background:#d6d6d6;"></div><div style="position:absolute;left:1586px;top:963px;width:1.5px;height:24px;background:#d6d6d6;"></div><div style="position:absolute;left:1718px;top:963px;width:1.5px;height:24px;background:#d6d6d6;"></div><div style="position:absolute;left:1770px;top:963px;width:1.5px;height:24px;background:#d6d6d6;"></div><div style="position:absolute;left:1902px;top:963px;width:1.5px;height:24px;background:#d6d6d6;"></div><div style="position:absolute;left:1978px;top:963px;width:1.5px;height:24px;background:#d6d6d6;"></div><div style="position:absolute;left:2100px;top:963px;width:1.5px;height:24px;background:#d6d6d6;"></div><div style="position:absolute;left:2182px;top:963px;width:1.5px;height:24px;background:#d6d6d6;"></div><svg style="position:absolute;left:846px;top:963px;" width="10" height="10" viewBox="0 0 10 10"><path d="M0 0 H10 V2 H8 V4 H6 V6 H4 V8 H2 V10 H0 Z" fill="#36801f" shape-rendering="crispEdges"/></svg><div style="position:absolute;top:968.61px;font-size:17px;line-height:1;color:#000;white-space:nowrap;letter-spacing:0.72px;left:44.00px;-webkit-text-stroke:0.45px #000;">Louisiana</div><div style="position:absolute;top:968.61px;font-size:17px;line-height:1;color:#000;white-space:nowrap;letter-spacing:0.72px;left:248.00px;-webkit-text-stroke:0.45px #000;">4th Graders Not Proficient in Reading (%)</div><div style="position:absolute;top:968.61px;font-size:17px;line-height:1;color:#000;white-space:nowrap;letter-spacing:0.72px;left:707.00px;-webkit-text-stroke:0.45px #000;">4RD</div><div style="position:absolute;top:968.61px;font-size:17px;line-height:1;color:#000;white-space:nowrap;letter-spacing:0.72px;left:856.00px;width:100px;text-align:center;-webkit-text-stroke:0.45px #000;">2024</div><div style="position:absolute;top:968.61px;font-size:17px;line-height:1;color:#000;white-space:nowrap;letter-spacing:0.72px;left:969.00px;width:100px;text-align:center;-webkit-text-stroke:0.45px #000;">68.1608</div><div style="position:absolute;top:968.61px;font-size:17px;line-height:1;color:#000;white-space:nowrap;letter-spacing:0.72px;left:1070.00px;width:80px;text-align:center;-webkit-text-stroke:0.45px #000;">20</div><div style="position:absolute;top:968.61px;font-size:17px;line-height:1;color:#000;white-space:nowrap;letter-spacing:0.72px;left:1162.00px;width:100px;text-align:center;-webkit-text-stroke:0.45px #000;">8</div><div style="position:absolute;top:968.61px;font-size:17px;line-height:1;color:#000;white-space:nowrap;letter-spacing:0.72px;left:1290.00px;width:100px;text-align:center;-webkit-text-stroke:0.45px #000;">32</div><div style="position:absolute;top:968.61px;font-size:17px;line-height:1;color:#000;white-space:nowrap;letter-spacing:0.72px;left:1422.20px;width:100px;text-align:center;-webkit-text-stroke:0.45px #000;">49</div><div style="position:absolute;top:968.61px;font-size:17px;line-height:1;color:#000;white-space:nowrap;letter-spacing:0.72px;left:1604.20px;width:100px;text-align:center;-webkit-text-stroke:0.45px #000;">50</div><div style="position:absolute;top:968.61px;font-size:17px;line-height:1;color:#000;white-space:nowrap;letter-spacing:0.72px;left:1788.20px;width:100px;text-align:center;-webkit-text-stroke:0.45px #000;">35</div><div style="position:absolute;top:968.61px;font-size:17px;line-height:1;color:#000;white-space:nowrap;letter-spacing:0.72px;left:1991.00px;width:100px;text-align:center;-webkit-text-stroke:0.45px #000;">49</div><div style="position:absolute;top:968.61px;font-size:17px;line-height:1;color:#000;white-space:nowrap;letter-spacing:0.72px;left:2208.30px;width:100px;text-align:center;-webkit-text-stroke:0.45px #000;">49</div><div style="position:absolute;left:1536px;top:963px;width:52px;height:24px;background:#2d2c5e;overflow:hidden;"><div style="position:absolute;top:5.61px;font-size:17px;line-height:1;color:#fff;white-space:nowrap;letter-spacing:0.72px;left:-74.00px;width:200px;text-align:center;-webkit-text-stroke:0.45px #fff;">Worst</div></div><div style="position:absolute;left:1719px;top:963px;width:52px;height:24px;background:#2d2c5e;overflow:hidden;"><div style="position:absolute;top:5.61px;font-size:17px;line-height:1;color:#fff;white-space:nowrap;letter-spacing:0.72px;left:-74.00px;width:200px;text-align:center;-webkit-text-stroke:0.45px #fff;">Worst</div></div><div style="position:absolute;left:1903px;top:963px;width:76px;height:24px;background:#545386;overflow:hidden;"><div style="position:absolute;top:5.61px;font-size:17px;line-height:1;color:#fff;white-space:nowrap;letter-spacing:0.72px;left:-62.00px;width:200px;text-align:center;-webkit-text-stroke:0.45px #fff;">Worse</div></div><div style="position:absolute;left:2101px;top:963px;width:82px;height:24px;background:#2d2c5e;overflow:hidden;"><div style="position:absolute;top:5.61px;font-size:17px;line-height:1;color:#fff;white-space:nowrap;letter-spacing:0.72px;left:-59.00px;width:200px;text-align:center;-webkit-text-stroke:0.45px #fff;">Worst</div></div></div><div style="position:absolute;left:40px;top:364px;width:203px;height:49.5px;overflow:hidden;"><div style="position:absolute;top:15.56px;font-size:17.3px;line-height:1;color:#fff;white-space:nowrap;font-weight:bold;letter-spacing:0.35px;left:-48.50px;width:300px;text-align:center;-webkit-text-stroke:0.45px #fff;">Location</div></div><div style="position:absolute;left:243px;top:364px;width:460px;height:49.5px;overflow:hidden;"><div style="position:absolute;top:15.56px;font-size:17.3px;line-height:1;color:#fff;white-space:nowrap;font-weight:bold;letter-spacing:0.35px;left:80.00px;width:300px;text-align:center;-webkit-text-stroke:0.45px #fff;">Metric</div></div><div style="position:absolute;left:703px;top:364px;width:142px;height:49.5px;overflow:hidden;"><div style="position:absolute;top:15.56px;font-size:17.3px;line-height:1;color:#fff;white-space:nowrap;font-weight:bold;letter-spacing:0.35px;left:-79.00px;width:300px;text-align:center;-webkit-text-stroke:0.45px #fff;">Metric Short</div></div><div style="position:absolute;left:845px;top:364px;width:122px;height:49.5px;overflow:hidden;"><div style="position:absolute;top:15.56px;font-size:17.3px;line-height:1;color:#fff;white-space:nowrap;font-weight:bold;letter-spacing:0.35px;left:-89.00px;width:300px;text-align:center;-webkit-text-stroke:0.45px #fff;">Year</div></div><div style="position:absolute;left:967px;top:364px;width:102.5px;height:49.5px;overflow:hidden;"><div style="position:absolute;top:15.56px;font-size:17.3px;line-height:1;color:#fff;white-space:nowrap;font-weight:bold;letter-spacing:0.35px;left:-98.75px;width:300px;text-align:center;-webkit-text-stroke:0.45px #fff;">Value</div></div><div style="position:absolute;left:1069.5px;top:364px;width:82.5px;height:49.5px;overflow:hidden;"><div style="position:absolute;top:15.56px;font-size:17.3px;line-height:1;color:#fff;white-space:nowrap;font-weight:bold;letter-spacing:0.35px;left:-108.75px;width:300px;text-align:center;-webkit-text-stroke:0.45px #fff;">Rank</div></div><div style="position:absolute;left:1152px;top:364px;width:121px;height:49.5px;overflow:hidden;"><div style="position:absolute;top:15.56px;font-size:17.3px;line-height:1;color:#fff;white-space:nowrap;font-weight:bold;letter-spacing:0.35px;left:-89.50px;width:300px;text-align:center;-webkit-text-stroke:0.45px #fff;">Rank Best</div></div><div style="position:absolute;left:1273px;top:364px;width:132px;height:49.5px;overflow:hidden;"><div style="position:absolute;top:15.56px;font-size:17.3px;line-height:1;color:#fff;white-space:nowrap;font-weight:bold;letter-spacing:0.35px;left:-84.00px;width:300px;text-align:center;-webkit-text-stroke:0.45px #fff;">Rank Worst</div></div><div style="position:absolute;left:1405px;top:364px;width:132px;height:49.5px;overflow:hidden;"><div style="position:absolute;top:15.56px;font-size:17.3px;line-height:1;color:#fff;white-space:nowrap;font-weight:bold;letter-spacing:0.35px;left:-84.00px;width:300px;text-align:center;-webkit-text-stroke:0.45px #fff;">Overall Rank</div></div><div style="position:absolute;left:1537px;top:364px;width:50px;height:49.5px;overflow:hidden;"><div style="position:absolute;top:-4.24px;font-size:17.3px;line-height:1;color:#fff;white-space:nowrap;font-weight:bold;letter-spacing:0.35px;left:-125.00px;width:300px;text-align:center;-webkit-text-stroke:0.45px #fff;">Ove</div><div style="position:absolute;top:17.46px;font-size:17.3px;line-height:1;color:#fff;white-space:nowrap;font-weight:bold;letter-spacing:0.35px;left:-125.00px;width:300px;text-align:center;-webkit-text-stroke:0.45px #fff;">rall</div><div style="position:absolute;top:39.16px;font-size:17.3px;line-height:1;color:#fff;white-space:nowrap;font-weight:bold;letter-spacing:0.35px;left:-125.00px;width:300px;text-align:center;-webkit-text-stroke:0.45px #fff;">Cate</div></div><div style="position:absolute;left:1587px;top:364px;width:132px;height:49.5px;overflow:hidden;"><div style="position:absolute;top:4.96px;font-size:17.3px;line-height:1;color:#fff;white-space:nowrap;font-weight:bold;letter-spacing:0.35px;left:-84.00px;width:300px;text-align:center;-webkit-text-stroke:0.45px #fff;">Economic</div><div style="position:absolute;top:26.66px;font-size:17.3px;line-height:1;color:#fff;white-space:nowrap;font-weight:bold;letter-spacing:0.35px;left:-84.00px;width:300px;text-align:center;-webkit-text-stroke:0.45px #fff;">Rank</div></div><div style="position:absolute;left:1719px;top:364px;width:52px;height:49.5px;overflow:hidden;"><div style="position:absolute;top:-4.24px;font-size:17.3px;line-height:1;color:#fff;white-space:nowrap;font-weight:bold;letter-spacing:0.35px;left:-124.00px;width:300px;text-align:center;-webkit-text-stroke:0.45px #fff;">Econ</div><div style="position:absolute;top:17.46px;font-size:17.3px;line-height:1;color:#fff;white-space:nowrap;font-weight:bold;letter-spacing:0.35px;left:-124.00px;width:300px;text-align:center;-webkit-text-stroke:0.45px #fff;">omic</div><div style="position:absolute;top:39.16px;font-size:17.3px;line-height:1;color:#fff;white-space:nowrap;font-weight:bold;letter-spacing:0.35px;left:-124.00px;width:300px;text-align:center;-webkit-text-stroke:0.45px #fff;">Cate</div></div><div style="position:absolute;left:1771px;top:364px;width:132px;height:49.5px;overflow:hidden;"><div style="position:absolute;top:4.96px;font-size:17.3px;line-height:1;color:#fff;white-space:nowrap;font-weight:bold;letter-spacing:0.35px;left:-84.00px;width:300px;text-align:center;-webkit-text-stroke:0.45px #fff;">Education</div><div style="position:absolute;top:26.66px;font-size:17.3px;line-height:1;color:#fff;white-space:nowrap;font-weight:bold;letter-spacing:0.35px;left:-84.00px;width:300px;text-align:center;-webkit-text-stroke:0.45px #fff;">Rank</div></div><div style="position:absolute;left:1903px;top:364px;width:76px;height:49.5px;overflow:hidden;"><div style="position:absolute;top:-4.24px;font-size:17.3px;line-height:1;color:#fff;white-space:nowrap;font-weight:bold;letter-spacing:0.35px;left:-112.00px;width:300px;text-align:center;-webkit-text-stroke:0.45px #fff;">Educati</div><div style="position:absolute;top:17.46px;font-size:17.3px;line-height:1;color:#fff;white-space:nowrap;font-weight:bold;letter-spacing:0.35px;left:-112.00px;width:300px;text-align:center;-webkit-text-stroke:0.45px #fff;">on</div><div style="position:absolute;top:39.16px;font-size:17.3px;line-height:1;color:#fff;white-space:nowrap;font-weight:bold;letter-spacing:0.35px;left:-112.00px;width:300px;text-align:center;-webkit-text-stroke:0.45px #fff;">Categor</div></div><div style="position:absolute;left:1979px;top:364px;width:122px;height:49.5px;overflow:hidden;"><div style="position:absolute;top:15.56px;font-size:17.3px;line-height:1;color:#fff;white-space:nowrap;font-weight:bold;letter-spacing:0.35px;left:-89.00px;width:300px;text-align:center;-webkit-text-stroke:0.45px #fff;">Health Rank</div></div><div style="position:absolute;left:2101px;top:364px;width:82px;height:49.5px;overflow:hidden;"><div style="position:absolute;top:-4.24px;font-size:17.3px;line-height:1;color:#fff;white-space:nowrap;font-weight:bold;letter-spacing:0.35px;left:-109.00px;width:300px;text-align:center;-webkit-text-stroke:0.45px #fff;">Health</div><div style="position:absolute;top:17.46px;font-size:17.3px;line-height:1;color:#fff;white-space:nowrap;font-weight:bold;letter-spacing:0.35px;left:-109.00px;width:300px;text-align:center;-webkit-text-stroke:0.45px #fff;">Categor</div><div style="position:absolute;top:39.16px;font-size:17.3px;line-height:1;color:#fff;white-space:nowrap;font-weight:bold;letter-spacing:0.35px;left:-109.00px;width:300px;text-align:center;-webkit-text-stroke:0.45px #fff;">y</div></div><div style="position:absolute;left:2183px;top:364px;width:148px;height:49.5px;overflow:hidden;"><div style="position:absolute;top:-4.24px;font-size:17.3px;line-height:1;color:#fff;white-space:nowrap;font-weight:bold;letter-spacing:0.35px;left:-76.00px;width:300px;text-align:center;-webkit-text-stroke:0.45px #fff;">Family &amp;</div><div style="position:absolute;top:17.46px;font-size:17.3px;line-height:1;color:#fff;white-space:nowrap;font-weight:bold;letter-spacing:0.35px;left:-76.00px;width:300px;text-align:center;-webkit-text-stroke:0.45px #fff;">Community</div><div style="position:absolute;top:39.16px;font-size:17.3px;line-height:1;color:#fff;white-space:nowrap;font-weight:bold;letter-spacing:0.35px;left:-76.00px;width:300px;text-align:center;-webkit-text-stroke:0.45px #fff;">Rank</div></div><div style="position:absolute;left:210px;top:380px;width:30px;height:30px;background:linear-gradient(#fff,#f3f3f3);box-shadow:0 0 0 1.3px rgba(12,18,28,.85);"></div><svg style="position:absolute;left:210px;top:380px;" width="30" height="30" viewBox="0 0 30 30"><path d="M6.6 11.2 H23.7 L15.15 20.9 Z" fill="#7d7d7d" stroke="#7d7d7d" stroke-width="0.8" stroke-linejoin="round"/></svg><div style="position:absolute;left:670px;top:380px;width:30px;height:30px;background:linear-gradient(#fff,#f3f3f3);box-shadow:0 0 0 1.3px rgba(12,18,28,.85);"></div><svg style="position:absolute;left:670px;top:380px;" width="30" height="30" viewBox="0 0 30 30"><path d="M2.6 16.8 H13 L7.8 23.4 Z" fill="#7a7a7a"/><path d="M16.9 13 H28.1 L22.5 6.2 Z" fill="#7a7a7a"/><rect x="21.2" y="12" width="2.6" height="11" fill="#7a7a7a"/></svg><div style="position:absolute;left:812px;top:380px;width:30px;height:30px;background:linear-gradient(#fff,#f3f3f3);box-shadow:0 0 0 1.3px rgba(12,18,28,.85);"></div><svg style="position:absolute;left:812px;top:380px;" width="30" height="30" viewBox="0 0 30 30"><path d="M6.6 11.2 H23.7 L15.15 20.9 Z" fill="#7d7d7d" stroke="#7d7d7d" stroke-width="0.8" stroke-linejoin="round"/></svg><div style="position:absolute;left:934px;top:380px;width:30px;height:30px;background:linear-gradient(#fff,#f3f3f3);box-shadow:0 0 0 1.3px rgba(12,18,28,.85);"></div><svg style="position:absolute;left:934px;top:380px;" width="30" height="30" viewBox="0 0 30 30"><path d="M6.6 11.2 H23.7 L15.15 20.9 Z" fill="#7d7d7d" stroke="#7d7d7d" stroke-width="0.8" stroke-linejoin="round"/></svg><div style="position:absolute;left:1036px;top:380px;width:30px;height:30px;background:linear-gradient(#fff,#f3f3f3);box-shadow:0 0 0 1.3px rgba(12,18,28,.85);"></div><svg style="position:absolute;left:1036px;top:380px;" width="30" height="30" viewBox="0 0 30 30"><path d="M6.6 11.2 H23.7 L15.15 20.9 Z" fill="#7d7d7d" stroke="#7d7d7d" stroke-width="0.8" stroke-linejoin="round"/></svg><div style="position:absolute;left:1119px;top:380px;width:30px;height:30px;background:linear-gradient(#fff,#f3f3f3);box-shadow:0 0 0 1.3px rgba(12,18,28,.85);"></div><svg style="position:absolute;left:1119px;top:380px;" width="30" height="30" viewBox="0 0 30 30"><path d="M6.6 11.2 H23.7 L15.15 20.9 Z" fill="#7d7d7d" stroke="#7d7d7d" stroke-width="0.8" stroke-linejoin="round"/></svg><div style="position:absolute;left:1240px;top:380px;width:30px;height:30px;background:linear-gradient(#fff,#f3f3f3);box-shadow:0 0 0 1.3px rgba(12,18,28,.85);"></div><svg style="position:absolute;left:1240px;top:380px;" width="30" height="30" viewBox="0 0 30 30"><path d="M6.6 11.2 H23.7 L15.15 20.9 Z" fill="#7d7d7d" stroke="#7d7d7d" stroke-width="0.8" stroke-linejoin="round"/></svg><div style="position:absolute;left:1372px;top:380px;width:30px;height:30px;background:linear-gradient(#fff,#f3f3f3);box-shadow:0 0 0 1.3px rgba(12,18,28,.85);"></div><svg style="position:absolute;left:1372px;top:380px;" width="30" height="30" viewBox="0 0 30 30"><path d="M6.6 11.2 H23.7 L15.15 20.9 Z" fill="#7d7d7d" stroke="#7d7d7d" stroke-width="0.8" stroke-linejoin="round"/></svg><div style="position:absolute;left:1504px;top:380px;width:30px;height:30px;background:linear-gradient(#fff,#f3f3f3);box-shadow:0 0 0 1.3px rgba(12,18,28,.85);"></div><svg style="position:absolute;left:1504px;top:380px;" width="30" height="30" viewBox="0 0 30 30"><path d="M6.6 11.2 H23.7 L15.15 20.9 Z" fill="#7d7d7d" stroke="#7d7d7d" stroke-width="0.8" stroke-linejoin="round"/></svg><div style="position:absolute;left:1554px;top:380px;width:30px;height:30px;background:linear-gradient(#fff,#f3f3f3);box-shadow:0 0 0 1.3px rgba(12,18,28,.85);"></div><svg style="position:absolute;left:1554px;top:380px;" width="30" height="30" viewBox="0 0 30 30"><path d="M6.6 11.2 H23.7 L15.15 20.9 Z" fill="#7d7d7d" stroke="#7d7d7d" stroke-width="0.8" stroke-linejoin="round"/></svg><div style="position:absolute;left:1686px;top:380px;width:30px;height:30px;background:linear-gradient(#fff,#f3f3f3);box-shadow:0 0 0 1.3px rgba(12,18,28,.85);"></div><svg style="position:absolute;left:1686px;top:380px;" width="30" height="30" viewBox="0 0 30 30"><path d="M6.6 11.2 H23.7 L15.15 20.9 Z" fill="#7d7d7d" stroke="#7d7d7d" stroke-width="0.8" stroke-linejoin="round"/></svg><div style="position:absolute;left:1738px;top:380px;width:30px;height:30px;background:linear-gradient(#fff,#f3f3f3);box-shadow:0 0 0 1.3px rgba(12,18,28,.85);"></div><svg style="position:absolute;left:1738px;top:380px;" width="30" height="30" viewBox="0 0 30 30"><path d="M6.6 11.2 H23.7 L15.15 20.9 Z" fill="#7d7d7d" stroke="#7d7d7d" stroke-width="0.8" stroke-linejoin="round"/></svg><div style="position:absolute;left:1870px;top:380px;width:30px;height:30px;background:linear-gradient(#fff,#f3f3f3);box-shadow:0 0 0 1.3px rgba(12,18,28,.85);"></div><svg style="position:absolute;left:1870px;top:380px;" width="30" height="30" viewBox="0 0 30 30"><path d="M6.6 11.2 H23.7 L15.15 20.9 Z" fill="#7d7d7d" stroke="#7d7d7d" stroke-width="0.8" stroke-linejoin="round"/></svg><div style="position:absolute;left:1946px;top:380px;width:30px;height:30px;background:linear-gradient(#fff,#f3f3f3);box-shadow:0 0 0 1.3px rgba(12,18,28,.85);"></div><svg style="position:absolute;left:1946px;top:380px;" width="30" height="30" viewBox="0 0 30 30"><path d="M6.6 11.2 H23.7 L15.15 20.9 Z" fill="#7d7d7d" stroke="#7d7d7d" stroke-width="0.8" stroke-linejoin="round"/></svg><div style="position:absolute;left:2068px;top:380px;width:30px;height:30px;background:linear-gradient(#fff,#f3f3f3);box-shadow:0 0 0 1.3px rgba(12,18,28,.85);"></div><svg style="position:absolute;left:2068px;top:380px;" width="30" height="30" viewBox="0 0 30 30"><path d="M6.6 11.2 H23.7 L15.15 20.9 Z" fill="#7d7d7d" stroke="#7d7d7d" stroke-width="0.8" stroke-linejoin="round"/></svg><div style="position:absolute;left:2150px;top:380px;width:30px;height:30px;background:linear-gradient(#fff,#f3f3f3);box-shadow:0 0 0 1.3px rgba(12,18,28,.85);"></div><svg style="position:absolute;left:2150px;top:380px;" width="30" height="30" viewBox="0 0 30 30"><path d="M6.6 11.2 H23.7 L15.15 20.9 Z" fill="#7d7d7d" stroke="#7d7d7d" stroke-width="0.8" stroke-linejoin="round"/></svg><div style="position:absolute;left:2299px;top:380px;width:30px;height:30px;background:linear-gradient(#fff,#f3f3f3);box-shadow:0 0 0 1.3px rgba(12,18,28,.85);"></div><svg style="position:absolute;left:2299px;top:380px;" width="30" height="30" viewBox="0 0 30 30"><path d="M6.6 11.2 H23.7 L15.15 20.9 Z" fill="#7d7d7d" stroke="#7d7d7d" stroke-width="0.8" stroke-linejoin="round"/></svg><div style="position:absolute;left:1066px;top:438px;width:88px;height:31.5px;border:3.6px solid #3a7a4c;box-sizing:border-box;"></div><div style="position:absolute;left:1144px;top:459px;width:12px;height:12px;background:#ffffff;"></div><div style="position:absolute;left:1146.5px;top:462px;width:9.5px;height:9.5px;background:#3a7a4c;"></div><div style="position:absolute;left:0px;top:1396px;width:2330px;height:53px;background:#f0f0f0;"></div><div style="position:absolute;left:0px;top:1395px;width:2330px;height:1.5px;background:#c8c8c8;"></div><svg style="position:absolute;left:28px;top:1412px;" width="18" height="22" viewBox="0 0 18 22"><path d="M16 1 V21 L2 11 Z" fill="#bdbdbd"/></svg><svg style="position:absolute;left:74px;top:1412px;" width="18" height="22" viewBox="0 0 18 22"><path d="M2 1 V21 L16 11 Z" fill="#bdbdbd"/></svg><div style="position:absolute;left:121px;top:1398px;width:1.5px;height:40px;background:#cfcfcf;"></div><div style="position:absolute;left:803px;top:1398px;width:1.5px;height:40px;background:#cfcfcf;"></div><div style="position:absolute;left:1022px;top:1398px;width:1.5px;height:40px;background:#cfcfcf;"></div><div style="position:absolute;left:1264px;top:1398px;width:1.5px;height:40px;background:#cfcfcf;"></div><div style="position:absolute;left:1341px;top:1398px;width:1.5px;height:40px;background:#cfcfcf;"></div><div style="position:absolute;top:1410.53px;font-size:23px;line-height:1;color:#626262;white-space:nowrap;letter-spacing:0.78px;left:157.00px;-webkit-text-stroke:0.3px #626262;">Improvement</div><div style="position:absolute;left:339px;top:1395px;width:157px;height:46px;background:#fff;border-radius:0 0 6px 6px;box-shadow:0 1px 2px rgba(0,0,0,.35);"></div><div style="position:absolute;top:1410.53px;font-size:23px;line-height:1;color:#3b8254;white-space:nowrap;font-weight:bold;letter-spacing:0.35px;left:392.00px;">Data</div><div style="position:absolute;top:1410.53px;font-size:23px;line-height:1;color:#626262;white-space:nowrap;letter-spacing:0.78px;left:536.00px;-webkit-text-stroke:0.3px #626262;">Data Simplified 2023</div><div style="position:absolute;top:1410.53px;font-size:23px;line-height:1;color:#626262;white-space:nowrap;letter-spacing:0.78px;left:838.00px;-webkit-text-stroke:0.3px #626262;">Ranking Data</div><div style="position:absolute;top:1410.53px;font-size:23px;line-height:1;color:#626262;white-space:nowrap;letter-spacing:0.78px;left:1060.00px;-webkit-text-stroke:0.3px #626262;">Data Simplified</div><svg style="position:absolute;left:1292px;top:1410px;" width="24" height="24" viewBox="0 0 24 24"><path d="M12 2 V22 M2 12 H22" stroke="#555" stroke-width="3.4"/></svg><div style="position:absolute;left:0px;top:1448px;width:2330px;height:1.5px;background:#9c9c9c;"></div><div style="position:absolute;left:0;top:1449.5px;width:2330px;height:43px;background:linear-gradient(#e3e3e3,#d7d7d7);"></div><div style="position:absolute;top:1460.53px;font-size:23px;line-height:1;color:#555;white-space:nowrap;letter-spacing:0.6px;left:49.00px;-webkit-text-stroke:0.25px #555;">Ready</div><div style="position:absolute;left:1750px;top:1450px;width:74px;height:42px;background:#a9a9a9;"></div><svg style="position:absolute;left:1772px;top:1456px;" width="30" height="30" viewBox="0 0 30 30"><rect x="2" y="2" width="7" height="7" fill="#fff"/><rect x="2" y="11" width="7" height="7" fill="#fff"/><rect x="2" y="20" width="7" height="7" fill="#fff"/><rect x="11" y="2" width="7" height="7" fill="#fff"/><rect x="11" y="11" width="7" height="7" fill="#fff"/><rect x="11" y="20" width="7" height="7" fill="#fff"/><rect x="20" y="2" width="7" height="7" fill="#fff"/><rect x="20" y="11" width="7" height="7" fill="#fff"/><rect x="20" y="20" width="7" height="7" fill="#fff"/></svg><svg style="position:absolute;left:1844px;top:1457px;" width="30" height="28" viewBox="0 0 30 28"><rect x="2" y="2" width="26" height="24" fill="none" stroke="#5f5f5f" stroke-width="2.2"/><rect x="7" y="6" width="16" height="16" fill="none" stroke="#5f5f5f" stroke-width="2"/><path d="M10 11 H20 M10 14 H20 M10 17 H20" stroke="#5f5f5f" stroke-width="1.6"/></svg><svg style="position:absolute;left:1915px;top:1457px;" width="30" height="28" viewBox="0 0 30 28"><rect x="2" y="2" width="26" height="24" fill="none" stroke="#5f5f5f" stroke-width="2.2"/><path d="M2 15 H15 V2 M9 2 V15" fill="none" stroke="#5f5f5f" stroke-width="2"/></svg><div style="position:absolute;left:1982px;top:1469.5px;width:16px;height:4px;background:#5f5f5f;"></div><div style="position:absolute;left:2012px;top:1468px;width:200px;height:8px;border-radius:4px;background:#9c9c9c;"></div><div style="position:absolute;left:2082px;top:1455px;width:32px;height:32px;border-radius:50%;background:#fff;box-shadow:0 1px 3px rgba(0,0,0,.35);"></div><svg style="position:absolute;left:2225px;top:1463px;" width="18" height="18" viewBox="0 0 18 18"><path d="M9 1 V17 M1 9 H17" stroke="#5f5f5f" stroke-width="3.6"/></svg><div style="position:absolute;top:1460.11px;font-size:23.5px;line-height:1;color:#555;white-space:nowrap;letter-spacing:0.8px;left:2282.00px;">85%</div><svg style="position:absolute;left:0px;top:1470px;" width="24" height="22" viewBox="0 0 24 22"><path d="M0 3 Q0.5 19 14 22 H0 Z" fill="#d0d0d0"/><path d="M0.5 3 Q1 19.5 14 22" fill="none" stroke="#8f8f8f" stroke-width="1.2"/></svg>
</body></html>
